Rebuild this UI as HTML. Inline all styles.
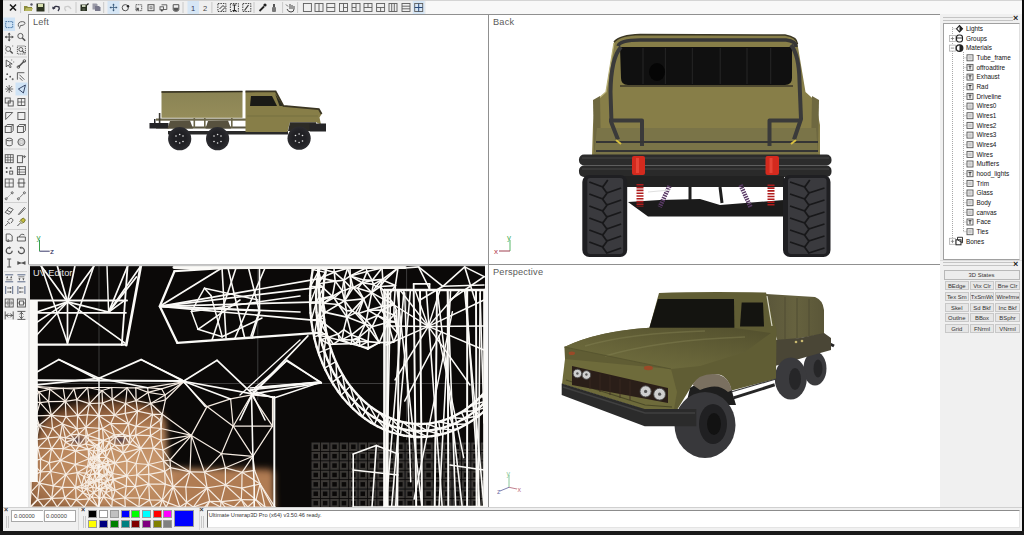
<!DOCTYPE html>
<html><head><meta charset="utf-8">
<style>
*{margin:0;padding:0;box-sizing:border-box}
html,body{width:1024px;height:535px;overflow:hidden;background:#f0f0f0;font-family:"Liberation Sans",sans-serif;position:relative}
.a{position:absolute}
#blkL{left:0;top:0;width:3px;height:535px;background:#0a0a0a}
#blkR{left:1022px;top:0;width:2px;height:535px;background:#0a0a0a}
#blkB{left:0;top:531px;width:1024px;height:4px;background:#1a1a1a}
#topbar{left:3px;top:0;width:1019px;height:14px;background:linear-gradient(90deg,#efefef 0,#efefef 423px,#f8f8f8 423px);border-top:1px solid #d4d4d4}
#lefttb{left:3px;top:14px;width:25px;height:306px;background:#f0f0f0}
#leftwh{left:3px;top:320px;width:25px;height:187px;background:#fdfdfd}
.vp{position:absolute;background:#fff;overflow:hidden}
.lbl{position:absolute;font-size:9.2px;color:#5a5a5a;letter-spacing:0.2px}
#rp{left:940px;top:14px;width:82px;height:493px;background:#f0f0f0}
#tree{left:943px;top:23px;width:77px;height:237px;background:#fff;border:1px solid #a0a0a0;border-right:1px solid #e0e0e0}
.ti{position:absolute;font-size:6.4px;color:#111;white-space:nowrap}
.btn{position:absolute;background:#e6e6e6;border:1px solid #c8c8c8;font-size:5.9px;color:#333;text-align:center;line-height:8px;white-space:nowrap;overflow:hidden}
#status{left:3px;top:507px;width:1019px;height:24px;background:#f0f0f0;border-top:1px solid #d0d0d0}
.sw{position:absolute;width:9px;height:8px}
</style></head><body>
<div id="blkL" class="a"></div>
<div id="blkR" class="a"></div>
<div id="blkB" class="a"></div>
<div id="topbar" class="a"></div>
<div id="lefttb" class="a"></div>
<div id="leftwh" class="a"></div>

<!-- viewports -->
<div class="vp" id="vpL" style="left:28px;top:14px;width:460px;height:250px;border-left:1px solid #909090;border-top:1px solid #909090">
  <div class="lbl" style="left:4px;top:2px">Left</div>
</div>
<div class="vp" id="vpB" style="left:488px;top:14px;width:452px;height:250px;border-left:1px solid #909090;border-top:1px solid #909090">
  <div class="lbl" style="left:4px;top:2px">Back</div>
</div>
<div class="vp" id="vpU" style="left:28px;top:264px;width:460px;height:243px;border-top:1px solid #c0c0c0;background:#fafafa">
  <div class="lbl" style="left:4px;top:2px;color:#ddd">UV Editor</div>
</div>
<div class="vp" id="vpP" style="left:488px;top:264px;width:452px;height:243px;border-left:1px solid #909090;border-top:1px solid #909090">
  <div class="lbl" style="left:4px;top:2px">Perspective</div>
</div>

<div id="rp" class="a"></div>
<div id="tree" class="a"></div>

<div id="status" class="a"></div>
<svg class="a" style="left:0;top:0" width="1024" height="535" viewBox="0 0 1024 535">
<g font-family="Liberation Sans" font-size="8">
 <path d="M39.5,240V251.2H49.7" fill="none" stroke="#3a3a6a" stroke-width="1"/>
 <path d="M39.5,240V251" stroke="#3aa04a" stroke-width="1"/>
 <text x="36.5" y="239.5" fill="#3aa04a">y</text>
 <text x="50" y="253.5" fill="#2a2a5a">z</text>
 <path d="M510,240V251" stroke="#5ab86a" stroke-width="1"/>
 <path d="M499,251H510" stroke="#a04050" stroke-width="1"/>
 <text x="507" y="239.5" fill="#4ab05a">y</text>
 <text x="494" y="254" fill="#b03a4a">x</text>
 <path d="M509,487.3V475" stroke="#8ac89a" stroke-width="1"/>
 <path d="M509,487.3L517,489" stroke="#c08090" stroke-width="1"/>
 <path d="M509,487.3L500,491" stroke="#8080b0" stroke-width="1"/>
 <text x="506.5" y="476" fill="#8ac89a" font-size="7">y</text>
 <text x="517.5" y="492" fill="#c07080" font-size="7">x</text>
 <text x="497" y="494" fill="#7070a8" font-size="7">z</text>
</g>
</svg>

<svg class="a" style="left:0;top:0" width="1024" height="535" viewBox="0 0 1024 535">
<defs>
<clipPath id="cL"><rect x="29" y="15" width="459" height="249"/></clipPath>
<clipPath id="cB"><rect x="489" y="15" width="451" height="249"/></clipPath>
<clipPath id="cP"><rect x="489" y="265" width="451" height="242"/></clipPath>
<linearGradient id="canvL" x1="0" y1="0" x2="0" y2="1"><stop offset="0" stop-color="#8a8354"/><stop offset="1" stop-color="#958d5a"/></linearGradient>
<radialGradient id="tireG" cx="0.5" cy="0.5" r="0.5"><stop offset="0.55" stop-color="#202024"/><stop offset="1" stop-color="#2c2c30"/></radialGradient>
</defs>
<!-- LEFT VIEW TRUCK -->
<g clip-path="url(#cL)">
 <rect x="161.5" y="91.3" width="81" height="26.5" fill="url(#canvL)"/>
 <path d="M161.5,92 L242.5,91.5" stroke="#2e2a1c" stroke-width="1.6"/>
 <rect x="156" y="118.5" width="90" height="2.2" fill="#6b664a"/>
 <rect x="156" y="126.5" width="90" height="2" fill="#5a5644"/>
 <rect x="158.8" y="113" width="1.6" height="15" fill="#3a3830"/>
 <rect x="193.5" y="118" width="1.6" height="10" fill="#6b664a"/>
 <rect x="204" y="118" width="1.6" height="10" fill="#6b664a"/>
 <rect x="231" y="118" width="1.6" height="10" fill="#6b664a"/>
 <rect x="149.5" y="123" width="19" height="5.5" fill="#232326"/>
 <rect x="154" y="119" width="1.5" height="5" fill="#232326"/>
 <path d="M167.5,128.5 L170,121 L190,120.5 L193,128.5 Z" fill="#57513e"/>
 <path d="M205.5,128.5 L208,121 L228,120.5 L231,128.5 Z" fill="#57513e"/>
 <rect x="168" y="131" width="120" height="3.5" fill="#2a2a2a"/>
 <path d="M245.5,91.3 L275.6,91.3 L283.4,106 L318.8,109 L321.6,114 L319.5,117.5 L321,124.5 L316,122.3 L290,122.3 L287.4,132.1 L245.5,132.1 Z" fill="#877e48"/>
 <path d="M247,116 L318,116" stroke="#767040" stroke-width="1.2"/>
 <path d="M245.5,91.5 L275.6,91.3 L283.4,106 L318.8,109 L321.6,114" fill="none" stroke="#3a3522" stroke-width="1.8"/>
 <path d="M251,96 L272,96 L277,106 L250,106 Z" fill="#1a1a16"/>
 <path d="M275,93.5 L283,106 L279.5,106 Z" fill="#2a2a1e"/>
 <path d="M290,122.3 L316,122.3 L316,131 L288,131 Z" fill="#2c2b26"/>
 <rect x="309.6" y="123.5" width="16.4" height="8" fill="#252527"/>
 <circle cx="179.7" cy="138.7" r="11.6" fill="url(#tireG)"/>
 <circle cx="217.6" cy="138.7" r="11.6" fill="url(#tireG)"/>
 <circle cx="299.1" cy="138.2" r="11.6" fill="url(#tireG)"/>
 <g fill="#e8e8e8">
  <circle cx="176" cy="136" r="0.8"/><circle cx="183" cy="136" r="0.8"/><circle cx="176" cy="141.5" r="0.8"/><circle cx="183" cy="141.5" r="0.8"/><circle cx="179.7" cy="134.5" r="0.8"/><circle cx="179.7" cy="143" r="0.8"/>
  <circle cx="214" cy="136" r="0.8"/><circle cx="221" cy="136" r="0.8"/><circle cx="214" cy="141.5" r="0.8"/><circle cx="221" cy="141.5" r="0.8"/><circle cx="217.6" cy="134.5" r="0.8"/><circle cx="217.6" cy="143" r="0.8"/>
  <circle cx="295.5" cy="135.5" r="0.8"/><circle cx="302.5" cy="135.5" r="0.8"/><circle cx="295.5" cy="141" r="0.8"/><circle cx="302.5" cy="141" r="0.8"/><circle cx="299.1" cy="134" r="0.8"/><circle cx="299.1" cy="142.5" r="0.8"/>
 </g>
</g>

<!-- BACK VIEW TRUCK -->
<g clip-path="url(#cB)">
 <path d="M614,42 Q620,35 640,34.5 L785,35 Q797,37 797.5,44 L805.5,92 L815.5,101 L820,125 L820,156 L592,156 L593,125 L595.5,101 L606,92 Z" fill="#877e48"/>
 <path d="M614,42 Q620,35 640,34.5 L785,35 Q797,37 797.5,44" fill="none" stroke="#3a3624" stroke-width="1.5"/>
 <path d="M614,43 L606,92 L597,100" fill="none" stroke="#b8b078" stroke-width="1.3"/>
 <path d="M593,100 L600,96 L601,152 L594,152 Z" fill="#6e6840"/>
 <path d="M819,100 L812,96 L811,152 L818,152 Z" fill="#6e6840"/>
 <path d="M597,128 L816,128 L818,156 L594,156 Z" fill="#7a7448"/>
 <path d="M620,47 L792,47 L792,78 Q792,85 785,85 L628,85 Q621,85 621,78 Z" fill="#101010"/>
 <path d="M618,46 Q620,40 640,40 L786,40 Q796,41 796,47" fill="none" stroke="#363636" stroke-width="3.5"/>
 <path d="M620,86 L793,86" stroke="#3c3828" stroke-width="1.5"/>
 <g stroke="#262626" stroke-width="1"><path d="M643,48V84M665.4,48V84M692.3,48V84M720.2,48V84M747,48V84M770.7,48V84"/></g>
 <ellipse cx="657" cy="72" rx="8" ry="9" fill="#050505"/>
 <g fill="none" stroke="#3a3a3a" stroke-width="4" stroke-linejoin="round">
  <path d="M621,47 Q611,58 610.5,92 L611.5,123 L618,139.5"/>
  <path d="M791,45 Q799,55 799.5,81 L801,119 L794,139.5"/>
  <path d="M609,120.4 L642,120.4 L642,146"/>
  <path d="M769.5,146 L769.5,120.4 L801,120.4"/>
 </g>
 <g stroke="#353535" stroke-width="2.2"><path d="M596,142H818M596,151H818"/></g>
 <path d="M616,140 L621,144" stroke="#d8c040" stroke-width="2"/>
 <path d="M796,140 L791,144" stroke="#d8c040" stroke-width="2"/>
 <rect x="579" y="154.5" width="252.5" height="11" rx="5" fill="#2c2c2c"/>
 <rect x="579" y="165.5" width="252.5" height="11.5" rx="5" fill="#2a2a2a"/>
 <path d="M582,158H829M582,169H829" stroke="#3e3e3e" stroke-width="1.5"/>
 <rect x="632" y="156" width="13" height="19" rx="2" fill="#d42a1e"/>
 <rect x="765.5" y="156" width="13.5" height="19" rx="2" fill="#d42a1e"/>
 <rect x="636" y="158" width="3" height="15" fill="#f05040" opacity="0.7"/>
 <rect x="769.5" y="158" width="3" height="15" fill="#f05040" opacity="0.7"/>
 <rect x="600" y="176" width="184" height="11" fill="#222"/>
 <path d="M628,202 L648,216.5 L784,216.5 L784,200 L720,205 L700,199 L660,200 Z" fill="#1b1b1b"/>
 <path d="M690,187 L690,200 M720,187 L722,203" stroke="#1e1e1e" stroke-width="3"/>
 <g stroke="#b01c1c" stroke-width="7" stroke-dasharray="1.6 1.2"><path d="M640,184V207M771,184.5V205.5"/></g>
 <path d="M669.5,186 L659.7,207" stroke="#5a3a66" stroke-width="4.5" stroke-dasharray="1.5 1"/>
 <path d="M740.5,185 L750.5,207" stroke="#5a3a66" stroke-width="4.5" stroke-dasharray="1.5 1"/>
 <path d="M648,192 L670,190" stroke="#e0e0e0" stroke-width="1"/>
 <rect x="582.3" y="175" width="44.9" height="82" rx="7" fill="#1f1f22"/>
 <rect x="587.3" y="178" width="35.9" height="76" rx="3" fill="#3a3a3e"/>
 <path d="M589.3,182 L602.8,187 L607.8,180 M621.2,188 L606.8,193 L601.8,186 M589.3,194 L602.8,199 L607.8,192 M621.2,200 L606.8,205 L601.8,198 M589.3,206 L602.8,211 L607.8,204 M621.2,212 L606.8,217 L601.8,210 M589.3,218 L602.8,223 L607.8,216 M621.2,224 L606.8,229 L601.8,222 M589.3,230 L602.8,235 L607.8,228 M621.2,236 L606.8,241 L601.8,234 M589.3,242 L602.8,247 L607.8,240 M621.2,248 L606.8,253 L601.8,246" fill="none" stroke="#18181a" stroke-width="1.8"/>
 <rect x="783.0" y="175" width="47.5" height="82" rx="7" fill="#1f1f22"/>
 <rect x="788.0" y="178" width="38.5" height="76" rx="3" fill="#3a3a3e"/>
 <path d="M790.0,182 L804.8,187 L809.8,180 M824.5,188 L808.8,193 L803.8,186 M790.0,194 L804.8,199 L809.8,192 M824.5,200 L808.8,205 L803.8,198 M790.0,206 L804.8,211 L809.8,204 M824.5,212 L808.8,217 L803.8,210 M790.0,218 L804.8,223 L809.8,216 M824.5,224 L808.8,229 L803.8,222 M790.0,230 L804.8,235 L809.8,228 M824.5,236 L808.8,241 L803.8,234 M790.0,242 L804.8,247 L809.8,240 M824.5,248 L808.8,253 L803.8,246" fill="none" stroke="#18181a" stroke-width="1.8"/>
</g>

<!-- PERSPECTIVE TRUCK -->
<defs>
<linearGradient id="hoodG" x1="0" y1="1" x2="0.8" y2="0"><stop offset="0" stop-color="#737140"/><stop offset="0.45" stop-color="#676439"/><stop offset="1" stop-color="#55522f"/></linearGradient>
<linearGradient id="canvG" x1="0" y1="0" x2="1" y2="0"><stop offset="0" stop-color="#5a563a"/><stop offset="0.5" stop-color="#66623f"/><stop offset="1" stop-color="#5a5638"/></linearGradient>
</defs>
<g clip-path="url(#cP)">
 <path d="M766,294 L815,297 Q823,300 824,310 L824,334 L778,342 L772,325 Z" fill="url(#canvG)"/>
 <path d="M785,297V339M797,298V338M809,299V336" stroke="#4e4a32" stroke-width="1.2" opacity="0.7"/>
 <path d="M822,340 L834,346" stroke="#252525" stroke-width="3"/>
 <ellipse cx="815" cy="368.5" rx="11.5" ry="17" fill="#3a3a3d"/>
 <ellipse cx="818" cy="368.5" rx="4.5" ry="9" fill="#262628"/>
 <path d="M774,340 L800,338 L824,333 L831,338 L831,350 L806,357 L775,366 Z" fill="#4a4636"/>
 <circle cx="796" cy="342" r="1.3" fill="#c8b870"/><circle cx="802" cy="341" r="1.3" fill="#c8b870"/>
 <ellipse cx="790.8" cy="378.5" rx="16" ry="21" fill="#3a3a3d"/>
 <ellipse cx="795" cy="379" rx="6" ry="11" fill="#262628"/>
 <path d="M659,293 Q700,291.5 766,292.5 L776.5,330 L776,379 L731.6,390.4 Q728,376 718.5,374.5 Q700,374 692.4,384.8 L677,410 L645,410 L568.5,380 L565,359 L564.4,347 Q598,331 649.4,327.8 Z" fill="#605d34"/>
 <path d="M564.4,347 Q598,331 649.4,327.8 L735,328 L771,333 L745,352 L700,366 L671,369 Z" fill="url(#hoodG)"/>
 <path d="M585,346 Q630,333 705,331 M605,356 Q660,340 745,337" stroke="#858254" stroke-width="1.6" fill="none" opacity="0.45"/>
 <path d="M565,359 L671,369 L677,392 L674,409 L644.7,409.5 L562,384 Z" fill="#6e6b3b"/>
 <path d="M566,380 L645,405 L672,407" fill="none" stroke="#4a4828" stroke-width="1.2"/>
 <path d="M564.4,347 L671,369" stroke="#585630" stroke-width="1.2"/>
 <path d="M658,299 L734,299 L734.4,327.8 L649.4,327.8 Z" fill="#141410"/>
 <path d="M741.7,302.5 L763,302.5 L764,326.5 L740,326.5 Z" fill="#141410"/>
 <path d="M767,296 L772,326" stroke="#d8d8c8" stroke-width="1.2"/>
 <path d="M572,366 L668,388 L668,403 L572,385 Z" fill="#2a1e18"/>
 <g stroke="#3a2a22" stroke-width="0.8"><path d="M590,371V389M600,374V392M610,376V395M620,379V398M630,381V400"/></g>
 <g fill="#cfcfcf" stroke="#4a4a4a" stroke-width="0.9">
  <circle cx="577.4" cy="373.5" r="4.3"/><circle cx="586.4" cy="375" r="4.3"/>
  <circle cx="645.6" cy="391.4" r="5.6"/><circle cx="659.6" cy="394.2" r="5.9"/>
 </g>
 <g fill="#555"><circle cx="577.4" cy="373.5" r="1.2"/><circle cx="586.4" cy="374.5" r="1.2"/><circle cx="645.6" cy="391.4" r="1.6"/><circle cx="659.6" cy="394.2" r="1.6"/></g>
 <ellipse cx="571.8" cy="353.3" rx="3.2" ry="1.8" fill="#9a4a28"/>
 <ellipse cx="648.4" cy="368" rx="4.5" ry="2.2" fill="#9a4a28"/>
 <path d="M690,388 Q703,378 719,379 Q731,383 733,395 L736,405 L686,405 Z" fill="#1e1e1e"/>
 <path d="M692.4,384.8 Q700,372 718.5,374.5 Q730,378 731.6,390.4 L728,392 Q718,382 700,390 Z" fill="#7a7060"/>
 <path d="M733.5,397.9 L774.7,384.8" stroke="#262626" stroke-width="3"/>
 <path d="M731,392 L776,379" stroke="#3a3a3a" stroke-width="1.2"/>
 <ellipse cx="705" cy="425" rx="30.5" ry="33" fill="#38383b"/>
 <ellipse cx="713" cy="424" rx="14" ry="20" fill="#202022"/>
 <ellipse cx="714" cy="424" rx="7" ry="11" fill="#121212"/>
 <path d="M561.7,383.6 L644.7,409 L696.3,409 L696.3,426.2 L644.7,426.2 L561.7,395 Z" fill="#2b2b2b"/>
 <path d="M563,387 L645,413 L695,413" fill="none" stroke="#404040" stroke-width="1.5"/>
</g>
</svg>

<svg class="a" style="left:0;top:0" width="1024" height="535" viewBox="0 0 1024 535">
<defs>
<clipPath id="cU"><rect x="28" y="265" width="457" height="242"/></clipPath>
<radialGradient id="skin" cx="0.42" cy="0.62" r="0.62"><stop offset="0" stop-color="#cc9c72"/><stop offset="0.55" stop-color="#b8845a"/><stop offset="0.85" stop-color="#8a5a38"/><stop offset="1" stop-color="#3a2416"/></radialGradient>
<radialGradient id="eye" cx="0.5" cy="0.5" r="0.5"><stop offset="0" stop-color="#4a3a48"/><stop offset="1" stop-color="#8a6a58" stop-opacity="0"/></radialGradient>
<filter id="blur2"><feGaussianBlur stdDeviation="3"/></filter><filter id="blur1"><feGaussianBlur stdDeviation="0.7"/></filter>
</defs>
<g clip-path="url(#cU)">
<rect x="28" y="265" width="459" height="242" fill="#0b0908"/>
<g filter="url(#blur2)">
<path d="M36,440 Q42,400 103,398 Q155,398 166,420 L168,468 L205,469 L272,468 L276,510 L28,510 L28,450 Z" fill="url(#skin)"/>
<rect x="172" y="472" width="102" height="40" fill="#b07c52"/>
</g>
<ellipse cx="76.8" cy="440" rx="13" ry="7" fill="url(#eye)"/>
<ellipse cx="120.5" cy="440" rx="13" ry="7" fill="url(#eye)"/>
<g fill="none" stroke="#3a3836" stroke-width="2" filter="url(#blur1)">
<rect x="312.5" y="443.5" width="6.5" height="6.5"/>
<rect x="312.5" y="452.9" width="6.5" height="6.5"/>
<rect x="312.5" y="462.3" width="6.5" height="6.5"/>
<rect x="312.5" y="471.7" width="6.5" height="6.5"/>
<rect x="312.5" y="481.1" width="6.5" height="6.5"/>
<rect x="312.5" y="490.5" width="6.5" height="6.5"/>
<rect x="312.5" y="499.9" width="6.5" height="6.5"/>
<rect x="321.9" y="443.5" width="6.5" height="6.5"/>
<rect x="321.9" y="452.9" width="6.5" height="6.5"/>
<rect x="321.9" y="462.3" width="6.5" height="6.5"/>
<rect x="321.9" y="471.7" width="6.5" height="6.5"/>
<rect x="321.9" y="481.1" width="6.5" height="6.5"/>
<rect x="321.9" y="490.5" width="6.5" height="6.5"/>
<rect x="321.9" y="499.9" width="6.5" height="6.5"/>
<rect x="331.3" y="443.5" width="6.5" height="6.5"/>
<rect x="331.3" y="452.9" width="6.5" height="6.5"/>
<rect x="331.3" y="462.3" width="6.5" height="6.5"/>
<rect x="331.3" y="471.7" width="6.5" height="6.5"/>
<rect x="331.3" y="481.1" width="6.5" height="6.5"/>
<rect x="331.3" y="490.5" width="6.5" height="6.5"/>
<rect x="331.3" y="499.9" width="6.5" height="6.5"/>
<rect x="340.7" y="443.5" width="6.5" height="6.5"/>
<rect x="340.7" y="452.9" width="6.5" height="6.5"/>
<rect x="340.7" y="462.3" width="6.5" height="6.5"/>
<rect x="340.7" y="471.7" width="6.5" height="6.5"/>
<rect x="340.7" y="481.1" width="6.5" height="6.5"/>
<rect x="340.7" y="490.5" width="6.5" height="6.5"/>
<rect x="340.7" y="499.9" width="6.5" height="6.5"/>
<rect x="350.1" y="443.5" width="6.5" height="6.5"/>
<rect x="350.1" y="452.9" width="6.5" height="6.5"/>
<rect x="350.1" y="462.3" width="6.5" height="6.5"/>
<rect x="350.1" y="471.7" width="6.5" height="6.5"/>
<rect x="350.1" y="481.1" width="6.5" height="6.5"/>
<rect x="350.1" y="490.5" width="6.5" height="6.5"/>
<rect x="350.1" y="499.9" width="6.5" height="6.5"/>
<rect x="359.5" y="443.5" width="6.5" height="6.5"/>
<rect x="359.5" y="452.9" width="6.5" height="6.5"/>
<rect x="359.5" y="462.3" width="6.5" height="6.5"/>
<rect x="359.5" y="471.7" width="6.5" height="6.5"/>
<rect x="359.5" y="481.1" width="6.5" height="6.5"/>
<rect x="359.5" y="490.5" width="6.5" height="6.5"/>
<rect x="359.5" y="499.9" width="6.5" height="6.5"/>
<rect x="368.9" y="443.5" width="6.5" height="6.5"/>
<rect x="368.9" y="452.9" width="6.5" height="6.5"/>
<rect x="368.9" y="462.3" width="6.5" height="6.5"/>
<rect x="368.9" y="471.7" width="6.5" height="6.5"/>
<rect x="368.9" y="481.1" width="6.5" height="6.5"/>
<rect x="368.9" y="490.5" width="6.5" height="6.5"/>
<rect x="368.9" y="499.9" width="6.5" height="6.5"/>
<rect x="378.3" y="443.5" width="6.5" height="6.5"/>
<rect x="378.3" y="452.9" width="6.5" height="6.5"/>
<rect x="378.3" y="462.3" width="6.5" height="6.5"/>
<rect x="378.3" y="471.7" width="6.5" height="6.5"/>
<rect x="378.3" y="481.1" width="6.5" height="6.5"/>
<rect x="378.3" y="490.5" width="6.5" height="6.5"/>
<rect x="378.3" y="499.9" width="6.5" height="6.5"/>
<rect x="387.7" y="443.5" width="6.5" height="6.5"/>
<rect x="387.7" y="452.9" width="6.5" height="6.5"/>
<rect x="387.7" y="462.3" width="6.5" height="6.5"/>
<rect x="387.7" y="471.7" width="6.5" height="6.5"/>
<rect x="387.7" y="481.1" width="6.5" height="6.5"/>
<rect x="387.7" y="490.5" width="6.5" height="6.5"/>
<rect x="387.7" y="499.9" width="6.5" height="6.5"/>
<rect x="397.1" y="443.5" width="6.5" height="6.5"/>
<rect x="397.1" y="452.9" width="6.5" height="6.5"/>
<rect x="397.1" y="462.3" width="6.5" height="6.5"/>
<rect x="397.1" y="471.7" width="6.5" height="6.5"/>
<rect x="397.1" y="481.1" width="6.5" height="6.5"/>
<rect x="397.1" y="490.5" width="6.5" height="6.5"/>
<rect x="397.1" y="499.9" width="6.5" height="6.5"/>
<rect x="406.5" y="443.5" width="6.5" height="6.5"/>
<rect x="406.5" y="452.9" width="6.5" height="6.5"/>
<rect x="406.5" y="462.3" width="6.5" height="6.5"/>
<rect x="406.5" y="471.7" width="6.5" height="6.5"/>
<rect x="406.5" y="481.1" width="6.5" height="6.5"/>
<rect x="406.5" y="490.5" width="6.5" height="6.5"/>
<rect x="406.5" y="499.9" width="6.5" height="6.5"/>
<rect x="415.9" y="443.5" width="6.5" height="6.5"/>
<rect x="415.9" y="452.9" width="6.5" height="6.5"/>
<rect x="415.9" y="462.3" width="6.5" height="6.5"/>
<rect x="415.9" y="471.7" width="6.5" height="6.5"/>
<rect x="415.9" y="481.1" width="6.5" height="6.5"/>
<rect x="415.9" y="490.5" width="6.5" height="6.5"/>
<rect x="415.9" y="499.9" width="6.5" height="6.5"/>
<rect x="425.3" y="443.5" width="6.5" height="6.5"/>
<rect x="425.3" y="452.9" width="6.5" height="6.5"/>
<rect x="425.3" y="462.3" width="6.5" height="6.5"/>
<rect x="425.3" y="471.7" width="6.5" height="6.5"/>
<rect x="425.3" y="481.1" width="6.5" height="6.5"/>
<rect x="425.3" y="490.5" width="6.5" height="6.5"/>
<rect x="425.3" y="499.9" width="6.5" height="6.5"/>
<rect x="434.7" y="443.5" width="6.5" height="6.5"/>
<rect x="434.7" y="452.9" width="6.5" height="6.5"/>
<rect x="434.7" y="462.3" width="6.5" height="6.5"/>
<rect x="434.7" y="471.7" width="6.5" height="6.5"/>
<rect x="434.7" y="481.1" width="6.5" height="6.5"/>
<rect x="434.7" y="490.5" width="6.5" height="6.5"/>
<rect x="434.7" y="499.9" width="6.5" height="6.5"/>
<rect x="444.1" y="443.5" width="6.5" height="6.5"/>
<rect x="444.1" y="452.9" width="6.5" height="6.5"/>
<rect x="444.1" y="462.3" width="6.5" height="6.5"/>
<rect x="444.1" y="471.7" width="6.5" height="6.5"/>
<rect x="444.1" y="481.1" width="6.5" height="6.5"/>
<rect x="444.1" y="490.5" width="6.5" height="6.5"/>
<rect x="444.1" y="499.9" width="6.5" height="6.5"/>
<rect x="453.5" y="443.5" width="6.5" height="6.5"/>
<rect x="453.5" y="452.9" width="6.5" height="6.5"/>
<rect x="453.5" y="462.3" width="6.5" height="6.5"/>
<rect x="453.5" y="471.7" width="6.5" height="6.5"/>
<rect x="453.5" y="481.1" width="6.5" height="6.5"/>
<rect x="453.5" y="490.5" width="6.5" height="6.5"/>
<rect x="453.5" y="499.9" width="6.5" height="6.5"/>
<rect x="462.9" y="443.5" width="6.5" height="6.5"/>
<rect x="462.9" y="452.9" width="6.5" height="6.5"/>
<rect x="462.9" y="462.3" width="6.5" height="6.5"/>
<rect x="462.9" y="471.7" width="6.5" height="6.5"/>
<rect x="462.9" y="481.1" width="6.5" height="6.5"/>
<rect x="462.9" y="490.5" width="6.5" height="6.5"/>
<rect x="462.9" y="499.9" width="6.5" height="6.5"/>
<rect x="472.3" y="443.5" width="6.5" height="6.5"/>
<rect x="472.3" y="452.9" width="6.5" height="6.5"/>
<rect x="472.3" y="462.3" width="6.5" height="6.5"/>
<rect x="472.3" y="471.7" width="6.5" height="6.5"/>
<rect x="472.3" y="481.1" width="6.5" height="6.5"/>
<rect x="472.3" y="490.5" width="6.5" height="6.5"/>
<rect x="472.3" y="499.9" width="6.5" height="6.5"/>
<rect x="481.7" y="443.5" width="6.5" height="6.5"/>
<rect x="481.7" y="452.9" width="6.5" height="6.5"/>
<rect x="481.7" y="462.3" width="6.5" height="6.5"/>
<rect x="481.7" y="471.7" width="6.5" height="6.5"/>
<rect x="481.7" y="481.1" width="6.5" height="6.5"/>
<rect x="481.7" y="490.5" width="6.5" height="6.5"/>
<rect x="481.7" y="499.9" width="6.5" height="6.5"/>
</g>
<g stroke="#4a4a4a" stroke-width="0.8"><path d="M99,266V400M257.8,266V400M406.6,266V440M28,383.5H487"/></g>
<g stroke="#f6ece2" stroke-linecap="round">
<line x1="225.4" y1="467.8" x2="225.4" y2="485.0" stroke-width="1.22"/>
<line x1="260.1" y1="484.0" x2="265.0" y2="507.0" stroke-width="1.22"/>
<line x1="39.0" y1="392.0" x2="49.8" y2="389.2" stroke-width="1.22"/>
<line x1="221.0" y1="501.7" x2="225.0" y2="507.0" stroke-width="1.22"/>
<line x1="77.3" y1="472.7" x2="75.6" y2="487.4" stroke-width="1.22"/>
<line x1="251.5" y1="394.8" x2="233.2" y2="426.2" stroke-width="1.22"/>
<line x1="57.2" y1="507.0" x2="51.7" y2="498.3" stroke-width="1.22"/>
<line x1="138.9" y1="507.0" x2="152.5" y2="507.0" stroke-width="1.22"/>
<line x1="242.1" y1="472.3" x2="241.8" y2="488.2" stroke-width="1.22"/>
<line x1="85.5" y1="486.4" x2="81.7" y2="485.4" stroke-width="1.22"/>
<line x1="103.7" y1="466.6" x2="103.0" y2="466.3" stroke-width="1.22"/>
<line x1="39.3" y1="425.3" x2="52.5" y2="428.5" stroke-width="1.22"/>
<line x1="70.8" y1="507.0" x2="64.8" y2="497.8" stroke-width="1.22"/>
<line x1="88.2" y1="449.4" x2="93.2" y2="455.8" stroke-width="1.22"/>
<line x1="110.2" y1="485.7" x2="113.3" y2="479.6" stroke-width="1.22"/>
<line x1="107.7" y1="480.5" x2="105.0" y2="483.4" stroke-width="1.22"/>
<line x1="74.4" y1="439.3" x2="65.5" y2="437.9" stroke-width="1.22"/>
<line x1="111.8" y1="387.5" x2="127.1" y2="387.8" stroke-width="1.22"/>
<line x1="111.3" y1="475.3" x2="108.4" y2="472.0" stroke-width="1.22"/>
<line x1="40.5" y1="459.2" x2="49.4" y2="462.6" stroke-width="1.22"/>
<line x1="115.5" y1="436.5" x2="122.6" y2="434.1" stroke-width="1.22"/>
<line x1="127.1" y1="387.8" x2="135.8" y2="387.8" stroke-width="1.22"/>
<line x1="110.7" y1="423.6" x2="128.4" y2="423.7" stroke-width="1.22"/>
<line x1="114.5" y1="415.3" x2="128.4" y2="423.7" stroke-width="1.22"/>
<line x1="127.1" y1="387.8" x2="112.2" y2="399.4" stroke-width="1.22"/>
<line x1="37.9" y1="448.1" x2="40.5" y2="459.2" stroke-width="1.22"/>
<line x1="39.4" y1="483.1" x2="51.7" y2="498.3" stroke-width="1.22"/>
<line x1="37.7" y1="499.5" x2="51.7" y2="498.3" stroke-width="1.22"/>
<line x1="98.4" y1="472.8" x2="103.0" y2="466.3" stroke-width="1.22"/>
<line x1="225.4" y1="467.8" x2="242.1" y2="472.3" stroke-width="1.22"/>
<line x1="260.1" y1="484.0" x2="256.0" y2="499.8" stroke-width="1.22"/>
<line x1="103.7" y1="466.6" x2="98.4" y2="472.8" stroke-width="1.22"/>
<line x1="128.4" y1="423.7" x2="136.1" y2="426.4" stroke-width="1.22"/>
<line x1="31.0" y1="476.8" x2="39.4" y2="483.1" stroke-width="1.22"/>
<line x1="251.5" y1="394.8" x2="272.5" y2="426.2" stroke-width="1.22"/>
<line x1="242.1" y1="472.3" x2="254.6" y2="470.4" stroke-width="1.22"/>
<line x1="170.0" y1="460.0" x2="190.0" y2="471.8" stroke-width="1.22"/>
<line x1="65.3" y1="401.3" x2="76.8" y2="399.6" stroke-width="1.22"/>
<line x1="100.6" y1="479.5" x2="99.4" y2="474.7" stroke-width="1.22"/>
<line x1="88.8" y1="440.0" x2="86.0" y2="443.9" stroke-width="1.22"/>
<line x1="65.3" y1="401.3" x2="51.4" y2="415.3" stroke-width="1.22"/>
<line x1="100.6" y1="479.5" x2="102.9" y2="483.0" stroke-width="1.22"/>
<line x1="126.9" y1="460.8" x2="136.0" y2="463.5" stroke-width="1.22"/>
<line x1="97.7" y1="450.3" x2="96.9" y2="445.1" stroke-width="1.22"/>
<line x1="60.2" y1="436.9" x2="63.2" y2="448.7" stroke-width="1.22"/>
<line x1="89.6" y1="464.0" x2="91.1" y2="465.0" stroke-width="1.22"/>
<line x1="109.3" y1="464.7" x2="107.9" y2="460.7" stroke-width="1.22"/>
<line x1="97.1" y1="465.3" x2="97.1" y2="459.7" stroke-width="1.22"/>
<line x1="76.8" y1="399.6" x2="89.4" y2="403.7" stroke-width="1.22"/>
<line x1="165.0" y1="395.0" x2="148.0" y2="392.4" stroke-width="1.22"/>
<line x1="110.2" y1="485.7" x2="110.4" y2="486.2" stroke-width="1.22"/>
<line x1="31.0" y1="491.9" x2="39.4" y2="483.1" stroke-width="1.22"/>
<line x1="124.8" y1="497.8" x2="139.5" y2="498.0" stroke-width="1.22"/>
<line x1="31.0" y1="431.4" x2="31.0" y2="446.5" stroke-width="1.22"/>
<line x1="115.5" y1="436.5" x2="122.6" y2="445.9" stroke-width="1.22"/>
<line x1="89.7" y1="484.1" x2="86.2" y2="482.2" stroke-width="1.22"/>
<line x1="111.7" y1="490.2" x2="108.2" y2="487.7" stroke-width="1.22"/>
<line x1="70.8" y1="434.8" x2="78.9" y2="434.1" stroke-width="1.22"/>
<line x1="150.7" y1="403.5" x2="152.6" y2="414.3" stroke-width="1.22"/>
<line x1="247.8" y1="507.0" x2="245.0" y2="507.0" stroke-width="1.22"/>
<line x1="123.2" y1="452.9" x2="114.5" y2="445.2" stroke-width="1.22"/>
<line x1="183.5" y1="381.8" x2="165.0" y2="395.0" stroke-width="1.22"/>
<line x1="97.8" y1="468.2" x2="93.9" y2="468.5" stroke-width="1.22"/>
<line x1="60.2" y1="436.9" x2="65.5" y2="442.1" stroke-width="1.22"/>
<line x1="170.5" y1="467.7" x2="164.6" y2="471.4" stroke-width="1.22"/>
<line x1="92.6" y1="468.1" x2="94.1" y2="467.5" stroke-width="1.22"/>
<line x1="78.9" y1="434.1" x2="86.0" y2="436.1" stroke-width="1.22"/>
<line x1="103.7" y1="466.6" x2="105.2" y2="466.8" stroke-width="1.22"/>
<line x1="165.4" y1="399.8" x2="162.3" y2="414.3" stroke-width="1.22"/>
<line x1="96.9" y1="445.1" x2="88.8" y2="440.0" stroke-width="1.22"/>
<line x1="97.1" y1="459.7" x2="93.9" y2="462.6" stroke-width="1.22"/>
<line x1="100.6" y1="479.5" x2="96.1" y2="479.7" stroke-width="1.22"/>
<line x1="89.6" y1="464.0" x2="91.6" y2="459.6" stroke-width="1.22"/>
<line x1="261.4" y1="507.0" x2="265.0" y2="507.0" stroke-width="1.22"/>
<line x1="251.5" y1="394.8" x2="230.6" y2="398.8" stroke-width="1.22"/>
<line x1="160.0" y1="507.0" x2="162.3" y2="500.1" stroke-width="1.22"/>
<line x1="242.1" y1="472.3" x2="225.4" y2="485.0" stroke-width="1.22"/>
<line x1="93.2" y1="455.8" x2="93.5" y2="451.2" stroke-width="1.22"/>
<line x1="97.7" y1="450.3" x2="93.5" y2="451.2" stroke-width="1.22"/>
<line x1="86.3" y1="473.2" x2="84.0" y2="476.5" stroke-width="1.22"/>
<line x1="161.1" y1="440.2" x2="163.0" y2="450.0" stroke-width="1.22"/>
<line x1="147.7" y1="387.7" x2="161.6" y2="388.8" stroke-width="1.22"/>
<line x1="102.5" y1="428.5" x2="109.2" y2="437.9" stroke-width="1.22"/>
<line x1="241.8" y1="488.2" x2="241.3" y2="499.6" stroke-width="1.22"/>
<line x1="100.8" y1="488.6" x2="105.6" y2="492.8" stroke-width="1.22"/>
<line x1="31.0" y1="401.1" x2="39.0" y2="392.0" stroke-width="1.22"/>
<line x1="96.1" y1="479.7" x2="95.5" y2="481.2" stroke-width="1.22"/>
<line x1="193.3" y1="507.0" x2="205.0" y2="507.0" stroke-width="1.22"/>
<line x1="170.0" y1="460.0" x2="163.6" y2="461.0" stroke-width="1.22"/>
<line x1="164.6" y1="471.4" x2="165.3" y2="484.2" stroke-width="1.22"/>
<line x1="98.1" y1="507.0" x2="92.2" y2="497.0" stroke-width="1.22"/>
<line x1="115.5" y1="436.5" x2="114.5" y2="434.8" stroke-width="1.22"/>
<line x1="126.7" y1="476.0" x2="113.3" y2="479.1" stroke-width="1.22"/>
<line x1="109.2" y1="437.9" x2="114.5" y2="434.8" stroke-width="1.22"/>
<line x1="114.5" y1="415.3" x2="110.7" y2="423.6" stroke-width="1.22"/>
<line x1="247.8" y1="507.0" x2="241.3" y2="499.6" stroke-width="1.22"/>
<line x1="39.4" y1="483.1" x2="37.7" y2="499.5" stroke-width="1.22"/>
<line x1="97.8" y1="468.2" x2="103.0" y2="466.3" stroke-width="1.22"/>
<line x1="87.5" y1="466.5" x2="90.9" y2="465.4" stroke-width="1.22"/>
<line x1="92.9" y1="466.0" x2="94.1" y2="467.5" stroke-width="1.22"/>
<line x1="111.1" y1="447.8" x2="115.1" y2="463.1" stroke-width="1.22"/>
<line x1="108.3" y1="470.4" x2="105.2" y2="466.8" stroke-width="1.22"/>
<line x1="261.4" y1="507.0" x2="256.0" y2="499.8" stroke-width="1.22"/>
<line x1="108.3" y1="470.4" x2="109.3" y2="464.7" stroke-width="1.22"/>
<line x1="97.7" y1="450.3" x2="95.3" y2="446.3" stroke-width="1.22"/>
<line x1="31.0" y1="416.2" x2="31.0" y2="431.4" stroke-width="1.22"/>
<line x1="101.4" y1="476.7" x2="100.6" y2="479.5" stroke-width="1.22"/>
<line x1="63.2" y1="388.3" x2="87.7" y2="387.5" stroke-width="1.22"/>
<line x1="97.7" y1="450.3" x2="100.7" y2="448.7" stroke-width="1.22"/>
<line x1="102.1" y1="463.2" x2="107.3" y2="463.8" stroke-width="1.22"/>
<line x1="170.0" y1="460.0" x2="170.5" y2="467.7" stroke-width="1.22"/>
<line x1="63.2" y1="388.3" x2="65.3" y2="401.3" stroke-width="1.22"/>
<line x1="102.1" y1="463.2" x2="103.7" y2="466.6" stroke-width="1.22"/>
<line x1="95.0" y1="473.3" x2="97.8" y2="468.2" stroke-width="1.22"/>
<line x1="63.2" y1="448.7" x2="65.5" y2="442.1" stroke-width="1.22"/>
<line x1="60.2" y1="436.9" x2="51.5" y2="448.6" stroke-width="1.22"/>
<line x1="104.3" y1="475.6" x2="98.4" y2="472.8" stroke-width="1.22"/>
<line x1="241.8" y1="488.2" x2="260.1" y2="484.0" stroke-width="1.22"/>
<line x1="62.3" y1="423.8" x2="60.2" y2="436.9" stroke-width="1.22"/>
<line x1="193.3" y1="507.0" x2="209.6" y2="501.3" stroke-width="1.22"/>
<line x1="111.1" y1="447.8" x2="105.3" y2="451.1" stroke-width="1.22"/>
<line x1="65.8" y1="474.5" x2="77.3" y2="472.7" stroke-width="1.22"/>
<line x1="233.2" y1="426.2" x2="272.5" y2="426.2" stroke-width="1.22"/>
<line x1="98.1" y1="507.0" x2="99.9" y2="498.3" stroke-width="1.22"/>
<line x1="126.3" y1="486.3" x2="124.8" y2="497.8" stroke-width="1.22"/>
<line x1="65.8" y1="474.5" x2="53.3" y2="485.8" stroke-width="1.22"/>
<line x1="96.1" y1="479.7" x2="93.2" y2="480.8" stroke-width="1.22"/>
<line x1="31.0" y1="401.1" x2="36.1" y2="415.8" stroke-width="1.22"/>
<line x1="150.7" y1="403.5" x2="165.4" y2="399.8" stroke-width="1.22"/>
<line x1="150.7" y1="403.5" x2="137.5" y2="411.2" stroke-width="1.22"/>
<line x1="60.4" y1="460.4" x2="65.8" y2="474.5" stroke-width="1.22"/>
<line x1="111.7" y1="507.0" x2="112.4" y2="499.5" stroke-width="1.22"/>
<line x1="148.0" y1="392.4" x2="150.7" y2="403.5" stroke-width="1.22"/>
<line x1="150.5" y1="435.7" x2="161.1" y2="440.2" stroke-width="1.22"/>
<line x1="152.5" y1="507.0" x2="160.0" y2="507.0" stroke-width="1.22"/>
<line x1="75.3" y1="464.3" x2="77.3" y2="472.7" stroke-width="1.22"/>
<line x1="150.5" y1="435.7" x2="140.6" y2="448.4" stroke-width="1.22"/>
<line x1="92.6" y1="468.1" x2="90.9" y2="465.4" stroke-width="1.22"/>
<line x1="92.9" y1="466.0" x2="91.1" y2="465.0" stroke-width="1.22"/>
<line x1="100.6" y1="479.5" x2="104.3" y2="475.6" stroke-width="1.22"/>
<line x1="102.1" y1="463.2" x2="97.1" y2="465.3" stroke-width="1.22"/>
<line x1="109.2" y1="442.1" x2="109.2" y2="437.9" stroke-width="1.22"/>
<line x1="102.1" y1="463.2" x2="97.1" y2="459.7" stroke-width="1.22"/>
<line x1="148.5" y1="464.5" x2="164.6" y2="471.4" stroke-width="1.22"/>
<line x1="148.8" y1="474.3" x2="164.6" y2="471.4" stroke-width="1.22"/>
<line x1="161.1" y1="440.2" x2="153.3" y2="448.2" stroke-width="1.22"/>
<line x1="147.7" y1="387.7" x2="148.0" y2="392.4" stroke-width="1.22"/>
<line x1="57.2" y1="507.0" x2="70.8" y2="507.0" stroke-width="1.22"/>
<line x1="89.1" y1="498.9" x2="82.9" y2="492.5" stroke-width="1.22"/>
<line x1="77.3" y1="472.7" x2="84.0" y2="476.5" stroke-width="1.22"/>
<line x1="103.5" y1="440.3" x2="109.2" y2="442.1" stroke-width="1.22"/>
<line x1="102.5" y1="403.0" x2="114.5" y2="415.3" stroke-width="1.22"/>
<line x1="98.6" y1="415.6" x2="114.5" y2="415.3" stroke-width="1.22"/>
<line x1="161.1" y1="428.5" x2="161.1" y2="440.2" stroke-width="1.22"/>
<line x1="98.6" y1="415.6" x2="85.9" y2="427.3" stroke-width="1.22"/>
<line x1="193.3" y1="507.0" x2="185.0" y2="507.0" stroke-width="1.22"/>
<line x1="160.0" y1="420.0" x2="152.6" y2="414.3" stroke-width="1.22"/>
<line x1="89.7" y1="484.1" x2="90.4" y2="482.1" stroke-width="1.22"/>
<line x1="70.8" y1="507.0" x2="84.4" y2="507.0" stroke-width="1.22"/>
<line x1="111.7" y1="490.2" x2="110.4" y2="486.2" stroke-width="1.22"/>
<line x1="252.9" y1="456.3" x2="272.5" y2="426.2" stroke-width="1.22"/>
<line x1="115.5" y1="436.5" x2="109.2" y2="437.9" stroke-width="1.22"/>
<line x1="114.5" y1="415.3" x2="125.2" y2="413.3" stroke-width="1.22"/>
<line x1="191.4" y1="435.4" x2="161.1" y2="440.2" stroke-width="1.22"/>
<line x1="163.6" y1="461.0" x2="164.6" y2="471.4" stroke-width="1.22"/>
<line x1="206.9" y1="507.0" x2="205.0" y2="507.0" stroke-width="1.22"/>
<line x1="272.5" y1="426.2" x2="272.5" y2="397.0" stroke-width="1.22"/>
<line x1="49.8" y1="389.2" x2="63.2" y2="388.3" stroke-width="1.22"/>
<line x1="31.0" y1="431.4" x2="36.3" y2="439.6" stroke-width="1.22"/>
<line x1="183.5" y1="381.8" x2="147.7" y2="387.7" stroke-width="1.22"/>
<line x1="31.0" y1="476.8" x2="40.6" y2="471.9" stroke-width="1.22"/>
<line x1="111.1" y1="447.8" x2="123.2" y2="452.9" stroke-width="1.22"/>
<line x1="92.9" y1="466.0" x2="90.9" y2="465.4" stroke-width="1.22"/>
<line x1="89.3" y1="478.0" x2="86.2" y2="482.2" stroke-width="1.22"/>
<line x1="173.1" y1="486.7" x2="186.7" y2="502.4" stroke-width="1.22"/>
<line x1="85.9" y1="427.3" x2="78.9" y2="434.1" stroke-width="1.22"/>
<line x1="63.2" y1="388.3" x2="74.0" y2="389.0" stroke-width="1.22"/>
<line x1="256.0" y1="499.8" x2="265.0" y2="507.0" stroke-width="1.22"/>
<line x1="52.5" y1="428.5" x2="62.3" y2="423.8" stroke-width="1.22"/>
<line x1="51.4" y1="415.3" x2="62.3" y2="423.8" stroke-width="1.22"/>
<line x1="100.8" y1="488.6" x2="93.6" y2="492.7" stroke-width="1.22"/>
<line x1="179.7" y1="507.0" x2="168.2" y2="502.9" stroke-width="1.22"/>
<line x1="86.3" y1="473.2" x2="87.5" y2="466.5" stroke-width="1.22"/>
<line x1="31.0" y1="386.0" x2="63.2" y2="388.3" stroke-width="1.22"/>
<line x1="49.4" y1="462.6" x2="50.6" y2="471.5" stroke-width="1.22"/>
<line x1="107.3" y1="463.8" x2="107.9" y2="460.7" stroke-width="1.22"/>
<line x1="166.1" y1="507.0" x2="179.7" y2="507.0" stroke-width="1.22"/>
<line x1="104.3" y1="475.6" x2="103.7" y2="466.6" stroke-width="1.22"/>
<line x1="63.2" y1="448.7" x2="70.8" y2="445.2" stroke-width="1.22"/>
<line x1="89.8" y1="475.2" x2="86.3" y2="473.2" stroke-width="1.22"/>
<line x1="78.9" y1="445.9" x2="86.0" y2="436.1" stroke-width="1.22"/>
<line x1="66.0" y1="416.6" x2="77.1" y2="429.0" stroke-width="1.22"/>
<line x1="135.8" y1="387.8" x2="136.1" y2="400.6" stroke-width="1.22"/>
<line x1="62.3" y1="423.8" x2="77.1" y2="429.0" stroke-width="1.22"/>
<line x1="51.5" y1="448.6" x2="60.4" y2="460.4" stroke-width="1.22"/>
<line x1="91.6" y1="459.6" x2="90.6" y2="457.9" stroke-width="1.22"/>
<line x1="193.3" y1="507.0" x2="186.7" y2="502.4" stroke-width="1.22"/>
<line x1="103.1" y1="450.3" x2="109.2" y2="442.1" stroke-width="1.22"/>
<line x1="233.2" y1="426.2" x2="252.9" y2="456.3" stroke-width="1.22"/>
<line x1="98.1" y1="507.0" x2="89.1" y2="498.9" stroke-width="1.22"/>
<line x1="100.7" y1="448.7" x2="103.1" y2="450.3" stroke-width="1.22"/>
<line x1="252.9" y1="456.3" x2="254.6" y2="470.4" stroke-width="1.22"/>
<line x1="60.4" y1="460.4" x2="75.3" y2="464.3" stroke-width="1.22"/>
<line x1="136.1" y1="426.4" x2="135.7" y2="435.2" stroke-width="1.22"/>
<line x1="60.4" y1="460.4" x2="50.6" y2="471.5" stroke-width="1.22"/>
<line x1="148.0" y1="392.4" x2="161.6" y2="388.8" stroke-width="1.22"/>
<line x1="148.0" y1="392.4" x2="136.1" y2="400.6" stroke-width="1.22"/>
<line x1="95.0" y1="473.3" x2="95.0" y2="473.8" stroke-width="1.22"/>
<line x1="96.7" y1="488.4" x2="95.5" y2="481.2" stroke-width="1.22"/>
<line x1="150.2" y1="427.5" x2="150.5" y2="435.7" stroke-width="1.22"/>
<line x1="64.8" y1="497.8" x2="76.2" y2="499.9" stroke-width="1.22"/>
<line x1="93.2" y1="455.8" x2="94.5" y2="457.4" stroke-width="1.22"/>
<line x1="86.0" y1="443.9" x2="78.9" y2="445.9" stroke-width="1.22"/>
<line x1="81.7" y1="485.4" x2="86.2" y2="482.2" stroke-width="1.22"/>
<line x1="89.4" y1="403.7" x2="87.4" y2="414.8" stroke-width="1.22"/>
<line x1="148.5" y1="464.5" x2="148.8" y2="474.3" stroke-width="1.22"/>
<line x1="103.5" y1="440.3" x2="103.1" y2="450.3" stroke-width="1.22"/>
<line x1="102.2" y1="452.2" x2="103.1" y2="450.3" stroke-width="1.22"/>
<line x1="147.7" y1="387.7" x2="135.8" y2="387.8" stroke-width="1.22"/>
<line x1="89.8" y1="475.2" x2="95.0" y2="473.8" stroke-width="1.22"/>
<line x1="78.9" y1="445.9" x2="70.8" y2="445.2" stroke-width="1.22"/>
<line x1="102.5" y1="403.0" x2="98.6" y2="415.6" stroke-width="1.22"/>
<line x1="153.3" y1="448.2" x2="163.6" y2="461.0" stroke-width="1.22"/>
<line x1="193.3" y1="507.0" x2="207.1" y2="487.9" stroke-width="1.22"/>
<line x1="136.1" y1="426.4" x2="129.7" y2="436.1" stroke-width="1.22"/>
<line x1="170.0" y1="460.0" x2="163.0" y2="450.0" stroke-width="1.22"/>
<line x1="102.0" y1="390.5" x2="112.2" y2="399.4" stroke-width="1.22"/>
<line x1="104.9" y1="483.3" x2="105.0" y2="483.4" stroke-width="1.22"/>
<line x1="90.4" y1="482.1" x2="93.2" y2="480.8" stroke-width="1.22"/>
<line x1="148.8" y1="484.2" x2="162.3" y2="500.1" stroke-width="1.22"/>
<line x1="254.6" y1="470.4" x2="260.1" y2="484.0" stroke-width="1.22"/>
<line x1="272.5" y1="507.0" x2="260.1" y2="484.0" stroke-width="1.22"/>
<line x1="36.1" y1="415.8" x2="39.3" y2="425.3" stroke-width="1.22"/>
<line x1="84.4" y1="507.0" x2="76.2" y2="499.9" stroke-width="1.22"/>
<line x1="173.1" y1="486.7" x2="168.2" y2="502.9" stroke-width="1.22"/>
<line x1="132.5" y1="440.0" x2="129.7" y2="443.9" stroke-width="1.22"/>
<line x1="86.3" y1="473.2" x2="92.6" y2="468.1" stroke-width="1.22"/>
<line x1="51.4" y1="415.3" x2="52.5" y2="428.5" stroke-width="1.22"/>
<line x1="49.4" y1="462.6" x2="60.4" y2="460.4" stroke-width="1.22"/>
<line x1="85.5" y1="486.4" x2="86.2" y2="482.2" stroke-width="1.22"/>
<line x1="103.8" y1="450.8" x2="105.3" y2="451.1" stroke-width="1.22"/>
<line x1="49.4" y1="462.6" x2="40.6" y2="471.9" stroke-width="1.22"/>
<line x1="31.0" y1="386.0" x2="49.8" y2="389.2" stroke-width="1.22"/>
<line x1="126.7" y1="476.0" x2="113.3" y2="479.6" stroke-width="1.22"/>
<line x1="77.3" y1="472.7" x2="87.5" y2="466.5" stroke-width="1.22"/>
<line x1="75.3" y1="464.3" x2="87.5" y2="466.5" stroke-width="1.22"/>
<line x1="135.8" y1="387.8" x2="148.0" y2="392.4" stroke-width="1.22"/>
<line x1="51.5" y1="448.6" x2="49.4" y2="462.6" stroke-width="1.22"/>
<line x1="105.2" y1="466.8" x2="109.3" y2="464.7" stroke-width="1.22"/>
<line x1="140.6" y1="448.4" x2="132.5" y2="440.0" stroke-width="1.22"/>
<line x1="247.8" y1="507.0" x2="261.4" y2="507.0" stroke-width="1.22"/>
<line x1="97.1" y1="465.3" x2="94.1" y2="467.5" stroke-width="1.22"/>
<line x1="128.4" y1="423.7" x2="122.6" y2="434.1" stroke-width="1.22"/>
<line x1="31.0" y1="507.0" x2="37.7" y2="499.5" stroke-width="1.22"/>
<line x1="124.9" y1="436.4" x2="122.6" y2="434.1" stroke-width="1.22"/>
<line x1="160.0" y1="420.0" x2="161.1" y2="428.5" stroke-width="1.22"/>
<line x1="136.1" y1="426.4" x2="150.2" y2="427.5" stroke-width="1.22"/>
<line x1="95.0" y1="473.8" x2="93.2" y2="480.8" stroke-width="1.22"/>
<line x1="53.3" y1="485.8" x2="51.7" y2="498.3" stroke-width="1.22"/>
<line x1="135.7" y1="435.2" x2="129.7" y2="436.1" stroke-width="1.22"/>
<line x1="150.2" y1="427.5" x2="161.1" y2="428.5" stroke-width="1.22"/>
<line x1="137.5" y1="411.2" x2="136.1" y2="426.4" stroke-width="1.22"/>
<line x1="111.7" y1="507.0" x2="103.6" y2="496.6" stroke-width="1.22"/>
<line x1="140.6" y1="448.4" x2="148.5" y2="464.5" stroke-width="1.22"/>
<line x1="31.0" y1="461.6" x2="40.5" y2="459.2" stroke-width="1.22"/>
<line x1="105.0" y1="483.4" x2="105.8" y2="485.9" stroke-width="1.22"/>
<line x1="89.3" y1="478.0" x2="90.4" y2="482.1" stroke-width="1.22"/>
<line x1="173.1" y1="486.7" x2="185.8" y2="487.0" stroke-width="1.22"/>
<line x1="96.7" y1="488.4" x2="92.6" y2="487.2" stroke-width="1.22"/>
<line x1="97.7" y1="456.0" x2="93.5" y2="451.2" stroke-width="1.22"/>
<line x1="89.4" y1="403.7" x2="102.5" y2="403.0" stroke-width="1.22"/>
<line x1="89.4" y1="403.7" x2="77.6" y2="415.7" stroke-width="1.22"/>
<line x1="148.5" y1="464.5" x2="163.6" y2="461.0" stroke-width="1.22"/>
<line x1="179.7" y1="507.0" x2="173.1" y2="486.7" stroke-width="1.22"/>
<line x1="43.6" y1="507.0" x2="51.7" y2="498.3" stroke-width="1.22"/>
<line x1="110.4" y1="486.2" x2="108.2" y2="487.7" stroke-width="1.22"/>
<line x1="99.9" y1="498.3" x2="93.6" y2="492.7" stroke-width="1.22"/>
<line x1="89.8" y1="475.2" x2="95.0" y2="473.3" stroke-width="1.22"/>
<line x1="31.0" y1="446.5" x2="31.0" y2="461.6" stroke-width="1.22"/>
<line x1="102.1" y1="463.2" x2="103.0" y2="466.3" stroke-width="1.22"/>
<line x1="31.0" y1="416.2" x2="39.3" y2="425.3" stroke-width="1.22"/>
<line x1="102.5" y1="403.0" x2="112.2" y2="399.4" stroke-width="1.22"/>
<line x1="87.7" y1="435.3" x2="103.5" y2="440.3" stroke-width="1.22"/>
<line x1="110.2" y1="485.7" x2="107.7" y2="480.5" stroke-width="1.22"/>
<line x1="98.6" y1="466.4" x2="97.8" y2="468.2" stroke-width="1.22"/>
<line x1="173.1" y1="486.7" x2="164.6" y2="471.4" stroke-width="1.22"/>
<line x1="149.5" y1="500.0" x2="162.3" y2="500.1" stroke-width="1.22"/>
<line x1="98.2" y1="457.6" x2="94.5" y2="457.4" stroke-width="1.22"/>
<line x1="31.0" y1="461.6" x2="31.0" y2="476.8" stroke-width="1.22"/>
<line x1="124.9" y1="436.4" x2="122.6" y2="445.9" stroke-width="1.22"/>
<line x1="95.0" y1="473.8" x2="98.4" y2="472.8" stroke-width="1.22"/>
<line x1="108.2" y1="487.7" x2="105.6" y2="492.8" stroke-width="1.22"/>
<line x1="138.9" y1="507.0" x2="149.5" y2="500.0" stroke-width="1.22"/>
<line x1="148.8" y1="484.2" x2="149.5" y2="500.0" stroke-width="1.22"/>
<line x1="92.2" y1="497.0" x2="89.6" y2="495.5" stroke-width="1.22"/>
<line x1="96.7" y1="488.4" x2="94.5" y2="482.4" stroke-width="1.22"/>
<line x1="51.7" y1="498.3" x2="64.8" y2="497.8" stroke-width="1.22"/>
<line x1="94.1" y1="467.5" x2="93.9" y2="468.5" stroke-width="1.22"/>
<line x1="75.6" y1="487.4" x2="81.9" y2="487.8" stroke-width="1.22"/>
<line x1="36.1" y1="415.8" x2="51.4" y2="415.3" stroke-width="1.22"/>
<line x1="40.0" y1="402.7" x2="51.4" y2="415.3" stroke-width="1.22"/>
<line x1="207.0" y1="406.6" x2="230.6" y2="398.8" stroke-width="1.22"/>
<line x1="30.0" y1="507.0" x2="31.0" y2="507.0" stroke-width="1.22"/>
<line x1="51.4" y1="415.3" x2="66.0" y2="416.6" stroke-width="1.22"/>
<line x1="102.2" y1="452.2" x2="106.3" y2="457.3" stroke-width="1.22"/>
<line x1="100.6" y1="479.5" x2="107.7" y2="480.5" stroke-width="1.22"/>
<line x1="230.6" y1="398.8" x2="233.2" y2="426.2" stroke-width="1.22"/>
<line x1="136.0" y1="463.5" x2="148.5" y2="464.5" stroke-width="1.22"/>
<line x1="115.1" y1="463.1" x2="109.3" y2="464.7" stroke-width="1.22"/>
<line x1="86.2" y1="482.2" x2="84.0" y2="476.5" stroke-width="1.22"/>
<line x1="136.0" y1="463.5" x2="126.7" y2="476.0" stroke-width="1.22"/>
<line x1="114.5" y1="434.8" x2="122.6" y2="434.1" stroke-width="1.22"/>
<line x1="51.5" y1="448.6" x2="63.2" y2="448.7" stroke-width="1.22"/>
<line x1="88.2" y1="449.4" x2="86.0" y2="443.9" stroke-width="1.22"/>
<line x1="51.5" y1="448.6" x2="40.5" y2="459.2" stroke-width="1.22"/>
<line x1="112.4" y1="499.5" x2="115.1" y2="490.3" stroke-width="1.22"/>
<line x1="91.1" y1="465.0" x2="90.9" y2="465.4" stroke-width="1.22"/>
<line x1="104.9" y1="483.3" x2="102.9" y2="483.0" stroke-width="1.22"/>
<line x1="190.0" y1="471.8" x2="207.1" y2="487.9" stroke-width="1.22"/>
<line x1="97.1" y1="465.3" x2="97.8" y2="468.2" stroke-width="1.22"/>
<line x1="139.5" y1="498.0" x2="149.5" y2="500.0" stroke-width="1.22"/>
<line x1="125.6" y1="403.5" x2="137.5" y2="411.2" stroke-width="1.22"/>
<line x1="94.5" y1="457.4" x2="90.6" y2="457.9" stroke-width="1.22"/>
<line x1="104.9" y1="483.3" x2="107.7" y2="480.5" stroke-width="1.22"/>
<line x1="31.0" y1="446.5" x2="37.9" y2="448.1" stroke-width="1.22"/>
<line x1="53.3" y1="485.8" x2="62.5" y2="487.3" stroke-width="1.22"/>
<line x1="220.6" y1="507.0" x2="225.0" y2="507.0" stroke-width="1.22"/>
<line x1="30.0" y1="507.0" x2="37.7" y2="499.5" stroke-width="1.22"/>
<line x1="98.1" y1="507.0" x2="111.7" y2="507.0" stroke-width="1.22"/>
<line x1="102.9" y1="483.0" x2="105.0" y2="483.4" stroke-width="1.22"/>
<line x1="106.6" y1="474.6" x2="108.4" y2="472.0" stroke-width="1.22"/>
<line x1="137.5" y1="411.2" x2="152.6" y2="414.3" stroke-width="1.22"/>
<line x1="74.0" y1="389.0" x2="76.8" y2="399.6" stroke-width="1.22"/>
<line x1="113.3" y1="479.6" x2="113.3" y2="479.1" stroke-width="1.22"/>
<line x1="140.6" y1="448.4" x2="136.0" y2="463.5" stroke-width="1.22"/>
<line x1="89.6" y1="495.5" x2="86.5" y2="488.7" stroke-width="1.22"/>
<line x1="105.6" y1="492.8" x2="103.6" y2="496.6" stroke-width="1.22"/>
<line x1="87.7" y1="387.5" x2="111.8" y2="387.5" stroke-width="1.22"/>
<line x1="81.7" y1="485.4" x2="81.9" y2="487.8" stroke-width="1.22"/>
<line x1="87.7" y1="435.3" x2="88.8" y2="440.0" stroke-width="1.22"/>
<line x1="103.5" y1="440.3" x2="98.3" y2="444.9" stroke-width="1.22"/>
<line x1="100.6" y1="479.5" x2="95.5" y2="481.2" stroke-width="1.22"/>
<line x1="87.7" y1="387.5" x2="89.4" y2="403.7" stroke-width="1.22"/>
<line x1="89.6" y1="464.0" x2="90.9" y2="465.4" stroke-width="1.22"/>
<line x1="126.7" y1="476.0" x2="135.4" y2="486.6" stroke-width="1.22"/>
<line x1="74.4" y1="439.3" x2="65.5" y2="442.1" stroke-width="1.22"/>
<line x1="135.4" y1="486.6" x2="139.5" y2="498.0" stroke-width="1.22"/>
<line x1="191.4" y1="435.4" x2="204.5" y2="472.2" stroke-width="1.22"/>
<line x1="207.1" y1="487.9" x2="221.0" y2="501.7" stroke-width="1.22"/>
<line x1="112.6" y1="473.5" x2="111.3" y2="475.3" stroke-width="1.22"/>
<line x1="126.3" y1="486.3" x2="113.3" y2="479.6" stroke-width="1.22"/>
<line x1="85.9" y1="427.3" x2="87.7" y2="435.3" stroke-width="1.22"/>
<line x1="137.0" y1="475.0" x2="148.8" y2="484.2" stroke-width="1.22"/>
<line x1="125.3" y1="507.0" x2="124.8" y2="497.8" stroke-width="1.22"/>
<line x1="37.9" y1="448.1" x2="51.5" y2="448.6" stroke-width="1.22"/>
<line x1="221.5" y1="453.7" x2="225.4" y2="467.8" stroke-width="1.22"/>
<line x1="124.9" y1="436.4" x2="129.7" y2="443.9" stroke-width="1.22"/>
<line x1="94.8" y1="458.8" x2="95.0" y2="458.8" stroke-width="1.22"/>
<line x1="92.2" y1="497.0" x2="93.6" y2="492.7" stroke-width="1.22"/>
<line x1="220.6" y1="507.0" x2="221.0" y2="501.7" stroke-width="1.22"/>
<line x1="94.8" y1="458.8" x2="93.9" y2="462.6" stroke-width="1.22"/>
<line x1="125.2" y1="413.3" x2="128.4" y2="423.7" stroke-width="1.22"/>
<line x1="102.9" y1="483.0" x2="105.8" y2="485.9" stroke-width="1.22"/>
<line x1="86.5" y1="488.7" x2="92.6" y2="487.2" stroke-width="1.22"/>
<line x1="129.7" y1="443.9" x2="129.7" y2="436.1" stroke-width="1.22"/>
<line x1="275.0" y1="507.0" x2="272.5" y2="507.0" stroke-width="1.22"/>
<line x1="40.0" y1="402.7" x2="36.1" y2="415.8" stroke-width="1.22"/>
<line x1="183.5" y1="381.8" x2="165.4" y2="399.8" stroke-width="1.22"/>
<line x1="123.2" y1="452.9" x2="126.9" y2="460.8" stroke-width="1.22"/>
<line x1="81.9" y1="487.8" x2="86.5" y2="488.7" stroke-width="1.22"/>
<line x1="93.6" y1="492.7" x2="86.5" y2="488.7" stroke-width="1.22"/>
<line x1="30.0" y1="507.0" x2="31.0" y2="491.9" stroke-width="1.22"/>
<line x1="36.3" y1="439.6" x2="37.9" y2="448.1" stroke-width="1.22"/>
<line x1="93.6" y1="492.7" x2="92.6" y2="487.2" stroke-width="1.22"/>
<line x1="97.1" y1="465.3" x2="98.6" y2="466.4" stroke-width="1.22"/>
<line x1="84.4" y1="507.0" x2="98.1" y2="507.0" stroke-width="1.22"/>
<line x1="170.5" y1="467.7" x2="173.1" y2="486.7" stroke-width="1.22"/>
<line x1="40.6" y1="471.9" x2="39.4" y2="483.1" stroke-width="1.22"/>
<line x1="90.4" y1="482.1" x2="88.6" y2="481.8" stroke-width="1.22"/>
<line x1="91.1" y1="465.0" x2="93.9" y2="462.6" stroke-width="1.22"/>
<line x1="190.0" y1="471.8" x2="185.8" y2="487.0" stroke-width="1.22"/>
<line x1="125.6" y1="403.5" x2="125.2" y2="413.3" stroke-width="1.22"/>
<line x1="123.2" y1="452.9" x2="122.6" y2="445.9" stroke-width="1.22"/>
<line x1="96.7" y1="488.4" x2="93.6" y2="492.7" stroke-width="1.22"/>
<line x1="74.0" y1="389.0" x2="87.7" y2="387.5" stroke-width="1.22"/>
<line x1="74.0" y1="389.0" x2="65.3" y2="401.3" stroke-width="1.22"/>
<line x1="140.6" y1="448.4" x2="153.3" y2="448.2" stroke-width="1.22"/>
<line x1="108.3" y1="470.4" x2="108.4" y2="472.0" stroke-width="1.22"/>
<line x1="97.7" y1="456.0" x2="94.5" y2="457.4" stroke-width="1.22"/>
<line x1="89.1" y1="498.9" x2="92.2" y2="497.0" stroke-width="1.22"/>
<line x1="89.6" y1="495.5" x2="82.9" y2="492.5" stroke-width="1.22"/>
<line x1="106.7" y1="487.9" x2="105.6" y2="492.8" stroke-width="1.22"/>
<line x1="77.6" y1="415.7" x2="85.9" y2="427.3" stroke-width="1.22"/>
<line x1="89.6" y1="464.0" x2="93.9" y2="462.6" stroke-width="1.22"/>
<line x1="135.4" y1="486.6" x2="148.8" y2="484.2" stroke-width="1.22"/>
<line x1="126.7" y1="476.0" x2="126.3" y2="486.3" stroke-width="1.22"/>
<line x1="102.1" y1="463.2" x2="106.3" y2="457.3" stroke-width="1.22"/>
<line x1="112.4" y1="499.5" x2="111.7" y2="490.2" stroke-width="1.22"/>
<line x1="111.3" y1="475.3" x2="107.7" y2="480.5" stroke-width="1.22"/>
<line x1="74.4" y1="439.3" x2="70.8" y2="445.2" stroke-width="1.22"/>
<line x1="191.4" y1="435.4" x2="190.0" y2="471.8" stroke-width="1.22"/>
<line x1="170.5" y1="467.7" x2="190.0" y2="471.8" stroke-width="1.22"/>
<line x1="207.1" y1="487.9" x2="209.6" y2="501.3" stroke-width="1.22"/>
<line x1="166.1" y1="507.0" x2="160.0" y2="507.0" stroke-width="1.22"/>
<line x1="165.0" y1="395.0" x2="165.4" y2="399.8" stroke-width="1.22"/>
<line x1="98.3" y1="444.9" x2="96.9" y2="445.1" stroke-width="1.22"/>
<line x1="88.2" y1="449.4" x2="93.5" y2="451.2" stroke-width="1.22"/>
<line x1="112.6" y1="473.5" x2="109.3" y2="464.7" stroke-width="1.22"/>
<line x1="125.3" y1="507.0" x2="112.4" y2="499.5" stroke-width="1.22"/>
<line x1="112.4" y1="499.5" x2="105.6" y2="492.8" stroke-width="1.22"/>
<line x1="39.4" y1="483.1" x2="53.3" y2="485.8" stroke-width="1.22"/>
<line x1="111.7" y1="490.2" x2="115.1" y2="490.3" stroke-width="1.22"/>
<line x1="98.4" y1="472.8" x2="97.8" y2="468.2" stroke-width="1.22"/>
<line x1="97.8" y1="468.2" x2="94.1" y2="467.5" stroke-width="1.22"/>
<line x1="125.2" y1="413.3" x2="137.5" y2="411.2" stroke-width="1.22"/>
<line x1="88.6" y1="481.8" x2="86.2" y2="482.2" stroke-width="1.22"/>
<line x1="102.9" y1="483.0" x2="107.7" y2="480.5" stroke-width="1.22"/>
<line x1="106.6" y1="474.6" x2="107.4" y2="471.8" stroke-width="1.22"/>
<line x1="102.2" y1="452.2" x2="103.8" y2="450.8" stroke-width="1.22"/>
<line x1="75.6" y1="450.8" x2="88.8" y2="458.8" stroke-width="1.22"/>
<line x1="93.6" y1="492.7" x2="89.6" y2="495.5" stroke-width="1.22"/>
<line x1="107.4" y1="471.8" x2="108.4" y2="472.0" stroke-width="1.22"/>
<line x1="97.7" y1="456.0" x2="93.2" y2="455.8" stroke-width="1.22"/>
<line x1="123.2" y1="452.9" x2="140.6" y2="448.4" stroke-width="1.22"/>
<line x1="62.3" y1="423.8" x2="70.8" y2="434.8" stroke-width="1.22"/>
<line x1="77.3" y1="472.7" x2="81.7" y2="485.4" stroke-width="1.22"/>
<line x1="88.8" y1="440.0" x2="86.0" y2="436.1" stroke-width="1.22"/>
<line x1="102.2" y1="452.2" x2="97.7" y2="450.3" stroke-width="1.22"/>
<line x1="123.2" y1="452.9" x2="115.1" y2="463.1" stroke-width="1.22"/>
<line x1="70.8" y1="445.2" x2="65.5" y2="442.1" stroke-width="1.22"/>
<line x1="93.2" y1="455.8" x2="90.6" y2="457.9" stroke-width="1.22"/>
<line x1="39.3" y1="425.3" x2="47.9" y2="437.8" stroke-width="1.22"/>
<line x1="36.3" y1="439.6" x2="47.9" y2="437.8" stroke-width="1.22"/>
<line x1="88.2" y1="449.4" x2="95.3" y2="446.3" stroke-width="1.22"/>
<line x1="94.5" y1="482.4" x2="90.4" y2="482.1" stroke-width="1.22"/>
<line x1="77.1" y1="429.0" x2="78.9" y2="434.1" stroke-width="1.22"/>
<line x1="191.4" y1="435.4" x2="170.0" y2="460.0" stroke-width="1.22"/>
<line x1="102.1" y1="463.2" x2="107.9" y2="460.7" stroke-width="1.22"/>
<line x1="126.3" y1="486.3" x2="135.4" y2="486.6" stroke-width="1.22"/>
<line x1="74.4" y1="439.3" x2="78.9" y2="434.1" stroke-width="1.22"/>
<line x1="100.8" y1="488.6" x2="105.8" y2="485.9" stroke-width="1.22"/>
<line x1="166.1" y1="507.0" x2="168.2" y2="502.9" stroke-width="1.22"/>
<line x1="185.8" y1="487.0" x2="186.7" y2="502.4" stroke-width="1.22"/>
<line x1="40.6" y1="471.9" x2="50.6" y2="471.5" stroke-width="1.22"/>
<line x1="77.1" y1="429.0" x2="85.9" y2="427.3" stroke-width="1.22"/>
<line x1="89.7" y1="484.1" x2="86.5" y2="488.7" stroke-width="1.22"/>
<line x1="206.9" y1="507.0" x2="209.6" y2="501.3" stroke-width="1.22"/>
<line x1="125.6" y1="403.5" x2="136.1" y2="400.6" stroke-width="1.22"/>
<line x1="89.7" y1="484.1" x2="92.6" y2="487.2" stroke-width="1.22"/>
<line x1="31.0" y1="446.5" x2="36.3" y2="439.6" stroke-width="1.22"/>
<line x1="123.2" y1="452.9" x2="129.7" y2="443.9" stroke-width="1.22"/>
<line x1="170.5" y1="467.7" x2="163.6" y2="461.0" stroke-width="1.22"/>
<line x1="102.9" y1="483.0" x2="95.5" y2="481.2" stroke-width="1.22"/>
<line x1="75.3" y1="464.3" x2="65.8" y2="474.5" stroke-width="1.22"/>
<line x1="129.7" y1="443.9" x2="122.6" y2="445.9" stroke-width="1.22"/>
<line x1="106.6" y1="474.6" x2="107.7" y2="480.5" stroke-width="1.22"/>
<line x1="103.7" y1="466.6" x2="107.4" y2="471.8" stroke-width="1.22"/>
<line x1="115.1" y1="463.1" x2="126.7" y2="476.0" stroke-width="1.22"/>
<line x1="75.6" y1="450.8" x2="70.8" y2="445.2" stroke-width="1.22"/>
<line x1="102.1" y1="463.2" x2="98.6" y2="466.4" stroke-width="1.22"/>
<line x1="89.3" y1="478.0" x2="84.0" y2="476.5" stroke-width="1.22"/>
<line x1="76.2" y1="499.9" x2="89.1" y2="498.9" stroke-width="1.22"/>
<line x1="65.3" y1="401.3" x2="77.6" y2="415.7" stroke-width="1.22"/>
<line x1="100.8" y1="488.6" x2="106.7" y2="487.9" stroke-width="1.22"/>
<line x1="77.6" y1="415.7" x2="77.1" y2="429.0" stroke-width="1.22"/>
<line x1="126.7" y1="476.0" x2="137.0" y2="475.0" stroke-width="1.22"/>
<line x1="74.4" y1="439.3" x2="78.9" y2="445.9" stroke-width="1.22"/>
<line x1="98.3" y1="444.9" x2="100.7" y2="448.7" stroke-width="1.22"/>
<line x1="161.1" y1="428.5" x2="150.5" y2="435.7" stroke-width="1.22"/>
<line x1="75.3" y1="464.3" x2="88.8" y2="458.8" stroke-width="1.22"/>
<line x1="89.7" y1="484.1" x2="94.5" y2="482.4" stroke-width="1.22"/>
<line x1="165.0" y1="395.0" x2="150.7" y2="403.5" stroke-width="1.22"/>
<line x1="185.8" y1="487.0" x2="207.1" y2="487.9" stroke-width="1.22"/>
<line x1="75.6" y1="450.8" x2="75.3" y2="464.3" stroke-width="1.22"/>
<line x1="111.1" y1="447.8" x2="109.2" y2="442.1" stroke-width="1.22"/>
<line x1="115.5" y1="436.5" x2="109.2" y2="442.1" stroke-width="1.22"/>
<line x1="112.2" y1="399.4" x2="114.5" y2="415.3" stroke-width="1.22"/>
<line x1="95.0" y1="458.8" x2="93.9" y2="462.6" stroke-width="1.22"/>
<line x1="75.6" y1="487.4" x2="76.2" y2="499.9" stroke-width="1.22"/>
<line x1="92.9" y1="466.0" x2="93.9" y2="462.6" stroke-width="1.22"/>
<line x1="162.3" y1="414.3" x2="161.1" y2="428.5" stroke-width="1.22"/>
<line x1="57.2" y1="507.0" x2="64.8" y2="497.8" stroke-width="1.22"/>
<line x1="108.3" y1="470.4" x2="107.4" y2="471.8" stroke-width="1.22"/>
<line x1="62.3" y1="423.8" x2="65.5" y2="437.9" stroke-width="1.22"/>
<line x1="101.4" y1="476.7" x2="99.4" y2="474.7" stroke-width="1.22"/>
<line x1="81.7" y1="485.4" x2="84.0" y2="476.5" stroke-width="1.22"/>
<line x1="95.0" y1="473.3" x2="93.9" y2="468.5" stroke-width="1.22"/>
<line x1="100.8" y1="488.6" x2="102.9" y2="483.0" stroke-width="1.22"/>
<line x1="163.0" y1="450.0" x2="163.6" y2="461.0" stroke-width="1.22"/>
<line x1="112.6" y1="473.5" x2="108.3" y2="470.4" stroke-width="1.22"/>
<line x1="78.9" y1="445.9" x2="78.9" y2="434.1" stroke-width="1.22"/>
<line x1="66.0" y1="416.6" x2="62.3" y2="423.8" stroke-width="1.22"/>
<line x1="31.0" y1="476.8" x2="31.0" y2="491.9" stroke-width="1.22"/>
<line x1="107.7" y1="480.5" x2="113.3" y2="479.1" stroke-width="1.22"/>
<line x1="233.2" y1="426.2" x2="221.5" y2="453.7" stroke-width="1.22"/>
<line x1="111.8" y1="387.5" x2="112.2" y2="399.4" stroke-width="1.22"/>
<line x1="31.0" y1="401.1" x2="40.0" y2="402.7" stroke-width="1.22"/>
<line x1="152.5" y1="507.0" x2="162.3" y2="500.1" stroke-width="1.22"/>
<line x1="165.3" y1="484.2" x2="162.3" y2="500.1" stroke-width="1.22"/>
<line x1="252.9" y1="456.3" x2="242.1" y2="472.3" stroke-width="1.22"/>
<line x1="63.2" y1="448.7" x2="60.4" y2="460.4" stroke-width="1.22"/>
<line x1="111.7" y1="490.2" x2="105.6" y2="492.8" stroke-width="1.22"/>
<line x1="113.3" y1="479.6" x2="110.4" y2="486.2" stroke-width="1.22"/>
<line x1="106.6" y1="474.6" x2="111.3" y2="475.3" stroke-width="1.22"/>
<line x1="150.2" y1="427.5" x2="135.7" y2="435.2" stroke-width="1.22"/>
<line x1="87.5" y1="466.5" x2="88.8" y2="458.8" stroke-width="1.22"/>
<line x1="62.5" y1="487.3" x2="64.8" y2="497.8" stroke-width="1.22"/>
<line x1="92.6" y1="468.1" x2="93.9" y2="468.5" stroke-width="1.22"/>
<line x1="115.1" y1="463.1" x2="112.6" y2="473.5" stroke-width="1.22"/>
<line x1="97.7" y1="450.3" x2="98.3" y2="444.9" stroke-width="1.22"/>
<line x1="251.5" y1="394.8" x2="272.5" y2="397.0" stroke-width="1.22"/>
<line x1="152.6" y1="414.3" x2="150.2" y2="427.5" stroke-width="1.22"/>
<line x1="89.3" y1="478.0" x2="93.2" y2="480.8" stroke-width="1.22"/>
<line x1="148.5" y1="464.5" x2="137.0" y2="475.0" stroke-width="1.22"/>
<line x1="89.6" y1="464.0" x2="87.5" y2="466.5" stroke-width="1.22"/>
<line x1="65.3" y1="401.3" x2="66.0" y2="416.6" stroke-width="1.22"/>
<line x1="99.4" y1="474.7" x2="98.4" y2="472.8" stroke-width="1.22"/>
<line x1="153.3" y1="448.2" x2="148.5" y2="464.5" stroke-width="1.22"/>
<line x1="104.3" y1="475.6" x2="107.4" y2="471.8" stroke-width="1.22"/>
<line x1="95.3" y1="446.3" x2="86.0" y2="443.9" stroke-width="1.22"/>
<line x1="165.0" y1="395.0" x2="161.6" y2="388.8" stroke-width="1.22"/>
<line x1="65.8" y1="474.5" x2="75.6" y2="487.4" stroke-width="1.22"/>
<line x1="112.2" y1="399.4" x2="125.6" y2="403.5" stroke-width="1.22"/>
<line x1="102.0" y1="390.5" x2="102.5" y2="403.0" stroke-width="1.22"/>
<line x1="115.5" y1="436.5" x2="114.5" y2="445.2" stroke-width="1.22"/>
<line x1="111.1" y1="447.8" x2="114.5" y2="445.2" stroke-width="1.22"/>
<line x1="89.8" y1="475.2" x2="93.2" y2="480.8" stroke-width="1.22"/>
<line x1="191.4" y1="435.4" x2="161.1" y2="428.5" stroke-width="1.22"/>
<line x1="94.8" y1="458.8" x2="94.5" y2="457.4" stroke-width="1.22"/>
<line x1="150.7" y1="403.5" x2="162.3" y2="414.3" stroke-width="1.22"/>
<line x1="31.0" y1="431.4" x2="39.3" y2="425.3" stroke-width="1.22"/>
<line x1="115.5" y1="436.5" x2="124.9" y2="436.4" stroke-width="1.22"/>
<line x1="95.5" y1="481.2" x2="93.2" y2="480.8" stroke-width="1.22"/>
<line x1="60.2" y1="436.9" x2="65.5" y2="437.9" stroke-width="1.22"/>
<line x1="209.6" y1="501.3" x2="221.0" y2="501.7" stroke-width="1.22"/>
<line x1="95.0" y1="473.3" x2="98.4" y2="472.8" stroke-width="1.22"/>
<line x1="100.8" y1="488.6" x2="96.7" y2="488.4" stroke-width="1.22"/>
<line x1="51.4" y1="415.3" x2="39.3" y2="425.3" stroke-width="1.22"/>
<line x1="112.6" y1="473.5" x2="126.7" y2="476.0" stroke-width="1.22"/>
<line x1="31.0" y1="386.0" x2="39.0" y2="392.0" stroke-width="1.22"/>
<line x1="104.3" y1="475.6" x2="99.4" y2="474.7" stroke-width="1.22"/>
<line x1="148.8" y1="474.3" x2="165.3" y2="484.2" stroke-width="1.22"/>
<line x1="66.0" y1="416.6" x2="77.6" y2="415.7" stroke-width="1.22"/>
<line x1="102.5" y1="428.5" x2="114.5" y2="434.8" stroke-width="1.22"/>
<line x1="241.8" y1="488.2" x2="256.0" y2="499.8" stroke-width="1.22"/>
<line x1="91.6" y1="459.6" x2="93.9" y2="462.6" stroke-width="1.22"/>
<line x1="104.3" y1="475.6" x2="107.7" y2="480.5" stroke-width="1.22"/>
<line x1="98.6" y1="415.6" x2="110.7" y2="423.6" stroke-width="1.22"/>
<line x1="98.2" y1="457.6" x2="106.3" y2="457.3" stroke-width="1.22"/>
<line x1="43.6" y1="507.0" x2="31.0" y2="507.0" stroke-width="1.22"/>
<line x1="89.7" y1="484.1" x2="88.6" y2="481.8" stroke-width="1.22"/>
<line x1="99.9" y1="498.3" x2="103.6" y2="496.6" stroke-width="1.22"/>
<line x1="122.6" y1="434.1" x2="129.7" y2="436.1" stroke-width="1.22"/>
<line x1="160.0" y1="420.0" x2="150.2" y2="427.5" stroke-width="1.22"/>
<line x1="152.5" y1="507.0" x2="149.5" y2="500.0" stroke-width="1.22"/>
<line x1="173.1" y1="486.7" x2="162.3" y2="500.1" stroke-width="1.22"/>
<line x1="63.2" y1="448.7" x2="75.6" y2="450.8" stroke-width="1.22"/>
<line x1="94.8" y1="458.8" x2="91.6" y2="459.6" stroke-width="1.22"/>
<line x1="252.9" y1="456.3" x2="225.4" y2="467.8" stroke-width="1.22"/>
<line x1="204.5" y1="472.2" x2="225.4" y2="485.0" stroke-width="1.22"/>
<line x1="191.4" y1="435.4" x2="163.0" y2="450.0" stroke-width="1.22"/>
<line x1="247.8" y1="507.0" x2="256.0" y2="499.8" stroke-width="1.22"/>
<line x1="186.7" y1="502.4" x2="185.0" y2="507.0" stroke-width="1.22"/>
<line x1="92.6" y1="468.1" x2="87.5" y2="466.5" stroke-width="1.22"/>
<line x1="137.5" y1="411.2" x2="128.4" y2="423.7" stroke-width="1.22"/>
<line x1="62.5" y1="487.3" x2="75.6" y2="487.4" stroke-width="1.22"/>
<line x1="234.2" y1="507.0" x2="245.0" y2="507.0" stroke-width="1.22"/>
<line x1="49.8" y1="389.2" x2="65.3" y2="401.3" stroke-width="1.22"/>
<line x1="111.7" y1="507.0" x2="125.3" y2="507.0" stroke-width="1.22"/>
<line x1="62.5" y1="487.3" x2="51.7" y2="498.3" stroke-width="1.22"/>
<line x1="115.1" y1="463.1" x2="126.9" y2="460.8" stroke-width="1.22"/>
<line x1="209.6" y1="501.3" x2="205.0" y2="507.0" stroke-width="1.22"/>
<line x1="152.6" y1="414.3" x2="162.3" y2="414.3" stroke-width="1.22"/>
<line x1="152.6" y1="414.3" x2="136.1" y2="426.4" stroke-width="1.22"/>
<line x1="43.6" y1="507.0" x2="37.7" y2="499.5" stroke-width="1.22"/>
<line x1="101.4" y1="476.7" x2="104.3" y2="475.6" stroke-width="1.22"/>
<line x1="52.5" y1="428.5" x2="60.2" y2="436.9" stroke-width="1.22"/>
<line x1="102.2" y1="452.2" x2="105.3" y2="451.1" stroke-width="1.22"/>
<line x1="96.1" y1="479.7" x2="95.0" y2="473.8" stroke-width="1.22"/>
<line x1="112.4" y1="499.5" x2="124.8" y2="497.8" stroke-width="1.22"/>
<line x1="96.1" y1="479.7" x2="99.4" y2="474.7" stroke-width="1.22"/>
<line x1="153.3" y1="448.2" x2="163.0" y2="450.0" stroke-width="1.22"/>
<line x1="95.3" y1="446.3" x2="96.9" y2="445.1" stroke-width="1.22"/>
<line x1="95.3" y1="446.3" x2="88.8" y2="440.0" stroke-width="1.22"/>
<line x1="225.4" y1="485.0" x2="241.3" y2="499.6" stroke-width="1.22"/>
<line x1="102.0" y1="390.5" x2="111.8" y2="387.5" stroke-width="1.22"/>
<line x1="65.8" y1="474.5" x2="62.5" y2="487.3" stroke-width="1.22"/>
<line x1="102.0" y1="390.5" x2="89.4" y2="403.7" stroke-width="1.22"/>
<line x1="102.5" y1="428.5" x2="103.5" y2="440.3" stroke-width="1.22"/>
<line x1="148.8" y1="484.2" x2="165.3" y2="484.2" stroke-width="1.22"/>
<line x1="138.9" y1="507.0" x2="139.5" y2="498.0" stroke-width="1.22"/>
<line x1="148.8" y1="484.2" x2="139.5" y2="498.0" stroke-width="1.22"/>
<line x1="183.5" y1="381.8" x2="207.0" y2="406.6" stroke-width="1.22"/>
<line x1="234.2" y1="507.0" x2="241.3" y2="499.6" stroke-width="1.22"/>
<line x1="97.1" y1="459.7" x2="95.0" y2="458.8" stroke-width="1.22"/>
<line x1="90.6" y1="457.9" x2="88.8" y2="458.8" stroke-width="1.22"/>
<line x1="150.5" y1="435.7" x2="153.3" y2="448.2" stroke-width="1.22"/>
<line x1="75.6" y1="487.4" x2="82.9" y2="492.5" stroke-width="1.22"/>
<line x1="95.0" y1="473.3" x2="92.6" y2="468.1" stroke-width="1.22"/>
<line x1="48.6" y1="401.6" x2="51.4" y2="415.3" stroke-width="1.22"/>
<line x1="85.5" y1="486.4" x2="81.9" y2="487.8" stroke-width="1.22"/>
<line x1="107.3" y1="463.8" x2="105.2" y2="466.8" stroke-width="1.22"/>
<line x1="97.7" y1="450.3" x2="97.7" y2="456.0" stroke-width="1.22"/>
<line x1="132.5" y1="440.0" x2="129.7" y2="436.1" stroke-width="1.22"/>
<line x1="107.3" y1="463.8" x2="109.3" y2="464.7" stroke-width="1.22"/>
<line x1="104.3" y1="475.6" x2="106.6" y2="474.6" stroke-width="1.22"/>
<line x1="85.5" y1="486.4" x2="86.5" y2="488.7" stroke-width="1.22"/>
<line x1="179.7" y1="507.0" x2="185.0" y2="507.0" stroke-width="1.22"/>
<line x1="148.8" y1="474.3" x2="148.8" y2="484.2" stroke-width="1.22"/>
<line x1="110.4" y1="486.2" x2="115.1" y2="490.3" stroke-width="1.22"/>
<line x1="111.1" y1="447.8" x2="106.3" y2="457.3" stroke-width="1.22"/>
<line x1="115.1" y1="463.1" x2="106.3" y2="457.3" stroke-width="1.22"/>
<line x1="47.9" y1="437.8" x2="51.5" y2="448.6" stroke-width="1.22"/>
<line x1="95.3" y1="446.3" x2="93.5" y2="451.2" stroke-width="1.22"/>
<line x1="103.5" y1="440.3" x2="109.2" y2="437.9" stroke-width="1.22"/>
<line x1="89.8" y1="475.2" x2="92.6" y2="468.1" stroke-width="1.22"/>
<line x1="98.6" y1="415.6" x2="102.5" y2="428.5" stroke-width="1.22"/>
<line x1="105.2" y1="466.8" x2="107.4" y2="471.8" stroke-width="1.22"/>
<line x1="160.0" y1="420.0" x2="162.3" y2="414.3" stroke-width="1.22"/>
<line x1="97.1" y1="465.3" x2="93.9" y2="462.6" stroke-width="1.22"/>
<line x1="98.2" y1="457.6" x2="95.0" y2="458.8" stroke-width="1.22"/>
<line x1="50.6" y1="471.5" x2="53.3" y2="485.8" stroke-width="1.22"/>
<line x1="108.2" y1="487.7" x2="105.8" y2="485.9" stroke-width="1.22"/>
<line x1="124.8" y1="497.8" x2="115.1" y2="490.3" stroke-width="1.22"/>
<line x1="126.3" y1="486.3" x2="115.1" y2="490.3" stroke-width="1.22"/>
<line x1="204.5" y1="472.2" x2="207.1" y2="487.9" stroke-width="1.22"/>
<line x1="65.5" y1="437.9" x2="70.8" y2="434.8" stroke-width="1.22"/>
<line x1="97.1" y1="459.7" x2="98.2" y2="457.6" stroke-width="1.22"/>
<line x1="136.1" y1="400.6" x2="137.5" y2="411.2" stroke-width="1.22"/>
<line x1="31.0" y1="461.6" x2="37.9" y2="448.1" stroke-width="1.22"/>
<line x1="272.5" y1="507.0" x2="265.0" y2="507.0" stroke-width="1.22"/>
<line x1="234.2" y1="507.0" x2="225.0" y2="507.0" stroke-width="1.22"/>
<line x1="49.8" y1="389.2" x2="48.6" y2="401.6" stroke-width="1.22"/>
<line x1="140.6" y1="448.4" x2="126.9" y2="460.8" stroke-width="1.22"/>
<line x1="107.3" y1="463.8" x2="103.7" y2="466.6" stroke-width="1.22"/>
<line x1="87.7" y1="387.5" x2="102.0" y2="390.5" stroke-width="1.22"/>
<line x1="100.8" y1="488.6" x2="99.9" y2="498.3" stroke-width="1.22"/>
<line x1="102.2" y1="452.2" x2="98.2" y2="457.6" stroke-width="1.22"/>
<line x1="87.7" y1="387.5" x2="76.8" y2="399.6" stroke-width="1.22"/>
<line x1="77.3" y1="472.7" x2="86.3" y2="473.2" stroke-width="1.22"/>
<line x1="135.7" y1="435.2" x2="140.6" y2="448.4" stroke-width="1.22"/>
<line x1="85.9" y1="427.3" x2="86.0" y2="436.1" stroke-width="1.22"/>
<line x1="87.7" y1="435.3" x2="86.0" y2="436.1" stroke-width="1.22"/>
<line x1="86.0" y1="443.9" x2="86.0" y2="436.1" stroke-width="1.22"/>
<line x1="135.4" y1="486.6" x2="124.8" y2="497.8" stroke-width="1.22"/>
<line x1="52.5" y1="428.5" x2="47.9" y2="437.8" stroke-width="1.22"/>
<line x1="179.7" y1="507.0" x2="186.7" y2="502.4" stroke-width="1.22"/>
<line x1="103.5" y1="440.3" x2="96.9" y2="445.1" stroke-width="1.22"/>
<line x1="103.8" y1="450.8" x2="103.1" y2="450.3" stroke-width="1.22"/>
<line x1="31.0" y1="416.2" x2="36.1" y2="415.8" stroke-width="1.22"/>
<line x1="103.5" y1="440.3" x2="88.8" y2="440.0" stroke-width="1.22"/>
<line x1="85.9" y1="427.3" x2="102.5" y2="428.5" stroke-width="1.22"/>
<line x1="94.5" y1="482.4" x2="95.5" y2="481.2" stroke-width="1.22"/>
<line x1="115.1" y1="463.1" x2="107.9" y2="460.7" stroke-width="1.22"/>
<line x1="76.2" y1="499.9" x2="82.9" y2="492.5" stroke-width="1.22"/>
<line x1="137.0" y1="475.0" x2="135.4" y2="486.6" stroke-width="1.22"/>
<line x1="206.9" y1="507.0" x2="220.6" y2="507.0" stroke-width="1.22"/>
<line x1="91.6" y1="459.6" x2="88.8" y2="458.8" stroke-width="1.22"/>
<line x1="190.0" y1="471.8" x2="204.5" y2="472.2" stroke-width="1.22"/>
<line x1="221.5" y1="453.7" x2="204.5" y2="472.2" stroke-width="1.22"/>
<line x1="225.4" y1="485.0" x2="221.0" y2="501.7" stroke-width="1.22"/>
<line x1="112.6" y1="473.5" x2="113.3" y2="479.1" stroke-width="1.22"/>
<line x1="102.5" y1="428.5" x2="110.7" y2="423.6" stroke-width="1.22"/>
<line x1="87.4" y1="414.8" x2="85.9" y2="427.3" stroke-width="1.22"/>
<line x1="191.4" y1="435.4" x2="162.3" y2="414.3" stroke-width="1.22"/>
<line x1="102.5" y1="428.5" x2="87.7" y2="435.3" stroke-width="1.22"/>
<line x1="220.6" y1="507.0" x2="209.6" y2="501.3" stroke-width="1.22"/>
<line x1="138.9" y1="507.0" x2="124.8" y2="497.8" stroke-width="1.22"/>
<line x1="86.5" y1="488.7" x2="82.9" y2="492.5" stroke-width="1.22"/>
<line x1="204.5" y1="472.2" x2="225.4" y2="467.8" stroke-width="1.22"/>
<line x1="40.0" y1="402.7" x2="48.6" y2="401.6" stroke-width="1.22"/>
<line x1="39.0" y1="392.0" x2="48.6" y2="401.6" stroke-width="1.22"/>
<line x1="92.9" y1="466.0" x2="92.6" y2="468.1" stroke-width="1.22"/>
<line x1="234.2" y1="507.0" x2="221.0" y2="501.7" stroke-width="1.22"/>
<line x1="275.0" y1="507.0" x2="260.1" y2="484.0" stroke-width="1.22"/>
<line x1="31.0" y1="386.0" x2="31.0" y2="401.1" stroke-width="1.22"/>
<line x1="89.3" y1="478.0" x2="88.6" y2="481.8" stroke-width="1.22"/>
<line x1="48.6" y1="401.6" x2="65.3" y2="401.3" stroke-width="1.22"/>
<line x1="31.0" y1="461.6" x2="40.6" y2="471.9" stroke-width="1.22"/>
<line x1="30.0" y1="507.0" x2="31.0" y2="476.8" stroke-width="1.22"/>
<line x1="102.2" y1="452.2" x2="97.7" y2="456.0" stroke-width="1.22"/>
<line x1="168.2" y1="502.9" x2="162.3" y2="500.1" stroke-width="1.22"/>
<line x1="81.9" y1="487.8" x2="82.9" y2="492.5" stroke-width="1.22"/>
<line x1="105.3" y1="451.1" x2="109.2" y2="442.1" stroke-width="1.22"/>
<line x1="89.1" y1="498.9" x2="89.6" y2="495.5" stroke-width="1.22"/>
<line x1="89.4" y1="403.7" x2="98.6" y2="415.6" stroke-width="1.22"/>
<line x1="31.0" y1="401.1" x2="31.0" y2="416.2" stroke-width="1.22"/>
<line x1="207.1" y1="487.9" x2="225.4" y2="485.0" stroke-width="1.22"/>
<line x1="65.5" y1="442.1" x2="65.5" y2="437.9" stroke-width="1.22"/>
<line x1="47.9" y1="437.8" x2="60.2" y2="436.9" stroke-width="1.22"/>
<line x1="89.8" y1="475.2" x2="89.3" y2="478.0" stroke-width="1.22"/>
<line x1="47.9" y1="437.8" x2="37.9" y2="448.1" stroke-width="1.22"/>
<line x1="88.2" y1="449.4" x2="88.8" y2="458.8" stroke-width="1.22"/>
<line x1="94.5" y1="482.4" x2="93.2" y2="480.8" stroke-width="1.22"/>
<line x1="225.4" y1="485.0" x2="241.8" y2="488.2" stroke-width="1.22"/>
<line x1="98.6" y1="466.4" x2="103.0" y2="466.3" stroke-width="1.22"/>
<line x1="190.0" y1="471.8" x2="173.1" y2="486.7" stroke-width="1.22"/>
<line x1="127.1" y1="387.8" x2="136.1" y2="400.6" stroke-width="1.22"/>
<line x1="112.6" y1="473.5" x2="108.4" y2="472.0" stroke-width="1.22"/>
<line x1="173.1" y1="486.7" x2="165.3" y2="484.2" stroke-width="1.22"/>
<line x1="94.5" y1="457.4" x2="95.0" y2="458.8" stroke-width="1.22"/>
<line x1="125.6" y1="403.5" x2="114.5" y2="415.3" stroke-width="1.22"/>
<line x1="50.6" y1="471.5" x2="65.8" y2="474.5" stroke-width="1.22"/>
<line x1="50.6" y1="471.5" x2="39.4" y2="483.1" stroke-width="1.22"/>
<line x1="136.1" y1="400.6" x2="150.7" y2="403.5" stroke-width="1.22"/>
<line x1="96.7" y1="488.4" x2="102.9" y2="483.0" stroke-width="1.22"/>
<line x1="89.3" y1="478.0" x2="86.3" y2="473.2" stroke-width="1.22"/>
<line x1="122.6" y1="445.9" x2="114.5" y2="445.2" stroke-width="1.22"/>
<line x1="207.0" y1="406.6" x2="191.4" y2="435.4" stroke-width="1.22"/>
<line x1="84.4" y1="507.0" x2="89.1" y2="498.9" stroke-width="1.22"/>
<line x1="135.7" y1="435.2" x2="150.5" y2="435.7" stroke-width="1.22"/>
<line x1="85.5" y1="486.4" x2="89.7" y2="484.1" stroke-width="1.22"/>
<line x1="102.2" y1="452.2" x2="100.7" y2="448.7" stroke-width="1.22"/>
<line x1="103.5" y1="440.3" x2="100.7" y2="448.7" stroke-width="1.22"/>
<line x1="241.3" y1="499.6" x2="256.0" y2="499.8" stroke-width="1.22"/>
<line x1="99.9" y1="498.3" x2="92.2" y2="497.0" stroke-width="1.22"/>
<line x1="100.8" y1="488.6" x2="103.6" y2="496.6" stroke-width="1.22"/>
<line x1="207.1" y1="487.9" x2="186.7" y2="502.4" stroke-width="1.22"/>
<line x1="114.5" y1="445.2" x2="109.2" y2="442.1" stroke-width="1.22"/>
<line x1="110.7" y1="423.6" x2="122.6" y2="434.1" stroke-width="1.22"/>
<line x1="31.0" y1="491.9" x2="37.7" y2="499.5" stroke-width="1.22"/>
<line x1="137.0" y1="475.0" x2="148.8" y2="474.3" stroke-width="1.22"/>
<line x1="43.6" y1="507.0" x2="57.2" y2="507.0" stroke-width="1.22"/>
<line x1="94.5" y1="482.4" x2="92.6" y2="487.2" stroke-width="1.22"/>
<line x1="110.2" y1="485.7" x2="105.0" y2="483.4" stroke-width="1.22"/>
<line x1="95.0" y1="473.8" x2="99.4" y2="474.7" stroke-width="1.22"/>
<line x1="87.4" y1="414.8" x2="98.6" y2="415.6" stroke-width="1.22"/>
<line x1="140.6" y1="448.4" x2="129.7" y2="443.9" stroke-width="1.22"/>
<line x1="128.4" y1="423.7" x2="129.7" y2="436.1" stroke-width="1.22"/>
<line x1="124.9" y1="436.4" x2="129.7" y2="436.1" stroke-width="1.22"/>
<line x1="98.1" y1="507.0" x2="103.6" y2="496.6" stroke-width="1.22"/>
<line x1="75.6" y1="487.4" x2="81.7" y2="485.4" stroke-width="1.22"/>
<line x1="135.7" y1="435.2" x2="132.5" y2="440.0" stroke-width="1.22"/>
<line x1="39.0" y1="392.0" x2="40.0" y2="402.7" stroke-width="1.22"/>
<line x1="113.3" y1="479.6" x2="107.7" y2="480.5" stroke-width="1.22"/>
<line x1="183.5" y1="381.8" x2="161.6" y2="388.8" stroke-width="1.22"/>
<line x1="242.1" y1="472.3" x2="260.1" y2="484.0" stroke-width="1.22"/>
<line x1="106.7" y1="487.9" x2="108.2" y2="487.7" stroke-width="1.22"/>
<line x1="105.3" y1="451.1" x2="103.1" y2="450.3" stroke-width="1.22"/>
<line x1="39.3" y1="425.3" x2="36.3" y2="439.6" stroke-width="1.22"/>
<line x1="70.8" y1="507.0" x2="76.2" y2="499.9" stroke-width="1.22"/>
<line x1="106.7" y1="487.9" x2="105.8" y2="485.9" stroke-width="1.22"/>
<line x1="102.1" y1="463.2" x2="98.2" y2="457.6" stroke-width="1.22"/>
<line x1="89.6" y1="464.0" x2="88.8" y2="458.8" stroke-width="1.22"/>
<line x1="77.1" y1="429.0" x2="70.8" y2="434.8" stroke-width="1.22"/>
<line x1="74.4" y1="439.3" x2="70.8" y2="434.8" stroke-width="1.22"/>
<line x1="241.3" y1="499.6" x2="245.0" y2="507.0" stroke-width="1.22"/>
<line x1="91.6" y1="459.6" x2="94.5" y2="457.4" stroke-width="1.22"/>
<line x1="97.1" y1="465.3" x2="92.9" y2="466.0" stroke-width="1.22"/>
<line x1="110.2" y1="485.7" x2="108.2" y2="487.7" stroke-width="1.22"/>
<line x1="40.5" y1="459.2" x2="40.6" y2="471.9" stroke-width="1.22"/>
<line x1="88.2" y1="449.4" x2="90.6" y2="457.9" stroke-width="1.22"/>
<line x1="127.1" y1="387.8" x2="125.6" y2="403.5" stroke-width="1.22"/>
<line x1="110.2" y1="485.7" x2="105.8" y2="485.9" stroke-width="1.22"/>
<line x1="221.0" y1="501.7" x2="241.3" y2="499.6" stroke-width="1.22"/>
<line x1="106.3" y1="457.3" x2="107.9" y2="460.7" stroke-width="1.22"/>
<line x1="166.1" y1="507.0" x2="162.3" y2="500.1" stroke-width="1.22"/>
<line x1="113.3" y1="479.6" x2="115.1" y2="490.3" stroke-width="1.22"/>
<line x1="106.3" y1="457.3" x2="105.3" y2="451.1" stroke-width="1.22"/>
<line x1="75.6" y1="450.8" x2="78.9" y2="445.9" stroke-width="1.22"/>
<line x1="97.7" y1="456.0" x2="98.2" y2="457.6" stroke-width="1.22"/>
<line x1="77.6" y1="415.7" x2="87.4" y2="414.8" stroke-width="1.22"/>
<line x1="207.0" y1="406.6" x2="233.2" y2="426.2" stroke-width="1.22"/>
<line x1="126.9" y1="460.8" x2="126.7" y2="476.0" stroke-width="1.22"/>
<line x1="191.4" y1="435.4" x2="221.5" y2="453.7" stroke-width="1.22"/>
<line x1="111.3" y1="475.3" x2="113.3" y2="479.1" stroke-width="1.22"/>
<line x1="76.8" y1="399.6" x2="77.6" y2="415.7" stroke-width="1.22"/>
<line x1="75.6" y1="450.8" x2="88.2" y2="449.4" stroke-width="1.22"/>
<line x1="110.7" y1="423.6" x2="114.5" y2="434.8" stroke-width="1.22"/>
<line x1="136.0" y1="463.5" x2="137.0" y2="475.0" stroke-width="1.22"/>
<line x1="75.6" y1="450.8" x2="60.4" y2="460.4" stroke-width="1.22"/>
<line x1="88.2" y1="449.4" x2="78.9" y2="445.9" stroke-width="1.22"/>
<line x1="221.5" y1="453.7" x2="252.9" y2="456.3" stroke-width="1.22"/>
<line x1="112.4" y1="499.5" x2="103.6" y2="496.6" stroke-width="1.22"/>
<line x1="125.3" y1="507.0" x2="138.9" y2="507.0" stroke-width="1.22"/>
<line x1="75.6" y1="487.4" x2="64.8" y2="497.8" stroke-width="1.22"/>
</g>
<g stroke="#fbfaf7" stroke-linecap="round">
<line x1="29.0" y1="300.5" x2="127.0" y2="300.5" stroke-width="1.95"/>
<line x1="37.0" y1="312.8" x2="126.0" y2="312.8" stroke-width="1.71"/>
<line x1="37.0" y1="344.6" x2="124.5" y2="344.6" stroke-width="2.20"/>
<line x1="140.8" y1="266.0" x2="126.2" y2="345.2" stroke-width="2.68"/>
<line x1="127.6" y1="266.0" x2="121.8" y2="345.0" stroke-width="1.83"/>
<line x1="67.5" y1="301.9" x2="41.2" y2="266.0" stroke-width="1.71"/>
<line x1="67.5" y1="301.9" x2="57.3" y2="266.0" stroke-width="1.71"/>
<line x1="67.5" y1="301.9" x2="74.9" y2="266.0" stroke-width="1.71"/>
<line x1="67.5" y1="301.9" x2="93.9" y2="266.0" stroke-width="1.71"/>
<line x1="67.5" y1="301.9" x2="67.5" y2="342.9" stroke-width="1.71"/>
<line x1="67.5" y1="301.9" x2="36.8" y2="322.4" stroke-width="1.71"/>
<line x1="67.5" y1="301.9" x2="36.8" y2="312.0" stroke-width="1.71"/>
<line x1="67.5" y1="301.9" x2="108.6" y2="312.1" stroke-width="1.71"/>
<line x1="67.5" y1="301.9" x2="124.7" y2="342.9" stroke-width="1.71"/>
<line x1="41.2" y1="266.0" x2="67.5" y2="342.9" stroke-width="1.59"/>
<line x1="93.9" y1="266.0" x2="67.5" y2="342.9" stroke-width="1.59"/>
<line x1="36.8" y1="335.0" x2="67.5" y2="301.9" stroke-width="1.46"/>
<line x1="108.6" y1="312.1" x2="127.6" y2="266.0" stroke-width="1.71"/>
<line x1="108.6" y1="312.1" x2="140.8" y2="266.0" stroke-width="1.71"/>
<line x1="108.6" y1="312.1" x2="136.4" y2="277.0" stroke-width="1.71"/>
<line x1="108.6" y1="312.1" x2="124.7" y2="300.4" stroke-width="1.71"/>
<line x1="107.0" y1="266.0" x2="108.6" y2="312.1" stroke-width="1.46"/>
<line x1="159.8" y1="306.3" x2="174.5" y2="271.1" stroke-width="2.32"/>
<line x1="174.5" y1="271.1" x2="221.4" y2="268.2" stroke-width="2.32"/>
<line x1="221.4" y1="268.2" x2="318.0" y2="267.0" stroke-width="2.32"/>
<line x1="318.0" y1="267.0" x2="321.0" y2="332.6" stroke-width="2.32"/>
<line x1="321.0" y1="332.6" x2="177.4" y2="342.9" stroke-width="2.32"/>
<line x1="177.4" y1="342.9" x2="159.8" y2="306.3" stroke-width="2.32"/>
<line x1="159.8" y1="306.3" x2="221.4" y2="268.2" stroke-width="1.71"/>
<line x1="159.8" y1="306.3" x2="259.5" y2="310.7" stroke-width="1.71"/>
<line x1="159.8" y1="306.3" x2="321.0" y2="278.4" stroke-width="1.71"/>
<line x1="159.8" y1="306.3" x2="321.0" y2="287.2" stroke-width="1.71"/>
<line x1="159.8" y1="306.3" x2="321.0" y2="301.9" stroke-width="1.71"/>
<line x1="159.8" y1="306.3" x2="321.0" y2="320.9" stroke-width="1.71"/>
<line x1="159.8" y1="306.3" x2="300.0" y2="312.0" stroke-width="1.71"/>
<line x1="259.5" y1="266.0" x2="259.5" y2="310.7" stroke-width="1.59"/>
<line x1="259.5" y1="310.7" x2="251.0" y2="336.0" stroke-width="1.59"/>
<line x1="204.5" y1="288.2" x2="191.4" y2="311.5" stroke-width="1.46"/>
<line x1="191.4" y1="311.5" x2="198.0" y2="329.3" stroke-width="1.46"/>
<line x1="198.0" y1="329.3" x2="222.2" y2="336.8" stroke-width="1.46"/>
<line x1="222.2" y1="336.8" x2="211.0" y2="295.6" stroke-width="1.46"/>
<line x1="211.0" y1="295.6" x2="204.5" y2="288.2" stroke-width="1.46"/>
<line x1="222.0" y1="267.6" x2="226.0" y2="338.0" stroke-width="1.59"/>
<line x1="248.4" y1="267.6" x2="259.6" y2="312.0" stroke-width="1.59"/>
<line x1="259.6" y1="312.0" x2="252.0" y2="338.0" stroke-width="1.59"/>
<line x1="227.9" y1="267.6" x2="244.7" y2="338.0" stroke-width="1.59"/>
<line x1="204.5" y1="288.2" x2="258.0" y2="300.0" stroke-width="1.59"/>
<line x1="191.4" y1="311.5" x2="300.0" y2="296.0" stroke-width="1.59"/>
<line x1="198.0" y1="329.3" x2="240.0" y2="300.0" stroke-width="1.59"/>
<line x1="222.0" y1="336.8" x2="262.0" y2="318.0" stroke-width="1.59"/>
<line x1="236.0" y1="268.0" x2="212.0" y2="340.0" stroke-width="1.59"/>
<line x1="265.0" y1="268.0" x2="235.0" y2="338.0" stroke-width="1.59"/>
<line x1="174.0" y1="267.5" x2="405.0" y2="267.5" stroke-width="2.93"/>
<line x1="37.4" y1="371.8" x2="58.9" y2="359.6" stroke-width="1.71"/>
<line x1="58.9" y1="359.6" x2="99.0" y2="378.3" stroke-width="1.71"/>
<line x1="99.0" y1="378.3" x2="141.1" y2="359.6" stroke-width="1.71"/>
<line x1="141.1" y1="359.6" x2="183.5" y2="381.3" stroke-width="1.71"/>
<line x1="183.5" y1="381.3" x2="217.1" y2="360.3" stroke-width="1.71"/>
<line x1="217.1" y1="360.3" x2="252.4" y2="393.9" stroke-width="1.71"/>
<line x1="252.4" y1="393.9" x2="286.9" y2="360.3" stroke-width="1.71"/>
<line x1="286.9" y1="360.3" x2="321.3" y2="383.0" stroke-width="1.71"/>
<line x1="321.3" y1="383.0" x2="252.4" y2="393.9" stroke-width="1.71"/>
<line x1="252.4" y1="393.9" x2="307.9" y2="335.9" stroke-width="1.59"/>
<line x1="183.5" y1="381.3" x2="252.4" y2="393.9" stroke-width="1.59"/>
<line x1="252.4" y1="393.9" x2="274.3" y2="397.3" stroke-width="1.59"/>
<line x1="274.3" y1="397.3" x2="274.3" y2="420.0" stroke-width="1.59"/>
<line x1="183.5" y1="381.3" x2="205.3" y2="406.5" stroke-width="1.59"/>
<line x1="183.5" y1="381.3" x2="230.5" y2="399.0" stroke-width="1.59"/>
<line x1="252.4" y1="393.9" x2="240.0" y2="420.0" stroke-width="1.59"/>
<line x1="252.4" y1="393.9" x2="265.0" y2="420.0" stroke-width="1.59"/>
<line x1="37.0" y1="380.2" x2="183.5" y2="381.0" stroke-width="1.95"/>
<line x1="37.0" y1="384.9" x2="99.0" y2="378.3" stroke-width="1.59"/>
<line x1="99.0" y1="378.3" x2="147.7" y2="387.7" stroke-width="1.59"/>
<line x1="141.1" y1="359.6" x2="182.2" y2="380.0" stroke-width="1.59"/>
<line x1="58.9" y1="359.6" x2="99.0" y2="380.0" stroke-width="1.59"/>
<line x1="286.5" y1="361.0" x2="320.7" y2="382.0" stroke-width="1.46"/>
<line x1="320.7" y1="382.0" x2="254.7" y2="388.0" stroke-width="1.46"/>
<line x1="254.7" y1="388.0" x2="286.5" y2="361.0" stroke-width="1.46"/>
<line x1="240.0" y1="395.0" x2="300.0" y2="340.0" stroke-width="1.34"/>
<line x1="328.8" y1="257.6" x2="326.9" y2="265.1" stroke-width="2.32"/>
<line x1="326.9" y1="265.1" x2="325.4" y2="272.7" stroke-width="2.32"/>
<line x1="325.4" y1="272.7" x2="324.2" y2="280.4" stroke-width="2.32"/>
<line x1="324.2" y1="280.4" x2="323.4" y2="288.2" stroke-width="2.32"/>
<line x1="323.4" y1="288.2" x2="323.0" y2="296.0" stroke-width="2.32"/>
<line x1="323.0" y1="296.0" x2="323.0" y2="303.9" stroke-width="2.32"/>
<line x1="323.0" y1="303.9" x2="323.4" y2="311.7" stroke-width="2.32"/>
<line x1="323.4" y1="311.7" x2="324.2" y2="319.5" stroke-width="2.32"/>
<line x1="324.2" y1="319.5" x2="325.4" y2="327.2" stroke-width="2.32"/>
<line x1="325.4" y1="327.2" x2="326.9" y2="334.9" stroke-width="2.32"/>
<line x1="326.9" y1="334.9" x2="328.8" y2="342.3" stroke-width="2.32"/>
<line x1="328.8" y1="342.3" x2="331.1" y2="349.6" stroke-width="2.32"/>
<line x1="331.1" y1="349.6" x2="333.7" y2="356.7" stroke-width="2.32"/>
<line x1="333.7" y1="356.7" x2="336.7" y2="363.6" stroke-width="2.32"/>
<line x1="336.7" y1="363.6" x2="340.0" y2="370.2" stroke-width="2.32"/>
<line x1="340.0" y1="370.2" x2="343.7" y2="376.6" stroke-width="2.32"/>
<line x1="343.7" y1="376.6" x2="347.6" y2="382.6" stroke-width="2.32"/>
<line x1="347.6" y1="382.6" x2="351.9" y2="388.3" stroke-width="2.32"/>
<line x1="351.9" y1="388.3" x2="356.4" y2="393.6" stroke-width="2.32"/>
<line x1="356.4" y1="393.6" x2="361.2" y2="398.6" stroke-width="2.32"/>
<line x1="361.2" y1="398.6" x2="366.2" y2="403.1" stroke-width="2.32"/>
<line x1="366.2" y1="403.1" x2="371.4" y2="407.3" stroke-width="2.32"/>
<line x1="371.4" y1="407.3" x2="376.8" y2="411.0" stroke-width="2.32"/>
<line x1="376.8" y1="411.0" x2="382.4" y2="414.3" stroke-width="2.32"/>
<line x1="382.4" y1="414.3" x2="388.1" y2="417.1" stroke-width="2.32"/>
<line x1="388.1" y1="417.1" x2="394.0" y2="419.5" stroke-width="2.32"/>
<line x1="394.0" y1="419.5" x2="400.0" y2="421.3" stroke-width="2.32"/>
<line x1="400.0" y1="421.3" x2="406.0" y2="422.7" stroke-width="2.32"/>
<line x1="406.0" y1="422.7" x2="412.1" y2="423.6" stroke-width="2.32"/>
<line x1="412.1" y1="423.6" x2="418.3" y2="424.0" stroke-width="2.32"/>
<line x1="418.3" y1="424.0" x2="424.4" y2="423.9" stroke-width="2.32"/>
<line x1="424.4" y1="423.9" x2="430.6" y2="423.3" stroke-width="2.32"/>
<line x1="430.6" y1="423.3" x2="436.6" y2="422.2" stroke-width="2.32"/>
<line x1="436.6" y1="422.2" x2="442.7" y2="420.6" stroke-width="2.32"/>
<line x1="442.7" y1="420.6" x2="448.6" y2="418.5" stroke-width="2.32"/>
<line x1="448.6" y1="418.5" x2="454.4" y2="415.9" stroke-width="2.32"/>
<line x1="454.4" y1="415.9" x2="460.1" y2="412.9" stroke-width="2.32"/>
<line x1="460.1" y1="412.9" x2="465.6" y2="409.4" stroke-width="2.32"/>
<line x1="465.6" y1="409.4" x2="470.9" y2="405.5" stroke-width="2.32"/>
<line x1="470.9" y1="405.5" x2="476.1" y2="401.2" stroke-width="2.32"/>
<line x1="476.1" y1="401.2" x2="481.0" y2="396.4" stroke-width="2.32"/>
<line x1="481.0" y1="396.4" x2="485.6" y2="391.3" stroke-width="2.32"/>
<line x1="485.6" y1="391.3" x2="490.0" y2="385.8" stroke-width="2.32"/>
<line x1="490.0" y1="385.8" x2="494.1" y2="380.0" stroke-width="2.32"/>
<line x1="494.1" y1="380.0" x2="497.9" y2="373.8" stroke-width="2.32"/>
<line x1="497.9" y1="373.8" x2="501.4" y2="367.3" stroke-width="2.32"/>
<line x1="501.4" y1="367.3" x2="504.6" y2="360.6" stroke-width="2.32"/>
<line x1="504.6" y1="360.6" x2="507.5" y2="353.6" stroke-width="2.32"/>
<line x1="507.5" y1="353.6" x2="509.9" y2="346.5" stroke-width="2.32"/>
<line x1="322.3" y1="255.2" x2="320.2" y2="263.1" stroke-width="2.32"/>
<line x1="320.2" y1="263.1" x2="318.6" y2="271.1" stroke-width="2.32"/>
<line x1="318.6" y1="271.1" x2="317.3" y2="279.3" stroke-width="2.32"/>
<line x1="317.3" y1="279.3" x2="316.5" y2="287.5" stroke-width="2.32"/>
<line x1="316.5" y1="287.5" x2="316.1" y2="295.8" stroke-width="2.32"/>
<line x1="316.1" y1="295.8" x2="316.1" y2="304.1" stroke-width="2.32"/>
<line x1="316.1" y1="304.1" x2="316.5" y2="312.4" stroke-width="2.32"/>
<line x1="316.5" y1="312.4" x2="317.3" y2="320.6" stroke-width="2.32"/>
<line x1="317.3" y1="320.6" x2="318.5" y2="328.8" stroke-width="2.32"/>
<line x1="318.5" y1="328.8" x2="320.2" y2="336.8" stroke-width="2.32"/>
<line x1="320.2" y1="336.8" x2="322.2" y2="344.7" stroke-width="2.32"/>
<line x1="322.2" y1="344.7" x2="324.7" y2="352.4" stroke-width="2.32"/>
<line x1="324.7" y1="352.4" x2="327.5" y2="359.9" stroke-width="2.32"/>
<line x1="327.5" y1="359.9" x2="330.7" y2="367.2" stroke-width="2.32"/>
<line x1="330.7" y1="367.2" x2="334.3" y2="374.2" stroke-width="2.32"/>
<line x1="334.3" y1="374.2" x2="338.2" y2="380.9" stroke-width="2.32"/>
<line x1="338.2" y1="380.9" x2="342.4" y2="387.2" stroke-width="2.32"/>
<line x1="342.4" y1="387.2" x2="347.0" y2="393.3" stroke-width="2.32"/>
<line x1="347.0" y1="393.3" x2="351.8" y2="398.9" stroke-width="2.32"/>
<line x1="351.8" y1="398.9" x2="356.9" y2="404.1" stroke-width="2.32"/>
<line x1="356.9" y1="404.1" x2="362.3" y2="409.0" stroke-width="2.32"/>
<line x1="362.3" y1="409.0" x2="367.9" y2="413.4" stroke-width="2.32"/>
<line x1="367.9" y1="413.4" x2="373.7" y2="417.3" stroke-width="2.32"/>
<line x1="373.7" y1="417.3" x2="379.7" y2="420.7" stroke-width="2.32"/>
<line x1="379.7" y1="420.7" x2="385.8" y2="423.7" stroke-width="2.32"/>
<line x1="385.8" y1="423.7" x2="392.1" y2="426.2" stroke-width="2.32"/>
<line x1="392.1" y1="426.2" x2="398.5" y2="428.2" stroke-width="2.32"/>
<line x1="398.5" y1="428.2" x2="405.0" y2="429.6" stroke-width="2.32"/>
<line x1="405.0" y1="429.6" x2="411.6" y2="430.6" stroke-width="2.32"/>
<line x1="411.6" y1="430.6" x2="418.1" y2="431.0" stroke-width="2.32"/>
<line x1="418.1" y1="431.0" x2="424.7" y2="430.9" stroke-width="2.32"/>
<line x1="424.7" y1="430.9" x2="431.3" y2="430.2" stroke-width="2.32"/>
<line x1="431.3" y1="430.2" x2="437.8" y2="429.1" stroke-width="2.32"/>
<line x1="437.8" y1="429.1" x2="444.3" y2="427.4" stroke-width="2.32"/>
<line x1="444.3" y1="427.4" x2="450.7" y2="425.2" stroke-width="2.32"/>
<line x1="450.7" y1="425.2" x2="456.9" y2="422.5" stroke-width="2.32"/>
<line x1="456.9" y1="422.5" x2="463.0" y2="419.3" stroke-width="2.32"/>
<line x1="463.0" y1="419.3" x2="468.9" y2="415.6" stroke-width="2.32"/>
<line x1="468.9" y1="415.6" x2="474.6" y2="411.5" stroke-width="2.32"/>
<line x1="474.6" y1="411.5" x2="480.1" y2="406.9" stroke-width="2.32"/>
<line x1="480.1" y1="406.9" x2="485.4" y2="401.9" stroke-width="2.32"/>
<line x1="485.4" y1="401.9" x2="490.4" y2="396.5" stroke-width="2.32"/>
<line x1="490.4" y1="396.5" x2="495.1" y2="390.7" stroke-width="2.32"/>
<line x1="495.1" y1="390.7" x2="499.5" y2="384.5" stroke-width="2.32"/>
<line x1="499.5" y1="384.5" x2="503.6" y2="378.0" stroke-width="2.32"/>
<line x1="503.6" y1="378.0" x2="507.3" y2="371.2" stroke-width="2.32"/>
<line x1="507.3" y1="371.2" x2="510.7" y2="364.0" stroke-width="2.32"/>
<line x1="510.7" y1="364.0" x2="513.8" y2="356.7" stroke-width="2.32"/>
<line x1="513.8" y1="356.7" x2="516.4" y2="349.1" stroke-width="2.32"/>
<line x1="316.6" y1="253.1" x2="314.5" y2="261.4" stroke-width="2.32"/>
<line x1="314.5" y1="261.4" x2="312.7" y2="269.8" stroke-width="2.32"/>
<line x1="312.7" y1="269.8" x2="311.4" y2="278.3" stroke-width="2.32"/>
<line x1="311.4" y1="278.3" x2="310.5" y2="286.9" stroke-width="2.32"/>
<line x1="310.5" y1="286.9" x2="310.1" y2="295.6" stroke-width="2.32"/>
<line x1="310.1" y1="295.6" x2="310.1" y2="304.3" stroke-width="2.32"/>
<line x1="310.1" y1="304.3" x2="310.5" y2="313.0" stroke-width="2.32"/>
<line x1="310.5" y1="313.0" x2="311.4" y2="321.6" stroke-width="2.32"/>
<line x1="311.4" y1="321.6" x2="312.7" y2="330.1" stroke-width="2.32"/>
<line x1="312.7" y1="330.1" x2="314.4" y2="338.5" stroke-width="2.32"/>
<line x1="314.4" y1="338.5" x2="316.6" y2="346.8" stroke-width="2.32"/>
<line x1="316.6" y1="346.8" x2="319.2" y2="354.8" stroke-width="2.32"/>
<line x1="319.2" y1="354.8" x2="322.2" y2="362.7" stroke-width="2.32"/>
<line x1="322.2" y1="362.7" x2="325.6" y2="370.3" stroke-width="2.32"/>
<line x1="325.6" y1="370.3" x2="329.3" y2="377.6" stroke-width="2.32"/>
<line x1="329.3" y1="377.6" x2="333.5" y2="384.6" stroke-width="2.32"/>
<line x1="333.5" y1="384.6" x2="337.9" y2="391.2" stroke-width="2.32"/>
<line x1="337.9" y1="391.2" x2="342.7" y2="397.5" stroke-width="2.32"/>
<line x1="342.7" y1="397.5" x2="347.9" y2="403.4" stroke-width="2.32"/>
<line x1="347.9" y1="403.4" x2="353.3" y2="408.9" stroke-width="2.32"/>
<line x1="353.3" y1="408.9" x2="358.9" y2="414.0" stroke-width="2.32"/>
<line x1="358.9" y1="414.0" x2="364.9" y2="418.5" stroke-width="2.32"/>
<line x1="364.9" y1="418.5" x2="371.0" y2="422.7" stroke-width="2.32"/>
<line x1="371.0" y1="422.7" x2="377.3" y2="426.3" stroke-width="2.32"/>
<line x1="377.3" y1="426.3" x2="383.9" y2="429.4" stroke-width="2.32"/>
<line x1="383.9" y1="429.4" x2="390.5" y2="432.0" stroke-width="2.32"/>
<line x1="390.5" y1="432.0" x2="397.3" y2="434.0" stroke-width="2.32"/>
<line x1="397.3" y1="434.0" x2="404.1" y2="435.6" stroke-width="2.32"/>
<line x1="404.1" y1="435.6" x2="411.1" y2="436.5" stroke-width="2.32"/>
<line x1="411.1" y1="436.5" x2="418.0" y2="437.0" stroke-width="2.32"/>
<line x1="418.0" y1="437.0" x2="425.0" y2="436.9" stroke-width="2.32"/>
<line x1="425.0" y1="436.9" x2="432.0" y2="436.2" stroke-width="2.32"/>
<line x1="432.0" y1="436.2" x2="438.9" y2="435.0" stroke-width="2.32"/>
<line x1="438.9" y1="435.0" x2="445.7" y2="433.2" stroke-width="2.32"/>
<line x1="445.7" y1="433.2" x2="452.4" y2="430.9" stroke-width="2.32"/>
<line x1="452.4" y1="430.9" x2="459.0" y2="428.1" stroke-width="2.32"/>
<line x1="459.0" y1="428.1" x2="465.5" y2="424.8" stroke-width="2.32"/>
<line x1="465.5" y1="424.8" x2="471.7" y2="420.9" stroke-width="2.32"/>
<line x1="471.7" y1="420.9" x2="477.8" y2="416.6" stroke-width="2.32"/>
<line x1="477.8" y1="416.6" x2="483.6" y2="411.8" stroke-width="2.32"/>
<line x1="483.6" y1="411.8" x2="489.1" y2="406.6" stroke-width="2.32"/>
<line x1="489.1" y1="406.6" x2="494.4" y2="400.9" stroke-width="2.32"/>
<line x1="494.4" y1="400.9" x2="499.4" y2="394.8" stroke-width="2.32"/>
<line x1="499.4" y1="394.8" x2="504.1" y2="388.4" stroke-width="2.32"/>
<line x1="504.1" y1="388.4" x2="508.4" y2="381.5" stroke-width="2.32"/>
<line x1="508.4" y1="381.5" x2="512.4" y2="374.4" stroke-width="2.32"/>
<line x1="512.4" y1="374.4" x2="516.0" y2="367.0" stroke-width="2.32"/>
<line x1="516.0" y1="367.0" x2="519.2" y2="359.3" stroke-width="2.32"/>
<line x1="519.2" y1="359.3" x2="522.0" y2="351.3" stroke-width="2.32"/>
<line x1="328.8" y1="257.6" x2="316.6" y2="253.1" stroke-width="1.46"/>
<line x1="328.8" y1="257.6" x2="318.6" y2="270.8" stroke-width="1.46"/>
<line x1="322.3" y1="255.2" x2="312.8" y2="269.5" stroke-width="1.46"/>
<line x1="325.4" y1="272.4" x2="312.8" y2="269.5" stroke-width="1.46"/>
<line x1="325.4" y1="272.4" x2="316.5" y2="286.9" stroke-width="1.46"/>
<line x1="318.6" y1="270.8" x2="310.6" y2="286.3" stroke-width="1.46"/>
<line x1="323.5" y1="287.6" x2="310.6" y2="286.3" stroke-width="1.46"/>
<line x1="323.5" y1="287.6" x2="316.0" y2="303.1" stroke-width="1.46"/>
<line x1="316.5" y1="286.9" x2="310.0" y2="303.3" stroke-width="1.46"/>
<line x1="323.0" y1="302.9" x2="310.0" y2="303.3" stroke-width="1.46"/>
<line x1="323.0" y1="302.9" x2="317.1" y2="319.3" stroke-width="1.46"/>
<line x1="316.0" y1="303.1" x2="311.2" y2="320.2" stroke-width="1.46"/>
<line x1="324.1" y1="318.3" x2="311.2" y2="320.2" stroke-width="1.46"/>
<line x1="324.1" y1="318.3" x2="319.8" y2="335.2" stroke-width="1.46"/>
<line x1="317.1" y1="319.3" x2="314.1" y2="336.8" stroke-width="1.46"/>
<line x1="326.6" y1="333.3" x2="314.1" y2="336.8" stroke-width="1.46"/>
<line x1="326.6" y1="333.3" x2="324.1" y2="350.6" stroke-width="1.46"/>
<line x1="319.8" y1="335.2" x2="318.5" y2="352.9" stroke-width="1.46"/>
<line x1="330.5" y1="347.9" x2="318.5" y2="352.9" stroke-width="1.46"/>
<line x1="330.5" y1="347.9" x2="329.8" y2="365.2" stroke-width="1.46"/>
<line x1="324.1" y1="350.6" x2="324.6" y2="368.2" stroke-width="1.46"/>
<line x1="335.9" y1="361.7" x2="324.6" y2="368.2" stroke-width="1.46"/>
<line x1="335.9" y1="361.7" x2="336.9" y2="378.8" stroke-width="1.46"/>
<line x1="329.8" y1="365.2" x2="332.1" y2="382.4" stroke-width="1.46"/>
<line x1="342.5" y1="374.6" x2="332.1" y2="382.4" stroke-width="1.46"/>
<line x1="342.5" y1="374.6" x2="345.3" y2="391.1" stroke-width="1.46"/>
<line x1="336.9" y1="378.8" x2="341.0" y2="395.3" stroke-width="1.46"/>
<line x1="350.3" y1="386.3" x2="341.0" y2="395.3" stroke-width="1.46"/>
<line x1="350.3" y1="386.3" x2="354.8" y2="402.1" stroke-width="1.46"/>
<line x1="345.3" y1="391.1" x2="351.1" y2="406.8" stroke-width="1.46"/>
<line x1="359.2" y1="396.6" x2="351.1" y2="406.8" stroke-width="1.46"/>
<line x1="359.2" y1="396.6" x2="365.4" y2="411.5" stroke-width="1.46"/>
<line x1="354.8" y1="402.1" x2="362.2" y2="416.6" stroke-width="1.46"/>
<line x1="369.1" y1="405.5" x2="362.2" y2="416.6" stroke-width="1.46"/>
<line x1="369.1" y1="405.5" x2="376.8" y2="419.1" stroke-width="1.46"/>
<line x1="365.4" y1="411.5" x2="374.3" y2="424.6" stroke-width="1.46"/>
<line x1="379.7" y1="412.8" x2="374.3" y2="424.6" stroke-width="1.46"/>
<line x1="379.7" y1="412.8" x2="388.8" y2="425.0" stroke-width="1.46"/>
<line x1="376.8" y1="419.1" x2="387.0" y2="430.7" stroke-width="1.46"/>
<line x1="390.9" y1="418.3" x2="387.0" y2="430.7" stroke-width="1.46"/>
<line x1="390.9" y1="418.3" x2="401.4" y2="428.9" stroke-width="1.46"/>
<line x1="388.8" y1="425.0" x2="400.3" y2="434.8" stroke-width="1.46"/>
<line x1="402.6" y1="422.0" x2="400.3" y2="434.8" stroke-width="1.46"/>
<line x1="402.6" y1="422.0" x2="414.2" y2="430.8" stroke-width="1.46"/>
<line x1="401.4" y1="428.9" x2="413.9" y2="436.8" stroke-width="1.46"/>
<line x1="414.6" y1="423.8" x2="413.9" y2="436.8" stroke-width="1.46"/>
<line x1="414.6" y1="423.8" x2="427.1" y2="430.7" stroke-width="1.46"/>
<line x1="414.2" y1="430.8" x2="427.5" y2="436.7" stroke-width="1.46"/>
<line x1="426.6" y1="423.7" x2="427.5" y2="436.7" stroke-width="1.46"/>
<line x1="426.6" y1="423.7" x2="439.9" y2="428.6" stroke-width="1.46"/>
<line x1="427.1" y1="430.7" x2="441.1" y2="434.5" stroke-width="1.46"/>
<line x1="438.6" y1="421.7" x2="441.1" y2="434.5" stroke-width="1.46"/>
<line x1="438.6" y1="421.7" x2="452.4" y2="424.5" stroke-width="1.46"/>
<line x1="439.9" y1="428.6" x2="454.3" y2="430.2" stroke-width="1.46"/>
<line x1="450.2" y1="417.8" x2="454.3" y2="430.2" stroke-width="1.46"/>
<line x1="450.2" y1="417.8" x2="464.4" y2="418.5" stroke-width="1.46"/>
<line x1="452.4" y1="424.5" x2="467.0" y2="423.9" stroke-width="1.46"/>
<line x1="461.4" y1="412.1" x2="467.0" y2="423.9" stroke-width="1.46"/>
<line x1="461.4" y1="412.1" x2="475.7" y2="410.6" stroke-width="1.46"/>
<line x1="464.4" y1="418.5" x2="478.9" y2="415.7" stroke-width="1.46"/>
<line x1="472.0" y1="404.7" x2="478.9" y2="415.7" stroke-width="1.46"/>
<line x1="472.0" y1="404.7" x2="486.2" y2="401.1" stroke-width="1.46"/>
<line x1="475.7" y1="410.6" x2="490.0" y2="405.7" stroke-width="1.46"/>
<line x1="481.7" y1="395.7" x2="490.0" y2="405.7" stroke-width="1.46"/>
<line x1="481.7" y1="395.7" x2="495.6" y2="389.9" stroke-width="1.46"/>
<line x1="486.2" y1="401.1" x2="500.0" y2="394.1" stroke-width="1.46"/>
<line x1="490.5" y1="385.1" x2="500.0" y2="394.1" stroke-width="1.46"/>
<line x1="490.5" y1="385.1" x2="503.9" y2="377.4" stroke-width="1.46"/>
<line x1="495.6" y1="389.9" x2="508.7" y2="381.0" stroke-width="1.46"/>
<line x1="498.2" y1="373.3" x2="508.7" y2="381.0" stroke-width="1.46"/>
<line x1="498.2" y1="373.3" x2="510.9" y2="363.7" stroke-width="1.46"/>
<line x1="503.9" y1="377.4" x2="516.1" y2="366.7" stroke-width="1.46"/>
<line x1="504.7" y1="360.3" x2="516.1" y2="366.7" stroke-width="1.46"/>
<line x1="504.7" y1="360.3" x2="516.4" y2="349.1" stroke-width="1.46"/>
<line x1="510.9" y1="363.7" x2="522.0" y2="351.3" stroke-width="1.46"/>
<line x1="509.9" y1="346.5" x2="522.0" y2="351.3" stroke-width="1.46"/>
<line x1="358.8" y1="337.5" x2="352.1" y2="340.0" stroke-width="1.59"/>
<line x1="394.2" y1="304.4" x2="396.4" y2="310.3" stroke-width="1.59"/>
<line x1="347.6" y1="268.3" x2="334.0" y2="268.0" stroke-width="1.59"/>
<line x1="363.6" y1="298.9" x2="355.4" y2="312.9" stroke-width="1.59"/>
<line x1="373.4" y1="284.4" x2="382.8" y2="279.2" stroke-width="1.59"/>
<line x1="381.4" y1="310.1" x2="377.4" y2="315.6" stroke-width="1.59"/>
<line x1="383.3" y1="299.1" x2="394.2" y2="304.4" stroke-width="1.59"/>
<line x1="342.2" y1="290.8" x2="335.2" y2="281.1" stroke-width="1.59"/>
<line x1="380.1" y1="286.5" x2="382.8" y2="279.2" stroke-width="1.59"/>
<line x1="346.9" y1="317.1" x2="351.5" y2="334.9" stroke-width="1.59"/>
<line x1="325.3" y1="312.4" x2="346.9" y2="317.1" stroke-width="1.59"/>
<line x1="368.0" y1="341.6" x2="359.7" y2="341.5" stroke-width="1.59"/>
<line x1="396.3" y1="316.4" x2="395.4" y2="321.9" stroke-width="1.59"/>
<line x1="342.0" y1="339.6" x2="338.1" y2="334.1" stroke-width="1.59"/>
<line x1="345.2" y1="290.3" x2="344.6" y2="300.7" stroke-width="1.59"/>
<line x1="369.2" y1="328.8" x2="365.2" y2="324.1" stroke-width="1.59"/>
<line x1="355.3" y1="343.2" x2="350.9" y2="343.7" stroke-width="1.59"/>
<line x1="396.3" y1="316.4" x2="396.4" y2="310.3" stroke-width="1.59"/>
<line x1="335.2" y1="281.1" x2="343.8" y2="280.3" stroke-width="1.59"/>
<line x1="334.2" y1="272.2" x2="334.0" y2="268.0" stroke-width="1.59"/>
<line x1="320.4" y1="278.1" x2="318.0" y2="268.0" stroke-width="1.59"/>
<line x1="387.9" y1="322.3" x2="379.2" y2="342.6" stroke-width="1.59"/>
<line x1="357.7" y1="288.3" x2="353.2" y2="287.6" stroke-width="1.59"/>
<line x1="395.4" y1="285.6" x2="394.2" y2="304.4" stroke-width="1.59"/>
<line x1="388.7" y1="320.6" x2="395.4" y2="321.9" stroke-width="1.59"/>
<line x1="379.2" y1="342.6" x2="368.4" y2="347.7" stroke-width="1.59"/>
<line x1="395.4" y1="285.6" x2="398.0" y2="268.0" stroke-width="1.59"/>
<line x1="318.9" y1="283.8" x2="320.4" y2="278.1" stroke-width="1.59"/>
<line x1="342.0" y1="339.6" x2="351.5" y2="334.9" stroke-width="1.59"/>
<line x1="339.4" y1="340.2" x2="333.4" y2="344.1" stroke-width="1.59"/>
<line x1="367.8" y1="349.1" x2="359.6" y2="346.0" stroke-width="1.59"/>
<line x1="393.6" y1="342.1" x2="379.2" y2="342.6" stroke-width="1.59"/>
<line x1="363.6" y1="298.9" x2="344.6" y2="300.7" stroke-width="1.59"/>
<line x1="372.1" y1="280.4" x2="382.8" y2="279.2" stroke-width="1.59"/>
<line x1="353.2" y1="287.6" x2="344.6" y2="300.7" stroke-width="1.59"/>
<line x1="355.3" y1="343.2" x2="359.6" y2="346.0" stroke-width="1.59"/>
<line x1="380.1" y1="286.5" x2="371.7" y2="292.6" stroke-width="1.59"/>
<line x1="332.4" y1="296.4" x2="323.5" y2="303.3" stroke-width="1.59"/>
<line x1="397.6" y1="333.0" x2="395.4" y2="321.9" stroke-width="1.59"/>
<line x1="358.4" y1="313.4" x2="366.4" y2="320.3" stroke-width="1.59"/>
<line x1="373.4" y1="284.4" x2="376.1" y2="286.6" stroke-width="1.59"/>
<line x1="369.2" y1="328.8" x2="372.1" y2="326.8" stroke-width="1.59"/>
<line x1="343.8" y1="329.6" x2="338.1" y2="334.1" stroke-width="1.59"/>
<line x1="388.7" y1="320.6" x2="381.4" y2="310.1" stroke-width="1.59"/>
<line x1="368.0" y1="341.6" x2="379.2" y2="342.6" stroke-width="1.59"/>
<line x1="346.9" y1="317.1" x2="346.4" y2="310.6" stroke-width="1.59"/>
<line x1="397.6" y1="333.0" x2="396.4" y2="310.3" stroke-width="1.59"/>
<line x1="342.2" y1="290.8" x2="344.6" y2="300.7" stroke-width="1.59"/>
<line x1="318.0" y1="268.0" x2="334.0" y2="268.0" stroke-width="1.59"/>
<line x1="359.6" y1="346.0" x2="368.4" y2="347.7" stroke-width="1.59"/>
<line x1="368.3" y1="310.2" x2="371.7" y2="292.6" stroke-width="1.59"/>
<line x1="322.7" y1="299.8" x2="332.4" y2="296.4" stroke-width="1.59"/>
<line x1="358.8" y1="337.5" x2="351.5" y2="334.9" stroke-width="1.59"/>
<line x1="322.7" y1="299.8" x2="323.5" y2="303.3" stroke-width="1.59"/>
<line x1="380.1" y1="286.5" x2="384.4" y2="280.7" stroke-width="1.59"/>
<line x1="384.4" y1="280.7" x2="395.4" y2="285.6" stroke-width="1.59"/>
<line x1="387.9" y1="322.3" x2="395.4" y2="321.9" stroke-width="1.59"/>
<line x1="380.1" y1="286.5" x2="383.3" y2="299.1" stroke-width="1.59"/>
<line x1="334.0" y1="268.0" x2="350.0" y2="268.0" stroke-width="1.59"/>
<line x1="352.1" y1="340.0" x2="350.9" y2="343.7" stroke-width="1.59"/>
<line x1="381.8" y1="306.4" x2="381.4" y2="310.1" stroke-width="1.59"/>
<line x1="343.8" y1="329.6" x2="351.5" y2="334.9" stroke-width="1.59"/>
<line x1="358.4" y1="313.4" x2="368.3" y2="310.2" stroke-width="1.59"/>
<line x1="367.0" y1="271.6" x2="363.6" y2="279.9" stroke-width="1.59"/>
<line x1="339.4" y1="340.2" x2="350.9" y2="343.7" stroke-width="1.59"/>
<line x1="335.2" y1="281.1" x2="320.4" y2="278.1" stroke-width="1.59"/>
<line x1="346.9" y1="317.1" x2="343.8" y2="329.6" stroke-width="1.59"/>
<line x1="359.7" y1="341.5" x2="359.6" y2="346.0" stroke-width="1.59"/>
<line x1="366.4" y1="320.3" x2="377.4" y2="315.6" stroke-width="1.59"/>
<line x1="393.8" y1="315.0" x2="394.2" y2="304.4" stroke-width="1.59"/>
<line x1="387.8" y1="296.2" x2="394.2" y2="304.4" stroke-width="1.59"/>
<line x1="322.7" y1="299.8" x2="320.0" y2="298.5" stroke-width="1.59"/>
<line x1="333.4" y1="344.1" x2="330.1" y2="344.5" stroke-width="1.59"/>
<line x1="318.4" y1="335.3" x2="328.5" y2="337.3" stroke-width="1.59"/>
<line x1="338.4" y1="304.5" x2="346.4" y2="310.6" stroke-width="1.59"/>
<line x1="355.3" y1="343.2" x2="359.7" y2="341.5" stroke-width="1.59"/>
<line x1="358.6" y1="339.4" x2="359.7" y2="341.5" stroke-width="1.59"/>
<line x1="338.4" y1="304.5" x2="333.9" y2="297.8" stroke-width="1.59"/>
<line x1="358.4" y1="313.4" x2="365.2" y2="324.1" stroke-width="1.59"/>
<line x1="335.2" y1="281.1" x2="334.2" y2="272.2" stroke-width="1.59"/>
<line x1="365.2" y1="324.1" x2="351.5" y2="334.9" stroke-width="1.59"/>
<line x1="342.0" y1="339.6" x2="339.4" y2="340.2" stroke-width="1.59"/>
<line x1="397.6" y1="333.0" x2="387.9" y2="322.3" stroke-width="1.59"/>
<line x1="350.0" y1="268.0" x2="366.0" y2="268.0" stroke-width="1.59"/>
<line x1="350.2" y1="275.9" x2="350.9" y2="287.6" stroke-width="1.59"/>
<line x1="328.5" y1="337.3" x2="319.1" y2="319.5" stroke-width="1.59"/>
<line x1="387.9" y1="322.3" x2="377.4" y2="315.6" stroke-width="1.59"/>
<line x1="342.0" y1="339.6" x2="343.8" y2="329.6" stroke-width="1.59"/>
<line x1="342.2" y1="290.8" x2="332.4" y2="296.4" stroke-width="1.59"/>
<line x1="363.6" y1="279.9" x2="362.2" y2="282.8" stroke-width="1.59"/>
<line x1="357.7" y1="288.3" x2="362.2" y2="282.8" stroke-width="1.59"/>
<line x1="339.4" y1="340.2" x2="328.5" y2="337.3" stroke-width="1.59"/>
<line x1="382.8" y1="279.2" x2="398.0" y2="268.0" stroke-width="1.59"/>
<line x1="366.0" y1="268.0" x2="382.0" y2="268.0" stroke-width="1.59"/>
<line x1="358.4" y1="313.4" x2="355.4" y2="312.9" stroke-width="1.59"/>
<line x1="343.8" y1="280.3" x2="334.2" y2="272.2" stroke-width="1.59"/>
<line x1="371.7" y1="292.6" x2="376.1" y2="286.6" stroke-width="1.59"/>
<line x1="368.3" y1="310.2" x2="366.4" y2="320.3" stroke-width="1.59"/>
<line x1="355.3" y1="343.2" x2="352.1" y2="340.0" stroke-width="1.59"/>
<line x1="358.6" y1="339.4" x2="352.1" y2="340.0" stroke-width="1.59"/>
<line x1="343.8" y1="280.3" x2="350.2" y2="275.9" stroke-width="1.59"/>
<line x1="350.2" y1="275.9" x2="366.0" y2="268.0" stroke-width="1.59"/>
<line x1="397.6" y1="333.0" x2="396.3" y2="316.4" stroke-width="1.59"/>
<line x1="334.2" y1="272.2" x2="318.0" y2="268.0" stroke-width="1.59"/>
<line x1="350.9" y1="343.7" x2="359.6" y2="346.0" stroke-width="1.59"/>
<line x1="397.6" y1="333.0" x2="393.6" y2="342.1" stroke-width="1.59"/>
<line x1="369.2" y1="328.8" x2="379.2" y2="342.6" stroke-width="1.59"/>
<line x1="373.4" y1="284.4" x2="362.2" y2="282.8" stroke-width="1.59"/>
<line x1="347.6" y1="268.3" x2="350.0" y2="268.0" stroke-width="1.59"/>
<line x1="346.4" y1="310.6" x2="344.6" y2="300.7" stroke-width="1.59"/>
<line x1="353.2" y1="287.6" x2="362.2" y2="282.8" stroke-width="1.59"/>
<line x1="367.8" y1="349.1" x2="379.2" y2="342.6" stroke-width="1.59"/>
<line x1="352.3" y1="310.9" x2="346.4" y2="310.6" stroke-width="1.59"/>
<line x1="342.2" y1="290.8" x2="345.2" y2="290.3" stroke-width="1.59"/>
<line x1="395.4" y1="321.9" x2="393.8" y2="315.0" stroke-width="1.59"/>
<line x1="357.7" y1="288.3" x2="363.6" y2="298.9" stroke-width="1.59"/>
<line x1="381.4" y1="310.1" x2="393.8" y2="315.0" stroke-width="1.59"/>
<line x1="319.1" y1="319.5" x2="338.1" y2="334.1" stroke-width="1.59"/>
<line x1="372.1" y1="280.4" x2="363.6" y2="279.9" stroke-width="1.59"/>
<line x1="388.7" y1="320.6" x2="377.4" y2="315.6" stroke-width="1.59"/>
<line x1="380.1" y1="286.5" x2="376.1" y2="286.6" stroke-width="1.59"/>
<line x1="387.9" y1="322.3" x2="393.6" y2="342.1" stroke-width="1.59"/>
<line x1="343.8" y1="280.3" x2="350.9" y2="287.6" stroke-width="1.59"/>
<line x1="333.4" y1="344.1" x2="350.9" y2="343.7" stroke-width="1.59"/>
<line x1="383.3" y1="299.1" x2="387.8" y2="296.2" stroke-width="1.59"/>
<line x1="353.2" y1="287.6" x2="363.6" y2="298.9" stroke-width="1.59"/>
<line x1="382.8" y1="279.2" x2="376.1" y2="286.6" stroke-width="1.59"/>
<line x1="358.8" y1="337.5" x2="369.2" y2="328.8" stroke-width="1.59"/>
<line x1="355.4" y1="312.9" x2="352.3" y2="310.9" stroke-width="1.59"/>
<line x1="381.4" y1="310.1" x2="394.2" y2="304.4" stroke-width="1.59"/>
<line x1="338.4" y1="304.5" x2="323.5" y2="303.3" stroke-width="1.59"/>
<line x1="350.9" y1="287.6" x2="344.6" y2="300.7" stroke-width="1.59"/>
<line x1="320.0" y1="298.5" x2="319.1" y2="319.5" stroke-width="1.59"/>
<line x1="342.0" y1="339.6" x2="350.9" y2="343.7" stroke-width="1.59"/>
<line x1="395.4" y1="285.6" x2="387.8" y2="296.2" stroke-width="1.59"/>
<line x1="367.0" y1="271.6" x2="382.0" y2="268.0" stroke-width="1.59"/>
<line x1="318.9" y1="283.8" x2="318.0" y2="268.0" stroke-width="1.59"/>
<line x1="396.3" y1="316.4" x2="393.8" y2="315.0" stroke-width="1.59"/>
<line x1="328.5" y1="337.3" x2="318.4" y2="329.7" stroke-width="1.59"/>
<line x1="371.7" y1="292.6" x2="362.2" y2="282.8" stroke-width="1.59"/>
<line x1="328.5" y1="337.3" x2="338.1" y2="334.1" stroke-width="1.59"/>
<line x1="358.8" y1="337.5" x2="358.6" y2="339.4" stroke-width="1.59"/>
<line x1="388.7" y1="320.6" x2="393.8" y2="315.0" stroke-width="1.59"/>
<line x1="358.4" y1="313.4" x2="363.6" y2="298.9" stroke-width="1.59"/>
<line x1="381.8" y1="306.4" x2="371.7" y2="292.6" stroke-width="1.59"/>
<line x1="318.9" y1="283.8" x2="332.4" y2="296.4" stroke-width="1.59"/>
<line x1="342.2" y1="290.8" x2="343.8" y2="280.3" stroke-width="1.59"/>
<line x1="368.0" y1="341.6" x2="368.4" y2="347.7" stroke-width="1.59"/>
<line x1="387.9" y1="322.3" x2="388.7" y2="320.6" stroke-width="1.59"/>
<line x1="368.0" y1="341.6" x2="369.2" y2="328.8" stroke-width="1.59"/>
<line x1="367.0" y1="271.6" x2="372.1" y2="280.4" stroke-width="1.59"/>
<line x1="325.3" y1="312.4" x2="319.1" y2="319.5" stroke-width="1.59"/>
<line x1="318.4" y1="335.3" x2="318.4" y2="329.7" stroke-width="1.59"/>
<line x1="320.9" y1="310.2" x2="319.1" y2="319.5" stroke-width="1.59"/>
<line x1="320.4" y1="278.1" x2="334.2" y2="272.2" stroke-width="1.59"/>
<line x1="333.9" y1="297.8" x2="344.6" y2="300.7" stroke-width="1.59"/>
<line x1="342.2" y1="290.8" x2="333.9" y2="297.8" stroke-width="1.59"/>
<line x1="382.0" y1="268.0" x2="398.0" y2="268.0" stroke-width="1.59"/>
<line x1="347.6" y1="268.3" x2="343.8" y2="280.3" stroke-width="1.59"/>
<line x1="371.7" y1="292.6" x2="363.6" y2="298.9" stroke-width="1.59"/>
<line x1="379.2" y1="342.6" x2="372.1" y2="326.8" stroke-width="1.59"/>
<line x1="320.9" y1="310.2" x2="325.3" y2="312.4" stroke-width="1.59"/>
<line x1="382.8" y1="279.2" x2="382.0" y2="268.0" stroke-width="1.59"/>
<line x1="318.9" y1="283.8" x2="320.0" y2="298.5" stroke-width="1.59"/>
<line x1="381.8" y1="306.4" x2="383.3" y2="299.1" stroke-width="1.59"/>
<line x1="346.9" y1="317.1" x2="352.3" y2="310.9" stroke-width="1.59"/>
<line x1="335.2" y1="281.1" x2="318.9" y2="283.8" stroke-width="1.59"/>
<line x1="350.2" y1="275.9" x2="350.0" y2="268.0" stroke-width="1.59"/>
<line x1="320.0" y1="298.5" x2="332.4" y2="296.4" stroke-width="1.59"/>
<line x1="373.4" y1="284.4" x2="372.1" y2="280.4" stroke-width="1.59"/>
<line x1="321.0" y1="339.8" x2="330.1" y2="344.5" stroke-width="1.59"/>
<line x1="320.0" y1="298.5" x2="323.5" y2="303.3" stroke-width="1.59"/>
<line x1="367.0" y1="271.6" x2="350.2" y2="275.9" stroke-width="1.59"/>
<line x1="339.4" y1="340.2" x2="338.1" y2="334.1" stroke-width="1.59"/>
<line x1="350.2" y1="275.9" x2="363.6" y2="279.9" stroke-width="1.59"/>
<line x1="380.1" y1="286.5" x2="395.4" y2="285.6" stroke-width="1.59"/>
<line x1="372.1" y1="280.4" x2="382.0" y2="268.0" stroke-width="1.59"/>
<line x1="381.8" y1="306.4" x2="394.2" y2="304.4" stroke-width="1.59"/>
<line x1="384.4" y1="280.7" x2="382.8" y2="279.2" stroke-width="1.59"/>
<line x1="377.4" y1="315.6" x2="372.1" y2="326.8" stroke-width="1.59"/>
<line x1="380.1" y1="286.5" x2="387.8" y2="296.2" stroke-width="1.59"/>
<line x1="346.9" y1="317.1" x2="365.2" y2="324.1" stroke-width="1.59"/>
<line x1="350.9" y1="287.6" x2="345.2" y2="290.3" stroke-width="1.59"/>
<line x1="335.2" y1="281.1" x2="332.4" y2="296.4" stroke-width="1.59"/>
<line x1="366.4" y1="320.3" x2="372.1" y2="326.8" stroke-width="1.59"/>
<line x1="318.4" y1="329.7" x2="319.1" y2="319.5" stroke-width="1.59"/>
<line x1="372.1" y1="280.4" x2="362.2" y2="282.8" stroke-width="1.59"/>
<line x1="384.4" y1="280.7" x2="398.0" y2="268.0" stroke-width="1.59"/>
<line x1="328.5" y1="337.3" x2="321.0" y2="339.8" stroke-width="1.59"/>
<line x1="368.3" y1="310.2" x2="363.6" y2="298.9" stroke-width="1.59"/>
<line x1="333.9" y1="297.8" x2="332.4" y2="296.4" stroke-width="1.59"/>
<line x1="333.9" y1="297.8" x2="323.5" y2="303.3" stroke-width="1.59"/>
<line x1="353.2" y1="287.6" x2="350.2" y2="275.9" stroke-width="1.59"/>
<line x1="368.3" y1="310.2" x2="381.4" y2="310.1" stroke-width="1.59"/>
<line x1="338.4" y1="304.5" x2="344.6" y2="300.7" stroke-width="1.59"/>
<line x1="338.4" y1="304.5" x2="325.3" y2="312.4" stroke-width="1.59"/>
<line x1="320.9" y1="310.2" x2="323.5" y2="303.3" stroke-width="1.59"/>
<line x1="325.3" y1="312.4" x2="323.5" y2="303.3" stroke-width="1.59"/>
<line x1="357.7" y1="288.3" x2="371.7" y2="292.6" stroke-width="1.59"/>
<line x1="368.3" y1="310.2" x2="377.4" y2="315.6" stroke-width="1.59"/>
<line x1="350.2" y1="275.9" x2="362.2" y2="282.8" stroke-width="1.59"/>
<line x1="381.8" y1="306.4" x2="368.3" y2="310.2" stroke-width="1.59"/>
<line x1="363.6" y1="298.9" x2="352.3" y2="310.9" stroke-width="1.59"/>
<line x1="346.9" y1="317.1" x2="355.4" y2="312.9" stroke-width="1.59"/>
<line x1="387.9" y1="322.3" x2="372.1" y2="326.8" stroke-width="1.59"/>
<line x1="355.4" y1="312.9" x2="365.2" y2="324.1" stroke-width="1.59"/>
<line x1="367.8" y1="349.1" x2="368.4" y2="347.7" stroke-width="1.59"/>
<line x1="368.0" y1="341.6" x2="359.6" y2="346.0" stroke-width="1.59"/>
<line x1="342.0" y1="339.6" x2="352.1" y2="340.0" stroke-width="1.59"/>
<line x1="383.3" y1="299.1" x2="371.7" y2="292.6" stroke-width="1.59"/>
<line x1="373.4" y1="284.4" x2="371.7" y2="292.6" stroke-width="1.59"/>
<line x1="367.0" y1="271.6" x2="366.0" y2="268.0" stroke-width="1.59"/>
<line x1="320.9" y1="310.2" x2="320.0" y2="298.5" stroke-width="1.59"/>
<line x1="318.4" y1="335.3" x2="321.0" y2="339.8" stroke-width="1.59"/>
<line x1="328.5" y1="337.3" x2="330.1" y2="344.5" stroke-width="1.59"/>
<line x1="358.8" y1="337.5" x2="359.7" y2="341.5" stroke-width="1.59"/>
<line x1="347.6" y1="268.3" x2="334.2" y2="272.2" stroke-width="1.59"/>
<line x1="353.2" y1="287.6" x2="350.9" y2="287.6" stroke-width="1.59"/>
<line x1="338.4" y1="304.5" x2="346.9" y2="317.1" stroke-width="1.59"/>
<line x1="365.2" y1="324.1" x2="372.1" y2="326.8" stroke-width="1.59"/>
<line x1="366.4" y1="320.3" x2="365.2" y2="324.1" stroke-width="1.59"/>
<line x1="351.5" y1="334.9" x2="352.1" y2="340.0" stroke-width="1.59"/>
<line x1="343.8" y1="280.3" x2="345.2" y2="290.3" stroke-width="1.59"/>
<line x1="347.6" y1="268.3" x2="350.2" y2="275.9" stroke-width="1.59"/>
<line x1="393.8" y1="315.0" x2="396.4" y2="310.3" stroke-width="1.59"/>
<line x1="352.3" y1="310.9" x2="344.6" y2="300.7" stroke-width="1.59"/>
<line x1="328.5" y1="337.3" x2="333.4" y2="344.1" stroke-width="1.59"/>
<line x1="368.0" y1="341.6" x2="358.8" y2="337.5" stroke-width="1.59"/>
<line x1="358.8" y1="337.5" x2="365.2" y2="324.1" stroke-width="1.59"/>
<line x1="355.3" y1="343.2" x2="358.6" y2="339.4" stroke-width="1.59"/>
<line x1="384.5" y1="290.0" x2="484.5" y2="290.0" stroke-width="2.68"/>
<line x1="484.5" y1="290.0" x2="484.5" y2="507.0" stroke-width="2.68"/>
<line x1="484.5" y1="507.0" x2="384.5" y2="507.0" stroke-width="2.68"/>
<line x1="384.5" y1="507.0" x2="384.5" y2="290.0" stroke-width="2.68"/>
<line x1="387.5" y1="290.0" x2="387.5" y2="507.0" stroke-width="2.20"/>
<line x1="399.0" y1="290.0" x2="397.3" y2="507.0" stroke-width="1.95"/>
<line x1="413.7" y1="290.0" x2="416.2" y2="507.0" stroke-width="1.95"/>
<line x1="420.0" y1="290.0" x2="422.0" y2="507.0" stroke-width="1.95"/>
<line x1="437.0" y1="290.0" x2="434.7" y2="507.0" stroke-width="1.95"/>
<line x1="447.7" y1="290.0" x2="448.3" y2="507.0" stroke-width="1.95"/>
<line x1="467.2" y1="290.0" x2="467.1" y2="507.0" stroke-width="1.95"/>
<line x1="476.0" y1="290.0" x2="476.6" y2="507.0" stroke-width="1.95"/>
<line x1="450.6" y1="290.0" x2="439.0" y2="507.0" stroke-width="1.59"/>
<line x1="480.2" y1="290.0" x2="478.2" y2="507.0" stroke-width="1.59"/>
<line x1="447.6" y1="290.0" x2="455.7" y2="507.0" stroke-width="1.59"/>
<line x1="404.0" y1="290.0" x2="386.0" y2="507.0" stroke-width="1.59"/>
<line x1="426.3" y1="290.0" x2="442.2" y2="507.0" stroke-width="1.59"/>
<line x1="465.9" y1="290.0" x2="479.7" y2="507.0" stroke-width="1.59"/>
<line x1="397.1" y1="290.0" x2="421.9" y2="507.0" stroke-width="1.59"/>
<line x1="464.6" y1="290.0" x2="484.0" y2="507.0" stroke-width="1.59"/>
<line x1="437.3" y1="290.0" x2="462.2" y2="507.0" stroke-width="1.59"/>
<line x1="390.6" y1="290.0" x2="386.0" y2="507.0" stroke-width="1.59"/>
<line x1="388.0" y1="290.0" x2="386.0" y2="507.0" stroke-width="1.59"/>
<line x1="410.4" y1="290.0" x2="391.6" y2="507.0" stroke-width="1.59"/>
<line x1="441.6" y1="331.3" x2="404.7" y2="401.1" stroke-width="1.46"/>
<line x1="452.4" y1="311.7" x2="414.1" y2="499.2" stroke-width="1.46"/>
<line x1="438.8" y1="336.1" x2="463.7" y2="457.6" stroke-width="1.46"/>
<line x1="404.7" y1="292.8" x2="410.7" y2="481.8" stroke-width="1.46"/>
<line x1="480.1" y1="293.5" x2="484.0" y2="423.0" stroke-width="1.46"/>
<line x1="428.3" y1="326.4" x2="386.0" y2="300.0" stroke-width="1.46"/>
<line x1="428.3" y1="326.4" x2="484.0" y2="300.0" stroke-width="1.46"/>
<line x1="428.3" y1="326.4" x2="386.0" y2="345.0" stroke-width="1.46"/>
<line x1="428.3" y1="326.4" x2="484.0" y2="350.0" stroke-width="1.46"/>
<line x1="428.3" y1="326.4" x2="400.0" y2="290.0" stroke-width="1.46"/>
<line x1="428.3" y1="326.4" x2="460.0" y2="290.0" stroke-width="1.46"/>
<line x1="428.3" y1="326.4" x2="395.0" y2="380.0" stroke-width="1.46"/>
<line x1="428.3" y1="326.4" x2="470.0" y2="385.0" stroke-width="1.46"/>
<line x1="428.3" y1="326.4" x2="386.0" y2="326.0" stroke-width="1.46"/>
<line x1="428.3" y1="326.4" x2="484.0" y2="326.0" stroke-width="1.46"/>
<line x1="428.3" y1="326.4" x2="440.0" y2="290.0" stroke-width="1.46"/>
<line x1="428.3" y1="326.4" x2="415.0" y2="290.0" stroke-width="1.46"/>
<line x1="413.7" y1="283.9" x2="429.5" y2="283.9" stroke-width="1.83"/>
<line x1="429.5" y1="283.9" x2="429.5" y2="290.0" stroke-width="1.83"/>
<line x1="429.5" y1="290.0" x2="413.7" y2="290.0" stroke-width="1.83"/>
<line x1="413.7" y1="290.0" x2="413.7" y2="283.9" stroke-width="1.83"/>
<line x1="418.6" y1="266.9" x2="442.9" y2="286.3" stroke-width="1.59"/>
<line x1="442.9" y1="286.3" x2="464.7" y2="266.9" stroke-width="1.59"/>
<line x1="464.7" y1="266.9" x2="484.2" y2="276.6" stroke-width="1.59"/>
<line x1="442.9" y1="286.3" x2="484.0" y2="285.0" stroke-width="1.59"/>
<line x1="405.0" y1="268.0" x2="418.6" y2="266.9" stroke-width="1.59"/>
<line x1="418.6" y1="266.9" x2="430.0" y2="290.0" stroke-width="1.59"/>
<line x1="442.9" y1="286.3" x2="420.0" y2="300.0" stroke-width="1.59"/>
<line x1="464.7" y1="266.9" x2="475.0" y2="300.0" stroke-width="1.59"/>
<line x1="484.2" y1="276.6" x2="450.0" y2="300.0" stroke-width="1.59"/>
<line x1="450.0" y1="465.0" x2="484.0" y2="470.0" stroke-width="1.46"/>
<line x1="353.2" y1="454.0" x2="376.3" y2="445.6" stroke-width="1.59"/>
<line x1="376.3" y1="445.6" x2="398.2" y2="454.0" stroke-width="1.59"/>
<line x1="398.2" y1="454.0" x2="395.7" y2="507.0" stroke-width="1.59"/>
<line x1="395.7" y1="507.0" x2="353.2" y2="507.0" stroke-width="1.59"/>
<line x1="353.2" y1="507.0" x2="353.2" y2="454.0" stroke-width="1.59"/>
<line x1="376.3" y1="445.6" x2="372.0" y2="507.0" stroke-width="1.59"/>
<line x1="353.2" y1="470.0" x2="398.0" y2="475.0" stroke-width="1.59"/>
<line x1="274.3" y1="397.0" x2="274.3" y2="507.0" stroke-width="1.95"/>
<line x1="251.5" y1="394.8" x2="252.9" y2="456.3" stroke-width="1.59"/>
<line x1="252.9" y1="456.3" x2="254.2" y2="485.0" stroke-width="1.59"/>
<line x1="254.2" y1="485.0" x2="254.2" y2="507.0" stroke-width="1.59"/>
<line x1="250.0" y1="390.0" x2="320.4" y2="382.4" stroke-width="1.46"/>
<line x1="320.4" y1="382.4" x2="274.0" y2="398.0" stroke-width="1.46"/>
<line x1="274.0" y1="398.0" x2="250.0" y2="390.0" stroke-width="1.46"/>
<line x1="250.0" y1="388.0" x2="320.0" y2="382.0" stroke-width="1.59"/>
<line x1="99.0" y1="378.0" x2="99.0" y2="507.0" stroke-width="1.34"/>
</g>
<rect x="30" y="300" width="7.8" height="182" fill="#fbfaf7"/>
<rect x="28" y="265" width="459" height="1.2" fill="#c8c8c8"/><rect x="28" y="265" width="2" height="242" fill="#e8e8e8"/>
<text x="33" y="275.5" font-family="Liberation Sans" font-size="9.2" fill="#e4e4e4">UV Editor</text>
</g>
</svg>
<svg class="a" style="left:0;top:0" width="1024" height="15" viewBox="0 0 1024 15"><rect x="107.5" y="1" width="12.0" height="13" fill="#d6e6f5"/><rect x="187.5" y="1" width="11.5" height="13" fill="#d6e6f5"/><rect x="412.8" y="1" width="11.8" height="13" fill="#d6e6f5"/><line x1="20.6" y1="2" x2="20.6" y2="13" stroke="#c8c8c8" stroke-width="1"/><line x1="48.8" y1="2" x2="48.8" y2="13" stroke="#c8c8c8" stroke-width="1"/><line x1="76.0" y1="2" x2="76.0" y2="13" stroke="#c8c8c8" stroke-width="1"/><line x1="103.7" y1="2" x2="103.7" y2="13" stroke="#c8c8c8" stroke-width="1"/><line x1="183.0" y1="2" x2="183.0" y2="13" stroke="#c8c8c8" stroke-width="1"/><line x1="211.9" y1="2" x2="211.9" y2="13" stroke="#c8c8c8" stroke-width="1"/><line x1="254.0" y1="2" x2="254.0" y2="13" stroke="#c8c8c8" stroke-width="1"/><line x1="282.6" y1="2" x2="282.6" y2="13" stroke="#c8c8c8" stroke-width="1"/><line x1="297.6" y1="2" x2="297.6" y2="13" stroke="#c8c8c8" stroke-width="1"/><path d="M10,4.5L16,10.5M16,4.5L10,10.5" stroke="#1a1a1a" stroke-width="1.6"/><path d="M24,6 L27,6 L28,7 L32,7 L32,11 L24,11Z" fill="#8a8a3a"/><path d="M24.5,11 L26,8 L33,8 L31.5,11Z" fill="#b8b860"/><circle cx="31.5" cy="4.5" r="1.2" fill="#556"/><rect x="36.5" y="3.5" width="8" height="8" fill="#2c3320"/><rect x="38" y="4" width="5" height="3" fill="#d8e0b0"/><path d="M53,9 Q55,5 59,7 Q60,9 58,11" fill="none" stroke="#334" stroke-width="1.4"/><path d="M52,6.5 L53,9.5 L55.5,8.5Z" fill="#334"/><path d="M71,9 Q69,5 65,7 Q64,9 66,11" fill="none" stroke="#ccc" stroke-width="1.4"/><rect x="80.5" y="4.5" width="6.5" height="6.5" fill="#283020"/><rect x="82" y="5" width="3.5" height="2" fill="#c8d0b8"/><rect x="82.3" y="8.2" width="3" height="2.5" fill="#505848"/><path d="M87,5 L88.5,3.5" stroke="#222" stroke-width="1.2"/><path d="M92.5,3.5 H96.5 L97.5,4.5 V9.5 H92.5Z" fill="#9a9aa6"/><path d="M95,6 H99 L100.5,7.5 V11 H95Z" fill="#77778a"/><path d="M113.5,4V11M110,7.5H117" stroke="#4a6a8a" stroke-width="0.9"/><path d="M113.5,3.5L112.2,5.2H114.8ZM113.5,11.5L112.2,9.8H114.8ZM109.5,7.5L111.2,6.2V8.8ZM117.5,7.5L115.8,6.2V8.8Z" fill="#3a5a7a"/><circle cx="125.3" cy="7.7" r="3.1" fill="none" stroke="#555" stroke-width="1"/><circle cx="128" cy="6.2" r="1.2" fill="#222"/><rect x="135.9" y="4.7" width="5.8" height="6" fill="none" stroke="#505050" stroke-width="0.9" stroke-dasharray="1.2 0.6"/><rect x="136.4" y="7.8" width="2.5" height="2.5" fill="#505050"/><rect x="148" y="4.7" width="6" height="6" fill="none" stroke="#555" stroke-width="1"/><rect x="150" y="6.8" width="2" height="2" fill="none" stroke="#666" stroke-width="0.7"/><path d="M161.5,4.8H166.8V9.5H163" fill="none" stroke="#555" stroke-width="0.9"/><rect x="160" y="6.8" width="3.5" height="3" fill="none" stroke="#555" stroke-width="0.9"/><circle cx="161.8" cy="10.5" r="1.1" fill="#444"/><path d="M173.2,4.7H178.8V9.5Q178.8,11.3 176,11.3Q173.2,11.3 173.2,9.5Z" fill="none" stroke="#555" stroke-width="1"/><path d="M173.6,7.8H178.4V9.5Q178.4,10.9 176,10.9Q173.6,10.9 173.6,9.5Z" fill="#555"/><text x="193" y="10.5" font-size="7.5" fill="#335" text-anchor="middle" font-family="Liberation Sans">1</text><text x="205" y="10.5" font-size="7.5" fill="#444" text-anchor="middle" font-family="Liberation Sans">2</text><rect x="217.9" y="3.5" width="8" height="8" fill="none" stroke="#444" stroke-width="1" stroke-dasharray="1.5 1"/><rect x="230.4" y="3.5" width="8" height="8" fill="none" stroke="#444" stroke-width="1" stroke-dasharray="1.5 1"/><rect x="242.8" y="3.5" width="8" height="8" fill="none" stroke="#444" stroke-width="1" stroke-dasharray="1.5 1"/><path d="M219.5,9L223,5.5L225,7.5L221.5,11" fill="none" stroke="#333" stroke-width="1"/><path d="M234.4,5V10.5M232.5,5H236.3M232.5,10.5H236.3" stroke="#222" stroke-width="1"/><path d="M244.5,10.5L248.5,5" stroke="#333" stroke-width="1.2"/><path d="M259.5,11L264,6.5" stroke="#222" stroke-width="1.8"/><circle cx="265" cy="5" r="1.6" fill="#222"/><rect x="272" y="7" width="4" height="5" rx="1" fill="#777"/><rect x="273" y="4" width="2" height="3" fill="#555"/><path d="M287,9 Q288,12 291,12 Q294,12 294,9 L294,6 M290,9 L290,4 M292,9 L292,5" fill="none" stroke="#444" stroke-width="1"/><path d="M286,4.5 L288,6.5" stroke="#444" stroke-width="0.8"/><rect x="303.4" y="3.5" width="8" height="8" fill="none" stroke="#5c5c5c" stroke-width="0.9"/><rect x="315.0" y="3.5" width="8" height="8" fill="none" stroke="#5c5c5c" stroke-width="0.9"/><path d="M319.0,3.5V11.5"  stroke="#5c5c5c" stroke-width="0.9"/><rect x="326.8" y="3.5" width="8" height="8" fill="none" stroke="#5c5c5c" stroke-width="0.9"/><path d="M326.8,7.5H334.8"  stroke="#5c5c5c" stroke-width="0.9"/><rect x="339.5" y="3.5" width="8" height="8" fill="none" stroke="#5c5c5c" stroke-width="0.9"/><path d="M343.5,3.5V11.5M343.5,7.5H347.5"  stroke="#5c5c5c" stroke-width="0.9"/><rect x="352.0" y="3.5" width="8" height="8" fill="none" stroke="#5c5c5c" stroke-width="0.9"/><path d="M356.0,3.5V11.5M352.0,7.5H356.0"  stroke="#5c5c5c" stroke-width="0.9"/><rect x="364.0" y="3.5" width="8" height="8" fill="none" stroke="#5c5c5c" stroke-width="0.9"/><path d="M364.0,7.5H372.0M368.0,3.5V7.5"  stroke="#5c5c5c" stroke-width="0.9"/><rect x="376.6" y="3.5" width="8" height="8" fill="none" stroke="#5c5c5c" stroke-width="0.9"/><path d="M376.6,7.5H384.6M380.6,7.5V11.5"  stroke="#5c5c5c" stroke-width="0.9"/><rect x="389.0" y="3.5" width="8" height="8" fill="none" stroke="#5c5c5c" stroke-width="0.9"/><path d="M391.7,3.5V11.5M394.3,3.5V11.5"  stroke="#5c5c5c" stroke-width="0.9"/><rect x="402.0" y="3.5" width="8" height="8" fill="none" stroke="#5c5c5c" stroke-width="0.9"/><path d="M402.0,6.2H410.0M402.0,8.8H410.0"  stroke="#5c5c5c" stroke-width="0.9"/><rect x="414.7" y="3.5" width="8" height="8" fill="none" stroke="#5c5c5c" stroke-width="0.9"/><path d="M418.7,3.5V11.5M414.7,7.5H422.7"  stroke="#2a4a7a" stroke-width="1"/></svg>
<svg class="a" style="left:0;top:14px" width="30" height="310" viewBox="0 14 30 310"><rect x="3.5" y="17.5" width="11.5" height="13.5" fill="#cfe3f5"/><rect x="15.5" y="82.5" width="12" height="13" fill="#cfe3f5"/><line x1="4" y1="57.0" x2="27" y2="57.0" stroke="#d0d0d0" stroke-width="1"/><line x1="4" y1="109.0" x2="27" y2="109.0" stroke="#d0d0d0" stroke-width="1"/><line x1="4" y1="149.0" x2="27" y2="149.0" stroke="#d0d0d0" stroke-width="1"/><line x1="4" y1="202.5" x2="27" y2="202.5" stroke="#d0d0d0" stroke-width="1"/><line x1="4" y1="229.5" x2="27" y2="229.5" stroke="#d0d0d0" stroke-width="1"/><line x1="4" y1="271.6" x2="27" y2="271.6" stroke="#d0d0d0" stroke-width="1"/><g transform="translate(9.2,24.6)"><rect x="-3.5" y="-3" width="7" height="6" fill="none" stroke="#4a78a8" stroke-width="1" stroke-dasharray="1.5 0.8"/></g><g transform="translate(21.4,24.6)"><path d="M-3,2 Q-4,-3 1,-3 Q4,-3 3.5,-1 Q3,1 -1,1 L-2,4" fill="none" stroke="#505050" stroke-width="0.9"/></g><g transform="translate(9.2,37.0)"><path d="M0,-4V4M-4,0H4" stroke="#505050" stroke-width="1.1"/><path d="M0,-4.5L-1.5,-2.5H1.5ZM0,4.5L-1.5,2.5H1.5ZM-4.5,0L-2.5,-1.5V1.5ZM4.5,0L2.5,-1.5V1.5Z" fill="#505050"/></g><g transform="translate(21.4,37.0)"><circle cx="-1" cy="-1" r="2.6" fill="none" stroke="#505050" stroke-width="0.9"/><path d="M1,1L3.8,3.8" stroke="#505050" stroke-width="1.6"/></g><g transform="translate(9.2,50.0)"><circle cx="-1" cy="-1" r="2.4" fill="none" stroke="#505050" stroke-width="0.9"/><path d="M1,1L3.5,3.5" stroke="#505050" stroke-width="1.5"/><path d="M-4,-4h1M3,-4h1M-4,3h1" stroke="#505050" stroke-width="0.8"/></g><g transform="translate(21.4,50.0)"><rect x="-4" y="-4" width="8" height="8" fill="none" stroke="#505050" stroke-width="0.9" stroke-dasharray="1.2 0.8"/><circle cx="-0.5" cy="-0.5" r="2" fill="none" stroke="#505050" stroke-width="0.9"/><path d="M1,1L3,3" stroke="#505050" stroke-width="1.2"/></g><g transform="translate(9.2,64.0)"><path d="M-3,-4L-3,3L-1,1L1,4L2,3L0,0L3,0Z" fill="none" stroke="#505050" stroke-width="0.9"/><path d="M2,-4h1M4,-2h1" stroke="#505050" stroke-width="0.8"/></g><g transform="translate(21.4,64.0)"><path d="M-3,3L3,-3" stroke="#505050" stroke-width="1.6"/><circle cx="-3" cy="3" r="1.3" fill="none" stroke="#505050" stroke-width="0.9"/><circle cx="3" cy="-3" r="1.3" fill="none" stroke="#505050" stroke-width="0.9"/></g><g transform="translate(9.2,76.7)"><circle cx="-2" cy="-2.5" r="0.9" fill="#505050"/><circle cx="1" cy="0" r="0.9" fill="#505050"/><circle cx="-3" cy="2.5" r="0.9" fill="#505050"/><path d="M2.5,2.5h2M3.5,1.5v2" stroke="#505050" stroke-width="0.8"/></g><g transform="translate(21.4,76.7)"><path d="M-4,-4H3M-4,-4V3" fill="none" stroke="#505050" stroke-width="0.9"/><path d="M-2,-2L3,3M-2,1L1,4" fill="none" stroke="#505050" stroke-width="0.9"/></g><g transform="translate(9.2,89.0)"><path d="M0,-4V4M-4,0H4M-3,-3L3,3M-3,3L3,-3" stroke="#505050" stroke-width="0.8"/></g><g transform="translate(21.4,89.0)"><path d="M4,-4L-3,0L2,4Z" fill="none" stroke="#3a4a6a" stroke-width="1"/></g><g transform="translate(9.2,102.0)"><rect x="-4" y="-4" width="5" height="5" fill="none" stroke="#505050" stroke-width="0.9"/><rect x="-1" y="-1" width="5" height="5" fill="none" stroke="#505050" stroke-width="0.9"/></g><g transform="translate(21.4,102.0)"><rect x="-3.5" y="-3.5" width="7" height="7" fill="none" stroke="#505050" stroke-width="0.9"/><path d="M0,-3.5V3.5M-3.5,0H3.5" stroke="#505050" stroke-width="0.8"/></g><g transform="translate(9.2,116.0)"><path d="M-3.5,3.5V-3.5H3.5Z" fill="none" stroke="#505050" stroke-width="0.9"/></g><g transform="translate(21.4,116.0)"><rect x="-3.5" y="-3.5" width="7" height="7" fill="none" stroke="#505050" stroke-width="0.9"/></g><g transform="translate(9.2,128.5)"><rect x="-4" y="-2" width="6" height="6" fill="none" stroke="#505050" stroke-width="0.9"/><path d="M-4,-2L-2,-4H4V2L2,4M2,-2L4,-4" fill="none" stroke="#505050" stroke-width="0.9"/></g><g transform="translate(21.4,128.5)"><rect x="-4" y="-2" width="6" height="6" fill="none" stroke="#505050" stroke-width="0.9"/><path d="M-4,-2L-2,-4H4V2L2,4M2,-2L4,-4" fill="none" stroke="#505050" stroke-width="0.9"/></g><g transform="translate(9.2,142.0)"><ellipse cx="0" cy="-2.5" rx="3" ry="1.3" fill="none" stroke="#505050" stroke-width="0.9"/><path d="M-3,-2.5V2.5A3,1.3 0 0 0 3,2.5V-2.5" fill="none" stroke="#505050" stroke-width="0.9"/></g><g transform="translate(21.4,142.0)"><circle cx="0" cy="0" r="3.5" fill="none" stroke="#505050" stroke-width="0.9"/><ellipse cx="0" cy="0" rx="3.5" ry="1.2" fill="none" stroke="#888" stroke-width="0.6"/></g><g transform="translate(9.2,158.7)"><rect x="-4" y="-4" width="8" height="8" fill="none" stroke="#505050" stroke-width="0.9"/><path d="M-1.3,-4V4M1.3,-4V4M-4,-1.3H4M-4,1.3H4" stroke="#505050" stroke-width="0.7"/></g><g transform="translate(21.4,158.7)"><rect x="-4" y="-3" width="5" height="7" fill="none" stroke="#505050" stroke-width="0.9"/><path d="M1,-2H4M2.5,-3.5L4,-2L2.5,-0.5" fill="none" stroke="#505050" stroke-width="0.9"/></g><g transform="translate(9.2,170.6)"><circle cx="-2.5" cy="-2.5" r="1" fill="#505050"/><circle cx="1.5" cy="-2.5" r="1" fill="#505050"/><circle cx="-2.5" cy="1.5" r="1" fill="#505050"/><rect x="0.5" y="0.5" width="3" height="3" fill="none" stroke="#505050" stroke-width="0.9"/></g><g transform="translate(21.4,170.6)"><rect x="-4" y="-4" width="8" height="8" fill="none" stroke="#505050" stroke-width="0.9"/><path d="M-4,-1H4M-4,1.5H4M-2,-4V4" stroke="#505050" stroke-width="0.7"/></g><g transform="translate(9.2,183.0)"><rect x="-4" y="-4" width="8" height="8" fill="none" stroke="#505050" stroke-width="0.9"/><path d="M0,-4V4M-4,0H4" stroke="#505050" stroke-width="0.7"/></g><g transform="translate(21.4,183.0)"><rect x="-2.5" y="-4" width="5" height="8" fill="none" stroke="#505050" stroke-width="0.9"/><path d="M-4,0H4" stroke="#505050" stroke-width="1"/></g><g transform="translate(9.2,195.8)"><circle cx="-3" cy="3" r="1" fill="none" stroke="#505050" stroke-width="0.9"/><circle cx="3" cy="-3" r="1" fill="none" stroke="#505050" stroke-width="0.9"/><path d="M-2,2L2,-2" stroke="#505050" stroke-width="0.7" stroke-dasharray="1 0.7"/></g><g transform="translate(21.4,195.8)"><circle cx="-3" cy="3" r="1" fill="none" stroke="#505050" stroke-width="0.9"/><circle cx="3" cy="-3" r="1" fill="none" stroke="#505050" stroke-width="0.9"/><path d="M-2,2L2,-2" stroke="#505050" stroke-width="0.7"/></g><g transform="translate(9.2,210.4)"><path d="M-4,2L0,-3L4,-1L0,4Z" fill="none" stroke="#505050" stroke-width="0.9"/><path d="M-2,0L2,2" fill="none" stroke="#505050" stroke-width="0.9"/></g><g transform="translate(21.4,210.4)"><path d="M-3,4L3,-3L4,-2L-2,4Z" fill="none" stroke="#505050" stroke-width="0.9"/></g><g transform="translate(9.2,222.0)"><path d="M-4,4L-1,1M-2,-1L1,2M-1,-2L2,-4L4,-2L2,1" fill="none" stroke="#505050" stroke-width="0.9"/></g><g transform="translate(21.4,222.0)"><path d="M-4,4L-1,1" stroke="#505050" stroke-width="1"/><path d="M-2,-1L1,2M-1,-2L2,-4L4,-2L2,1Z" fill="#c8c040" stroke="#6a6a20" stroke-width="0.9"/></g><g transform="translate(9.2,238.0)"><path d="M-3,-4H1L3,-2V3H-3Z" fill="none" stroke="#505050" stroke-width="0.9"/><path d="M-1,1V4M-2.5,2.5L-1,4L0.5,2.5" stroke="#505050" stroke-width="0.8" fill="none"/></g><g transform="translate(21.4,238.0)"><path d="M-4,-1H4V3H-4Z" fill="none" stroke="#505050" stroke-width="0.9"/><path d="M-2,-1A3,3 0 0 1 3,-3" fill="none" stroke="#505050" stroke-width="0.9"/></g><g transform="translate(9.2,250.7)"><path d="M3,0A3,3 0 1 1 0,-3" fill="none" stroke="#505050" stroke-width="1.2"/><path d="M0,-4.5V-1.5L2,-3Z" fill="#505050"/></g><g transform="translate(21.4,250.7)"><path d="M-3,0A3,3 0 1 0 0,-3" fill="none" stroke="#505050" stroke-width="1.2"/><path d="M0,-4.5V-1.5L-2,-3Z" fill="#505050"/></g><g transform="translate(9.2,263.0)"><path d="M0,-4V4M-2,-4H2M-2,4H2" stroke="#505050" stroke-width="1"/></g><g transform="translate(21.4,263.0)"><path d="M-4,-2V2L0,0ZM4,-2V2L0,0Z" fill="#505050"/><path d="M-4,0H4" stroke="#505050" stroke-width="0.8"/></g><g transform="translate(9.2,278.3)"><path d="M-4,-3.5H4M-4,3.5H4" stroke="#4a5a7a" stroke-width="0.9"/><path d="M-2,-2.5L-3,0H-1ZM2,-2.5L1,0H3Z" fill="#505050"/><path d="M-3,1.5H3" stroke="#505050" stroke-width="0.7"/></g><g transform="translate(21.4,278.3)"><path d="M-4,-3.5H4M-4,3.5H4" stroke="#4a5a7a" stroke-width="0.9"/><path d="M-2,2.5L-3,0H-1ZM2,2.5L1,0H3Z" fill="#505050"/><path d="M-3,-1.5H3" stroke="#505050" stroke-width="0.7"/></g><g transform="translate(9.2,290.0)"><path d="M-3.5,-4V4M3.5,-4V4" stroke="#4a5a7a" stroke-width="0.9"/><path d="M-2,-2H2M-2,2H2" stroke="#505050" stroke-width="0.8"/><path d="M2.5,-2L1,-3V-1ZM2.5,2L1,1V3Z" fill="#505050"/></g><g transform="translate(21.4,290.0)"><path d="M-3.5,-4V4M3.5,-4V4" stroke="#4a5a7a" stroke-width="0.9"/><path d="M-2,-2H2M-2,2H2" stroke="#505050" stroke-width="0.8"/><path d="M-2.5,-2L-1,-3V-1ZM-2.5,2L-1,1V3Z" fill="#505050"/></g><g transform="translate(9.2,303.0)"><rect x="-4" y="-4" width="8" height="8" fill="none" stroke="#505050" stroke-width="0.9"/><path d="M0,-4V4M-4,0H4" stroke="#505050" stroke-width="0.8"/><rect x="-2" y="-2" width="4" height="4" fill="none" stroke="#777" stroke-width="0.6"/></g><g transform="translate(21.4,303.0)"><rect x="-4" y="-4" width="8" height="8" fill="none" stroke="#505050" stroke-width="0.9"/><rect x="-2" y="-2" width="4" height="4" fill="none" stroke="#505050" stroke-width="0.9"/><path d="M-4,0H-2M2,0H4" stroke="#505050" stroke-width="0.8"/></g><g transform="translate(9.2,315.4)"><path d="M-4,-4V4M4,-4V4M-4,0H4" stroke="#505050" stroke-width="0.9"/><path d="M-1,-2L-3,0L-1,2M1,-2L3,0L1,2" fill="none" stroke="#505050" stroke-width="0.9"/></g><g transform="translate(21.4,315.4)"><path d="M-4,-4H4M-4,4H4M0,-4V4" stroke="#505050" stroke-width="0.9"/><path d="M-2,-1L0,-3L2,-1M-2,1L0,3L2,1" fill="none" stroke="#505050" stroke-width="0.9"/></g></svg>
<div class="a" style="left:943px;top:17px;width:70px;height:4px;border-top:1px solid #c4c4c4;border-bottom:1px solid #c4c4c4"></div>
<div class="a" style="left:1013px;top:13px;font-size:9px;font-weight:bold;color:#222;font-family:Liberation Sans">×</div>
<div class="a" style="left:943px;top:262px;width:70px;height:4px;border-top:1px solid #c4c4c4;border-bottom:1px solid #c4c4c4"></div>
<div class="a" style="left:1013px;top:259px;font-size:9px;font-weight:bold;color:#222;font-family:Liberation Sans">×</div>
<div class="a" style="left:940px;top:260px;width:82px;height:1px;background:#dcdcdc"></div>
<div class="ti" style="left:966px;top:25.1px">Lights</div>
<div class="ti" style="left:966px;top:34.8px">Groups</div>
<div class="ti" style="left:966px;top:44.4px">Materials</div>
<div class="ti" style="left:976.5px;top:54.1px">Tube_frame</div>
<div class="ti" style="left:976.5px;top:63.7px">offroadtire</div>
<div class="ti" style="left:976.5px;top:73.4px">Exhaust</div>
<div class="ti" style="left:976.5px;top:83.1px">Rad</div>
<div class="ti" style="left:976.5px;top:92.7px">Driveline</div>
<div class="ti" style="left:976.5px;top:102.4px">Wires0</div>
<div class="ti" style="left:976.5px;top:112.0px">Wires1</div>
<div class="ti" style="left:976.5px;top:121.7px">Wires2</div>
<div class="ti" style="left:976.5px;top:131.4px">Wires3</div>
<div class="ti" style="left:976.5px;top:141.0px">Wires4</div>
<div class="ti" style="left:976.5px;top:150.7px">Wires</div>
<div class="ti" style="left:976.5px;top:160.3px">Mufflers</div>
<div class="ti" style="left:976.5px;top:170.0px">hood_lights</div>
<div class="ti" style="left:976.5px;top:179.7px">Trim</div>
<div class="ti" style="left:976.5px;top:189.3px">Glass</div>
<div class="ti" style="left:976.5px;top:199.0px">Body</div>
<div class="ti" style="left:976.5px;top:208.6px">canvas</div>
<div class="ti" style="left:976.5px;top:218.3px">Face</div>
<div class="ti" style="left:976.5px;top:228.0px">Ties</div>
<div class="ti" style="left:966px;top:237.6px">Bones</div>
<svg class="a" style="left:0;top:0" width="1024" height="270" viewBox="0 0 1024 270"><path d="M952.5,27V241" stroke="#a8a8a8" stroke-width="1" stroke-dasharray="1 1"/><path d="M963.5,52V231.5" stroke="#a8a8a8" stroke-width="1" stroke-dasharray="1 1"/><path d="M952.5,28.8H956" stroke="#a8a8a8" stroke-width="1" stroke-dasharray="1 1"/><path d="M956.5,28.8L959.5,25.6L962.5,28.8L959.5,32.0Z" fill="none" stroke="#222" stroke-width="1.1"/><path d="M959.5,25.6L962.5,28.8L959.5,32.0Z" fill="#222"/><path d="M952.5,38.5H956" stroke="#a8a8a8" stroke-width="1" stroke-dasharray="1 1"/><rect x="949.5" y="35.5" width="6" height="6" fill="#fff" stroke="#b0b0b0" stroke-width="0.8"/><path d="M950.8,38.5H954.2M952.5,36.7V40.3" stroke="#777" stroke-width="0.8"/><rect x="956.5" y="35.0" width="6" height="7" rx="2.5" fill="none" stroke="#222" stroke-width="1.1"/><path d="M956.5,38.0H962.5" stroke="#222" stroke-width="0.9"/><path d="M952.5,48.1H956" stroke="#a8a8a8" stroke-width="1" stroke-dasharray="1 1"/><rect x="949.5" y="45.1" width="6" height="6" fill="#fff" stroke="#b0b0b0" stroke-width="0.8"/><path d="M950.8,48.1H954.2" stroke="#777" stroke-width="0.8"/><circle cx="959.5" cy="48.1" r="3.3" fill="#fff" stroke="#222" stroke-width="1.3"/><path d="M959.5,44.8A3.3,3.3 0 0 1 959.5,51.4Z" fill="#222"/><path d="M963.5,57.8H967" stroke="#a8a8a8" stroke-width="1" stroke-dasharray="1 1"/><rect x="967" y="54.8" width="6" height="6" fill="#f4f4f4" stroke="#555" stroke-width="0.9"/><rect x="968.3" y="56.1" width="3.4" height="3.4" fill="#c8c8c8"/><path d="M963.5,67.4H967" stroke="#a8a8a8" stroke-width="1" stroke-dasharray="1 1"/><rect x="967" y="64.4" width="6" height="6" fill="#f4f4f4" stroke="#555" stroke-width="0.9"/><path d="M968.5,66.1H971.5M970,66.1V69.4" stroke="#222" stroke-width="0.9"/><path d="M963.5,77.1H967" stroke="#a8a8a8" stroke-width="1" stroke-dasharray="1 1"/><rect x="967" y="74.1" width="6" height="6" fill="#f4f4f4" stroke="#555" stroke-width="0.9"/><path d="M968.5,75.8H971.5M970,75.8V79.1" stroke="#222" stroke-width="0.9"/><path d="M963.5,86.8H967" stroke="#a8a8a8" stroke-width="1" stroke-dasharray="1 1"/><rect x="967" y="83.8" width="6" height="6" fill="#f4f4f4" stroke="#555" stroke-width="0.9"/><path d="M968.5,85.5H971.5M970,85.5V88.8" stroke="#222" stroke-width="0.9"/><path d="M963.5,96.4H967" stroke="#a8a8a8" stroke-width="1" stroke-dasharray="1 1"/><rect x="967" y="93.4" width="6" height="6" fill="#f4f4f4" stroke="#555" stroke-width="0.9"/><path d="M968.5,95.1H971.5M970,95.1V98.4" stroke="#222" stroke-width="0.9"/><path d="M963.5,106.1H967" stroke="#a8a8a8" stroke-width="1" stroke-dasharray="1 1"/><rect x="967" y="103.1" width="6" height="6" fill="#f4f4f4" stroke="#555" stroke-width="0.9"/><rect x="968.3" y="104.4" width="3.4" height="3.4" fill="#c8c8c8"/><path d="M963.5,115.7H967" stroke="#a8a8a8" stroke-width="1" stroke-dasharray="1 1"/><rect x="967" y="112.7" width="6" height="6" fill="#f4f4f4" stroke="#555" stroke-width="0.9"/><rect x="968.3" y="114.0" width="3.4" height="3.4" fill="#c8c8c8"/><path d="M963.5,125.4H967" stroke="#a8a8a8" stroke-width="1" stroke-dasharray="1 1"/><rect x="967" y="122.4" width="6" height="6" fill="#f4f4f4" stroke="#555" stroke-width="0.9"/><rect x="968.3" y="123.7" width="3.4" height="3.4" fill="#c8c8c8"/><path d="M963.5,135.1H967" stroke="#a8a8a8" stroke-width="1" stroke-dasharray="1 1"/><rect x="967" y="132.1" width="6" height="6" fill="#f4f4f4" stroke="#555" stroke-width="0.9"/><rect x="968.3" y="133.4" width="3.4" height="3.4" fill="#c8c8c8"/><path d="M963.5,144.7H967" stroke="#a8a8a8" stroke-width="1" stroke-dasharray="1 1"/><rect x="967" y="141.7" width="6" height="6" fill="#f4f4f4" stroke="#555" stroke-width="0.9"/><rect x="968.3" y="143.0" width="3.4" height="3.4" fill="#c8c8c8"/><path d="M963.5,154.4H967" stroke="#a8a8a8" stroke-width="1" stroke-dasharray="1 1"/><rect x="967" y="151.4" width="6" height="6" fill="#f4f4f4" stroke="#555" stroke-width="0.9"/><rect x="968.3" y="152.7" width="3.4" height="3.4" fill="#c8c8c8"/><path d="M963.5,164.0H967" stroke="#a8a8a8" stroke-width="1" stroke-dasharray="1 1"/><rect x="967" y="161.0" width="6" height="6" fill="#f4f4f4" stroke="#555" stroke-width="0.9"/><rect x="968.3" y="162.3" width="3.4" height="3.4" fill="#c8c8c8"/><path d="M963.5,173.7H967" stroke="#a8a8a8" stroke-width="1" stroke-dasharray="1 1"/><rect x="967" y="170.7" width="6" height="6" fill="#f4f4f4" stroke="#555" stroke-width="0.9"/><path d="M968.5,172.4H971.5M970,172.4V175.7" stroke="#222" stroke-width="0.9"/><path d="M963.5,183.4H967" stroke="#a8a8a8" stroke-width="1" stroke-dasharray="1 1"/><rect x="967" y="180.4" width="6" height="6" fill="#f4f4f4" stroke="#555" stroke-width="0.9"/><rect x="968.3" y="181.7" width="3.4" height="3.4" fill="#c8c8c8"/><path d="M963.5,193.0H967" stroke="#a8a8a8" stroke-width="1" stroke-dasharray="1 1"/><rect x="967" y="190.0" width="6" height="6" fill="#f4f4f4" stroke="#555" stroke-width="0.9"/><rect x="968.3" y="191.3" width="3.4" height="3.4" fill="#c8c8c8"/><path d="M963.5,202.7H967" stroke="#a8a8a8" stroke-width="1" stroke-dasharray="1 1"/><rect x="967" y="199.7" width="6" height="6" fill="#f4f4f4" stroke="#555" stroke-width="0.9"/><rect x="968.3" y="201.0" width="3.4" height="3.4" fill="#c8c8c8"/><path d="M963.5,212.3H967" stroke="#a8a8a8" stroke-width="1" stroke-dasharray="1 1"/><rect x="967" y="209.3" width="6" height="6" fill="#f4f4f4" stroke="#555" stroke-width="0.9"/><rect x="968.3" y="210.6" width="3.4" height="3.4" fill="#c8c8c8"/><path d="M963.5,222.0H967" stroke="#a8a8a8" stroke-width="1" stroke-dasharray="1 1"/><rect x="967" y="219.0" width="6" height="6" fill="#f4f4f4" stroke="#555" stroke-width="0.9"/><path d="M968.5,220.7H971.5M970,220.7V224.0" stroke="#222" stroke-width="0.9"/><path d="M963.5,231.7H967" stroke="#a8a8a8" stroke-width="1" stroke-dasharray="1 1"/><rect x="967" y="228.7" width="6" height="6" fill="#f4f4f4" stroke="#555" stroke-width="0.9"/><rect x="968.3" y="230.0" width="3.4" height="3.4" fill="#c8c8c8"/><path d="M952.5,241.3H956" stroke="#a8a8a8" stroke-width="1" stroke-dasharray="1 1"/><rect x="949.5" y="238.3" width="6" height="6" fill="#fff" stroke="#b0b0b0" stroke-width="0.8"/><path d="M950.8,241.3H954.2M952.5,239.5V243.1" stroke="#777" stroke-width="0.8"/><rect x="956" y="239.8" width="5" height="5" fill="none" stroke="#222" stroke-width="1"/><path d="M957.5,239.8V237.3H962.5V242.8Z" fill="none" stroke="#222" stroke-width="0.9"/></svg>
<div class="btn" style="left:943.5px;top:269.5px;width:76px;height:10px;line-height:9px;font-size:5.9px;background:#ececec;border-color:#b8b8b8">3D States</div>
<div class="btn" style="left:944.6px;top:281.0px;width:24.3px;height:9px">BEdge</div>
<div class="btn" style="left:969.6px;top:281.0px;width:24.9px;height:9px">Vtx Clr</div>
<div class="btn" style="left:995.4px;top:281.0px;width:24.3px;height:9px">Bne Clr</div>
<div class="btn" style="left:944.6px;top:292.0px;width:24.3px;height:9px">Tex Sm</div>
<div class="btn" style="left:969.6px;top:292.0px;width:24.9px;height:9px">TxSmWr</div>
<div class="btn" style="left:995.4px;top:292.0px;width:24.3px;height:9px">Wirefrme</div>
<div class="btn" style="left:944.6px;top:302.6px;width:24.3px;height:9px">Skel</div>
<div class="btn" style="left:969.6px;top:302.6px;width:24.9px;height:9px">Sd Bkf</div>
<div class="btn" style="left:995.4px;top:302.6px;width:24.3px;height:9px">Inc Bkf</div>
<div class="btn" style="left:944.6px;top:313.3px;width:24.3px;height:9px">Outlne</div>
<div class="btn" style="left:969.6px;top:313.3px;width:24.9px;height:9px">BBox</div>
<div class="btn" style="left:995.4px;top:313.3px;width:24.3px;height:9px">BSphr</div>
<div class="btn" style="left:944.6px;top:324.1px;width:24.3px;height:9px">Grid</div>
<div class="btn" style="left:969.6px;top:324.1px;width:24.9px;height:9px">FNrml</div>
<div class="btn" style="left:995.4px;top:324.1px;width:24.3px;height:9px">VNrml</div>
<div class="a" style="left:4px;top:506px;font-size:7px;font-weight:bold;color:#333">×</div>
<div class="a" style="left:6px;top:516px;width:3px;height:12px;border-left:1px solid #c8c8c8;border-right:1px solid #c8c8c8"></div>
<div class="a" style="left:11.4px;top:510px;width:32px;height:11.5px;background:#fff;border:1px solid #a8a8a8;border-right:none;font-size:5.8px;color:#444;line-height:10px;padding-left:1.5px">0.00000</div>
<div class="a" style="left:43.5px;top:510px;width:32px;height:11.5px;background:#fff;border:1px solid #a8a8a8;font-size:5.8px;color:#444;line-height:10px;padding-left:1.5px">0.00000</div>
<div class="a" style="left:78px;top:508px;width:1px;height:22px;background:#d8d8d8"></div>
<div class="a" style="left:81px;top:506px;font-size:7px;font-weight:bold;color:#333">×</div>
<div class="a" style="left:82.5px;top:516px;width:3px;height:12px;border-left:1px solid #c8c8c8;border-right:1px solid #c8c8c8"></div>
<div class="a" style="left:88.0px;top:510px;width:9px;height:8px;background:#000000;border:1px solid #9a9a9a"></div>
<div class="a" style="left:88.0px;top:519.5px;width:9px;height:8px;background:#ffff00;border:1px solid #9a9a9a"></div>
<div class="a" style="left:98.8px;top:510px;width:9px;height:8px;background:#ffffff;border:1px solid #9a9a9a"></div>
<div class="a" style="left:98.8px;top:519.5px;width:9px;height:8px;background:#000080;border:1px solid #9a9a9a"></div>
<div class="a" style="left:110.0px;top:510px;width:9px;height:8px;background:#c0c0c0;border:1px solid #9a9a9a"></div>
<div class="a" style="left:110.0px;top:519.5px;width:9px;height:8px;background:#008000;border:1px solid #9a9a9a"></div>
<div class="a" style="left:120.5px;top:510px;width:9px;height:8px;background:#0000ff;border:1px solid #9a9a9a"></div>
<div class="a" style="left:120.5px;top:519.5px;width:9px;height:8px;background:#008080;border:1px solid #9a9a9a"></div>
<div class="a" style="left:131.2px;top:510px;width:9px;height:8px;background:#00ff00;border:1px solid #9a9a9a"></div>
<div class="a" style="left:131.2px;top:519.5px;width:9px;height:8px;background:#800000;border:1px solid #9a9a9a"></div>
<div class="a" style="left:142.0px;top:510px;width:9px;height:8px;background:#00ffff;border:1px solid #9a9a9a"></div>
<div class="a" style="left:142.0px;top:519.5px;width:9px;height:8px;background:#800080;border:1px solid #9a9a9a"></div>
<div class="a" style="left:152.7px;top:510px;width:9px;height:8px;background:#ff0000;border:1px solid #9a9a9a"></div>
<div class="a" style="left:152.7px;top:519.5px;width:9px;height:8px;background:#808000;border:1px solid #9a9a9a"></div>
<div class="a" style="left:163.0px;top:510px;width:9px;height:8px;background:#ff00ff;border:1px solid #9a9a9a"></div>
<div class="a" style="left:163.0px;top:519.5px;width:9px;height:8px;background:#808080;border:1px solid #9a9a9a"></div>
<div class="a" style="left:174px;top:510px;width:19.5px;height:17px;background:#0000ff;border:1px solid #9a9a9a"></div>
<div class="a" style="left:198.5px;top:508px;width:1px;height:22px;background:#d8d8d8"></div>
<div class="a" style="left:199.5px;top:506px;font-size:7px;font-weight:bold;color:#333">×</div>
<div class="a" style="left:201px;top:516px;width:3px;height:12px;border-left:1px solid #c8c8c8;border-right:1px solid #c8c8c8"></div>
<div class="a" style="left:207px;top:510px;width:813px;height:18px;background:#fff;border:1px solid #e4e4e4;border-top:1px solid #8c8c8c;border-left:1px solid #6a6a6a"></div>
<div class="a" style="left:208.8px;top:511.5px;font-size:5.6px;color:#333;white-space:nowrap">Ultimate Unwrap3D Pro (x64) v3.50.46 ready.</div>
</body></html>
